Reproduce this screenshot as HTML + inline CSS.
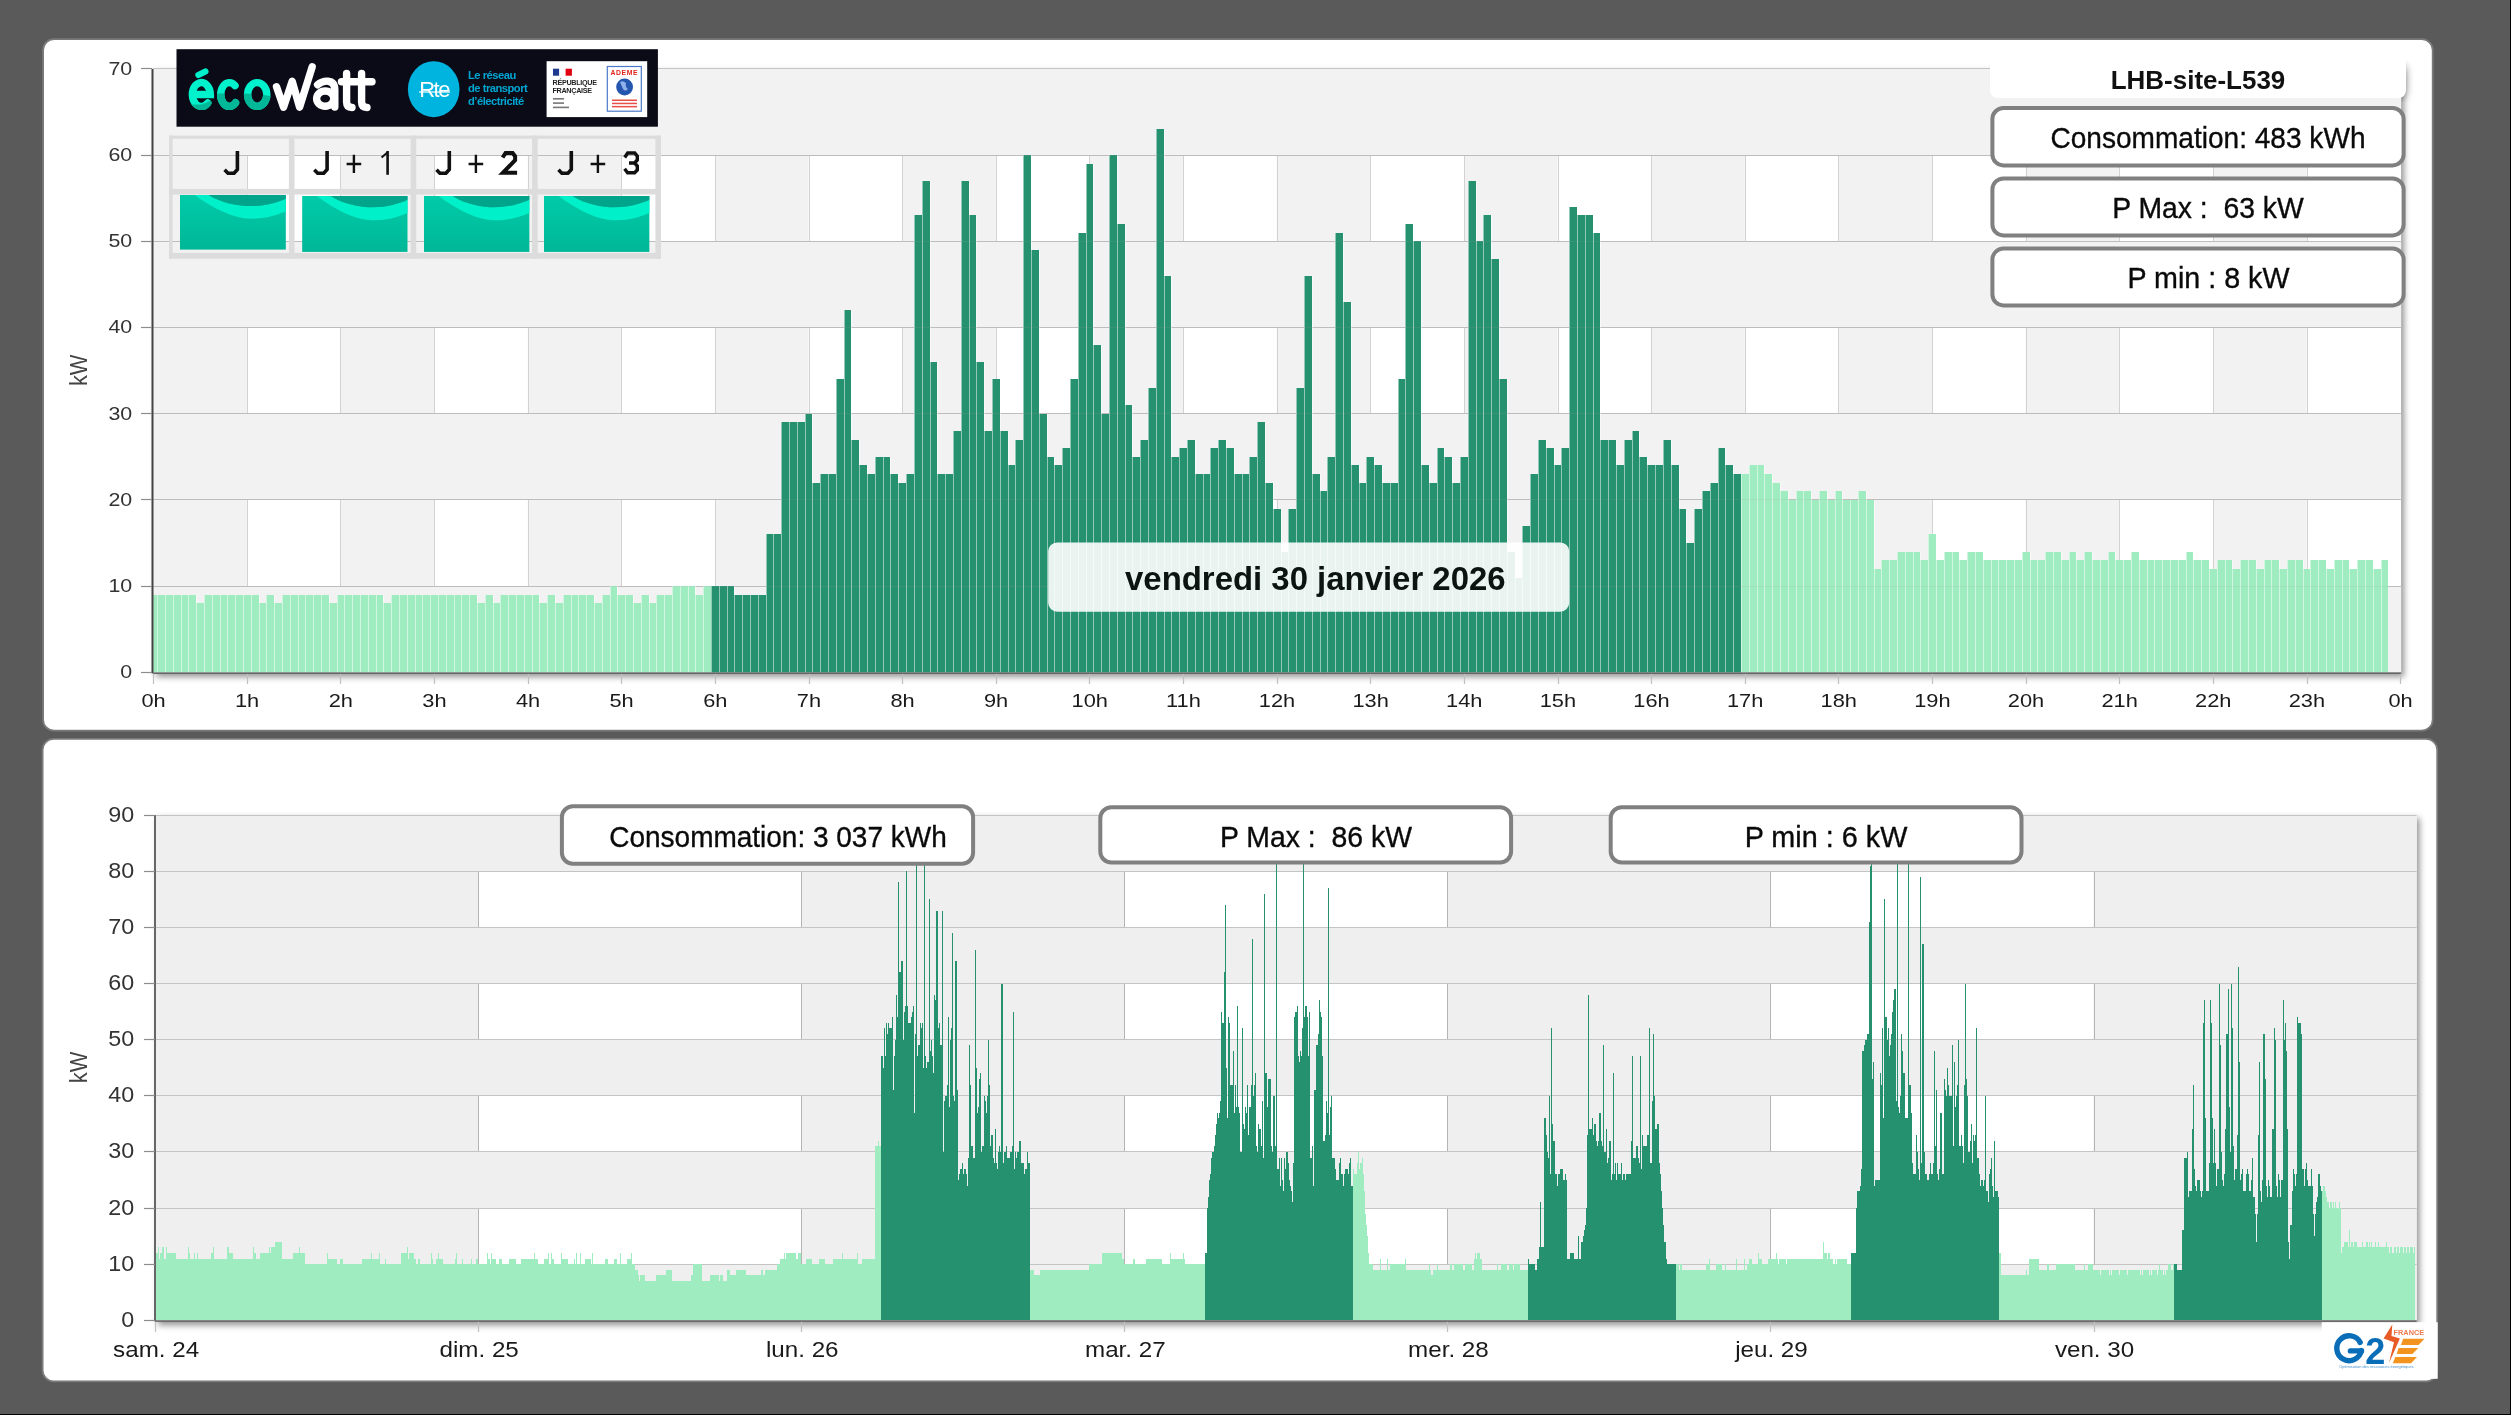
<!DOCTYPE html>
<html><head><meta charset="utf-8"><title>consommation</title>
<style>html,body{margin:0;padding:0;background:#5a5a5a;width:2511px;height:1415px;overflow:hidden;font-family:"Liberation Sans", sans-serif}</style>
</head><body>
<svg width="2511" height="1415" viewBox="0 0 2511 1415" style="position:absolute;left:0;top:0;will-change:transform">
<defs>
<linearGradient id="shR" x1="0" x2="1" y1="0" y2="0"><stop offset="0" stop-color="#000" stop-opacity="0.28"/><stop offset="1" stop-color="#000" stop-opacity="0"/></linearGradient>
<linearGradient id="shB" x1="0" x2="0" y1="0" y2="1"><stop offset="0" stop-color="#000" stop-opacity="0.28"/><stop offset="1" stop-color="#000" stop-opacity="0"/></linearGradient>
<linearGradient id="ecoG" x1="0" x2="0" y1="0" y2="1"><stop offset="0" stop-color="#00f2cc"/><stop offset="0.5" stop-color="#00efc9"/><stop offset="0.56" stop-color="#00b998"/><stop offset="1" stop-color="#00c7a4"/></linearGradient>
<filter id="blurSh" x="-5%" y="-5%" width="110%" height="110%"><feGaussianBlur stdDeviation="3.2"/></filter>
<linearGradient id="ewImg" x1="0" x2="0" y1="0" y2="1"><stop offset="0" stop-color="#00cba9"/><stop offset="1" stop-color="#00b797"/></linearGradient>
</defs>
<rect x="0" y="0" width="2511" height="1415" fill="#5a5a5a"/>
<rect x="2510" y="0" width="1" height="1415" fill="#000"/>
<rect x="0" y="1414" width="2511" height="1" fill="#000"/>
<rect x="43.1" y="39.1" width="2389.6" height="691.6" rx="11" ry="11" fill="#fff" stroke="#7a7a7a" stroke-width="1.8"/>
<rect x="42.6" y="738.9" width="2394.6" height="642.4" rx="11" ry="11" fill="#fff" stroke="#7a7a7a" stroke-width="1.8"/>
<rect x="156.2" y="71.9" width="2247.9" height="605" fill="#000" fill-opacity="0.42" filter="url(#blurSh)"/>
<rect x="1993" y="62" width="415" height="38" rx="9" fill="#000" fill-opacity="0.25" filter="url(#blurSh)"/>
<rect x="153.2" y="68.9" width="2247.9" height="603.5" fill="#fff"/>
<rect x="153.2" y="68.9" width="93.62" height="603.5" fill="#f2f2f2"/>
<rect x="340.45" y="68.9" width="93.62" height="603.5" fill="#f2f2f2"/>
<rect x="527.7" y="68.9" width="93.62" height="603.5" fill="#f2f2f2"/>
<rect x="714.95" y="68.9" width="93.62" height="603.5" fill="#f2f2f2"/>
<rect x="902.2" y="68.9" width="93.62" height="603.5" fill="#f2f2f2"/>
<rect x="1089.45" y="68.9" width="93.62" height="603.5" fill="#f2f2f2"/>
<rect x="1276.7" y="68.9" width="93.62" height="603.5" fill="#f2f2f2"/>
<rect x="1463.95" y="68.9" width="93.62" height="603.5" fill="#f2f2f2"/>
<rect x="1651.2" y="68.9" width="93.62" height="603.5" fill="#f2f2f2"/>
<rect x="1838.45" y="68.9" width="93.62" height="603.5" fill="#f2f2f2"/>
<rect x="2025.7" y="68.9" width="93.62" height="603.5" fill="#f2f2f2"/>
<rect x="2212.95" y="68.9" width="93.62" height="603.5" fill="#f2f2f2"/>
<line x1="247.5" y1="68.9" x2="247.5" y2="672.4" stroke="#d2d2d2" stroke-width="1"/>
<line x1="340.5" y1="68.9" x2="340.5" y2="672.4" stroke="#d2d2d2" stroke-width="1"/>
<line x1="434.5" y1="68.9" x2="434.5" y2="672.4" stroke="#d2d2d2" stroke-width="1"/>
<line x1="528.5" y1="68.9" x2="528.5" y2="672.4" stroke="#d2d2d2" stroke-width="1"/>
<line x1="621.5" y1="68.9" x2="621.5" y2="672.4" stroke="#d2d2d2" stroke-width="1"/>
<line x1="715.5" y1="68.9" x2="715.5" y2="672.4" stroke="#d2d2d2" stroke-width="1"/>
<line x1="809.5" y1="68.9" x2="809.5" y2="672.4" stroke="#d2d2d2" stroke-width="1"/>
<line x1="902.5" y1="68.9" x2="902.5" y2="672.4" stroke="#d2d2d2" stroke-width="1"/>
<line x1="996.5" y1="68.9" x2="996.5" y2="672.4" stroke="#d2d2d2" stroke-width="1"/>
<line x1="1089.5" y1="68.9" x2="1089.5" y2="672.4" stroke="#d2d2d2" stroke-width="1"/>
<line x1="1183.5" y1="68.9" x2="1183.5" y2="672.4" stroke="#d2d2d2" stroke-width="1"/>
<line x1="1277.5" y1="68.9" x2="1277.5" y2="672.4" stroke="#d2d2d2" stroke-width="1"/>
<line x1="1370.5" y1="68.9" x2="1370.5" y2="672.4" stroke="#d2d2d2" stroke-width="1"/>
<line x1="1464.5" y1="68.9" x2="1464.5" y2="672.4" stroke="#d2d2d2" stroke-width="1"/>
<line x1="1558.5" y1="68.9" x2="1558.5" y2="672.4" stroke="#d2d2d2" stroke-width="1"/>
<line x1="1651.5" y1="68.9" x2="1651.5" y2="672.4" stroke="#d2d2d2" stroke-width="1"/>
<line x1="1745.5" y1="68.9" x2="1745.5" y2="672.4" stroke="#d2d2d2" stroke-width="1"/>
<line x1="1838.5" y1="68.9" x2="1838.5" y2="672.4" stroke="#d2d2d2" stroke-width="1"/>
<line x1="1932.5" y1="68.9" x2="1932.5" y2="672.4" stroke="#d2d2d2" stroke-width="1"/>
<line x1="2026.5" y1="68.9" x2="2026.5" y2="672.4" stroke="#d2d2d2" stroke-width="1"/>
<line x1="2119.5" y1="68.9" x2="2119.5" y2="672.4" stroke="#d2d2d2" stroke-width="1"/>
<line x1="2213.5" y1="68.9" x2="2213.5" y2="672.4" stroke="#d2d2d2" stroke-width="1"/>
<line x1="2307.5" y1="68.9" x2="2307.5" y2="672.4" stroke="#d2d2d2" stroke-width="1"/>
<rect x="153.2" y="586.19" width="2247.9" height="86.21" fill="#f2f2f2"/>
<rect x="153.2" y="413.76" width="2247.9" height="86.21" fill="#f2f2f2"/>
<rect x="153.2" y="241.33" width="2247.9" height="86.21" fill="#f2f2f2"/>
<rect x="153.2" y="68.9" width="2247.9" height="86.21" fill="#f2f2f2"/>
<line x1="153.2" y1="586.5" x2="2401.1" y2="586.5" stroke="#c4c4c4" stroke-width="1"/>
<line x1="153.2" y1="499.5" x2="2401.1" y2="499.5" stroke="#c4c4c4" stroke-width="1"/>
<line x1="153.2" y1="413.5" x2="2401.1" y2="413.5" stroke="#c4c4c4" stroke-width="1"/>
<line x1="153.2" y1="327.5" x2="2401.1" y2="327.5" stroke="#c4c4c4" stroke-width="1"/>
<line x1="153.2" y1="241.5" x2="2401.1" y2="241.5" stroke="#c4c4c4" stroke-width="1"/>
<line x1="153.2" y1="155.5" x2="2401.1" y2="155.5" stroke="#c4c4c4" stroke-width="1"/>
<line x1="153.2" y1="68.5" x2="2401.1" y2="68.5" stroke="#c4c4c4" stroke-width="1"/>
<rect x="153.2" y="595" width="3.8" height="77.4" fill="#a0ecc1"/>
<rect x="157" y="595" width="8" height="77.4" fill="#a0ecc1"/>
<rect x="165" y="595" width="8" height="77.4" fill="#a0ecc1"/>
<rect x="173" y="595" width="8" height="77.4" fill="#a0ecc1"/>
<rect x="181" y="595" width="7" height="77.4" fill="#a0ecc1"/>
<rect x="188" y="595" width="8" height="77.4" fill="#a0ecc1"/>
<rect x="196" y="603" width="8" height="69.4" fill="#a0ecc1"/>
<rect x="204" y="595" width="8" height="77.4" fill="#a0ecc1"/>
<rect x="212" y="595" width="8" height="77.4" fill="#a0ecc1"/>
<rect x="220" y="595" width="7" height="77.4" fill="#a0ecc1"/>
<rect x="227" y="595" width="8" height="77.4" fill="#a0ecc1"/>
<rect x="235" y="595" width="8" height="77.4" fill="#a0ecc1"/>
<rect x="243" y="595" width="8" height="77.4" fill="#a0ecc1"/>
<rect x="251" y="595" width="8" height="77.4" fill="#a0ecc1"/>
<rect x="259" y="603" width="7" height="69.4" fill="#a0ecc1"/>
<rect x="266" y="595" width="8" height="77.4" fill="#a0ecc1"/>
<rect x="274" y="603" width="8" height="69.4" fill="#a0ecc1"/>
<rect x="282" y="595" width="8" height="77.4" fill="#a0ecc1"/>
<rect x="290" y="595" width="8" height="77.4" fill="#a0ecc1"/>
<rect x="298" y="595" width="7" height="77.4" fill="#a0ecc1"/>
<rect x="305" y="595" width="8" height="77.4" fill="#a0ecc1"/>
<rect x="313" y="595" width="8" height="77.4" fill="#a0ecc1"/>
<rect x="321" y="595" width="8" height="77.4" fill="#a0ecc1"/>
<rect x="329" y="603" width="8" height="69.4" fill="#a0ecc1"/>
<rect x="337" y="595" width="7" height="77.4" fill="#a0ecc1"/>
<rect x="344" y="595" width="8" height="77.4" fill="#a0ecc1"/>
<rect x="352" y="595" width="8" height="77.4" fill="#a0ecc1"/>
<rect x="360" y="595" width="8" height="77.4" fill="#a0ecc1"/>
<rect x="368" y="595" width="8" height="77.4" fill="#a0ecc1"/>
<rect x="376" y="595" width="7" height="77.4" fill="#a0ecc1"/>
<rect x="383" y="603" width="8" height="69.4" fill="#a0ecc1"/>
<rect x="391" y="595" width="8" height="77.4" fill="#a0ecc1"/>
<rect x="399" y="595" width="8" height="77.4" fill="#a0ecc1"/>
<rect x="407" y="595" width="8" height="77.4" fill="#a0ecc1"/>
<rect x="415" y="595" width="7" height="77.4" fill="#a0ecc1"/>
<rect x="422" y="595" width="8" height="77.4" fill="#a0ecc1"/>
<rect x="430" y="595" width="8" height="77.4" fill="#a0ecc1"/>
<rect x="438" y="595" width="8" height="77.4" fill="#a0ecc1"/>
<rect x="446" y="595" width="8" height="77.4" fill="#a0ecc1"/>
<rect x="454" y="595" width="7" height="77.4" fill="#a0ecc1"/>
<rect x="461" y="595" width="8" height="77.4" fill="#a0ecc1"/>
<rect x="469" y="595" width="8" height="77.4" fill="#a0ecc1"/>
<rect x="477" y="603" width="8" height="69.4" fill="#a0ecc1"/>
<rect x="485" y="595" width="8" height="77.4" fill="#a0ecc1"/>
<rect x="493" y="603" width="7" height="69.4" fill="#a0ecc1"/>
<rect x="500" y="595" width="8" height="77.4" fill="#a0ecc1"/>
<rect x="508" y="595" width="8" height="77.4" fill="#a0ecc1"/>
<rect x="516" y="595" width="8" height="77.4" fill="#a0ecc1"/>
<rect x="524" y="595" width="8" height="77.4" fill="#a0ecc1"/>
<rect x="532" y="595" width="7" height="77.4" fill="#a0ecc1"/>
<rect x="539" y="603" width="8" height="69.4" fill="#a0ecc1"/>
<rect x="547" y="595" width="8" height="77.4" fill="#a0ecc1"/>
<rect x="555" y="603" width="8" height="69.4" fill="#a0ecc1"/>
<rect x="563" y="595" width="8" height="77.4" fill="#a0ecc1"/>
<rect x="571" y="595" width="7" height="77.4" fill="#a0ecc1"/>
<rect x="578" y="595" width="8" height="77.4" fill="#a0ecc1"/>
<rect x="586" y="595" width="8" height="77.4" fill="#a0ecc1"/>
<rect x="594" y="603" width="8" height="69.4" fill="#a0ecc1"/>
<rect x="602" y="595" width="8" height="77.4" fill="#a0ecc1"/>
<rect x="610" y="586" width="7" height="86.4" fill="#a0ecc1"/>
<rect x="617" y="595" width="8" height="77.4" fill="#a0ecc1"/>
<rect x="625" y="595" width="8" height="77.4" fill="#a0ecc1"/>
<rect x="633" y="603" width="8" height="69.4" fill="#a0ecc1"/>
<rect x="641" y="595" width="8" height="77.4" fill="#a0ecc1"/>
<rect x="649" y="603" width="7" height="69.4" fill="#a0ecc1"/>
<rect x="656" y="595" width="8" height="77.4" fill="#a0ecc1"/>
<rect x="664" y="595" width="8" height="77.4" fill="#a0ecc1"/>
<rect x="672" y="586" width="8" height="86.4" fill="#a0ecc1"/>
<rect x="680" y="586" width="8" height="86.4" fill="#a0ecc1"/>
<rect x="688" y="586" width="7" height="86.4" fill="#a0ecc1"/>
<rect x="695" y="595" width="8" height="77.4" fill="#a0ecc1"/>
<rect x="703" y="586" width="8" height="86.4" fill="#a0ecc1"/>
<rect x="711" y="586" width="8" height="86.4" fill="#25916f"/>
<rect x="719" y="586" width="8" height="86.4" fill="#25916f"/>
<rect x="727" y="586" width="7" height="86.4" fill="#25916f"/>
<rect x="734" y="595" width="8" height="77.4" fill="#25916f"/>
<rect x="742" y="595" width="8" height="77.4" fill="#25916f"/>
<rect x="750" y="595" width="8" height="77.4" fill="#25916f"/>
<rect x="758" y="595" width="8" height="77.4" fill="#25916f"/>
<rect x="766" y="534" width="7" height="138.4" fill="#25916f"/>
<rect x="773" y="534" width="8" height="138.4" fill="#25916f"/>
<rect x="781" y="422" width="8" height="250.4" fill="#25916f"/>
<rect x="789" y="422" width="8" height="250.4" fill="#25916f"/>
<rect x="797" y="422" width="8" height="250.4" fill="#25916f"/>
<rect x="805" y="414" width="7" height="258.4" fill="#25916f"/>
<rect x="812" y="483" width="8" height="189.4" fill="#25916f"/>
<rect x="820" y="474" width="8" height="198.4" fill="#25916f"/>
<rect x="828" y="474" width="8" height="198.4" fill="#25916f"/>
<rect x="836" y="379" width="8" height="293.4" fill="#25916f"/>
<rect x="844" y="310" width="7" height="362.4" fill="#25916f"/>
<rect x="851" y="440" width="8" height="232.4" fill="#25916f"/>
<rect x="859" y="465" width="8" height="207.4" fill="#25916f"/>
<rect x="867" y="474" width="8" height="198.4" fill="#25916f"/>
<rect x="875" y="457" width="8" height="215.4" fill="#25916f"/>
<rect x="883" y="457" width="7" height="215.4" fill="#25916f"/>
<rect x="890" y="474" width="8" height="198.4" fill="#25916f"/>
<rect x="898" y="483" width="8" height="189.4" fill="#25916f"/>
<rect x="906" y="474" width="8" height="198.4" fill="#25916f"/>
<rect x="914" y="215" width="8" height="457.4" fill="#25916f"/>
<rect x="922" y="181" width="8" height="491.4" fill="#25916f"/>
<rect x="930" y="362" width="7" height="310.4" fill="#25916f"/>
<rect x="937" y="474" width="8" height="198.4" fill="#25916f"/>
<rect x="945" y="474" width="8" height="198.4" fill="#25916f"/>
<rect x="953" y="431" width="8" height="241.4" fill="#25916f"/>
<rect x="961" y="181" width="8" height="491.4" fill="#25916f"/>
<rect x="969" y="215" width="7" height="457.4" fill="#25916f"/>
<rect x="976" y="362" width="8" height="310.4" fill="#25916f"/>
<rect x="984" y="431" width="8" height="241.4" fill="#25916f"/>
<rect x="992" y="379" width="8" height="293.4" fill="#25916f"/>
<rect x="1000" y="431" width="8" height="241.4" fill="#25916f"/>
<rect x="1008" y="465" width="7" height="207.4" fill="#25916f"/>
<rect x="1015" y="440" width="8" height="232.4" fill="#25916f"/>
<rect x="1023" y="155" width="8" height="517.4" fill="#25916f"/>
<rect x="1031" y="250" width="8" height="422.4" fill="#25916f"/>
<rect x="1039" y="414" width="8" height="258.4" fill="#25916f"/>
<rect x="1047" y="457" width="7" height="215.4" fill="#25916f"/>
<rect x="1054" y="465" width="8" height="207.4" fill="#25916f"/>
<rect x="1062" y="448" width="8" height="224.4" fill="#25916f"/>
<rect x="1070" y="379" width="8" height="293.4" fill="#25916f"/>
<rect x="1078" y="233" width="8" height="439.4" fill="#25916f"/>
<rect x="1086" y="164" width="7" height="508.4" fill="#25916f"/>
<rect x="1093" y="345" width="8" height="327.4" fill="#25916f"/>
<rect x="1101" y="414" width="8" height="258.4" fill="#25916f"/>
<rect x="1109" y="155" width="8" height="517.4" fill="#25916f"/>
<rect x="1117" y="224" width="8" height="448.4" fill="#25916f"/>
<rect x="1125" y="405" width="7" height="267.4" fill="#25916f"/>
<rect x="1132" y="457" width="8" height="215.4" fill="#25916f"/>
<rect x="1140" y="440" width="8" height="232.4" fill="#25916f"/>
<rect x="1148" y="388" width="8" height="284.4" fill="#25916f"/>
<rect x="1156" y="129" width="8" height="543.4" fill="#25916f"/>
<rect x="1164" y="276" width="7" height="396.4" fill="#25916f"/>
<rect x="1171" y="457" width="8" height="215.4" fill="#25916f"/>
<rect x="1179" y="448" width="8" height="224.4" fill="#25916f"/>
<rect x="1187" y="440" width="8" height="232.4" fill="#25916f"/>
<rect x="1195" y="474" width="8" height="198.4" fill="#25916f"/>
<rect x="1203" y="474" width="7" height="198.4" fill="#25916f"/>
<rect x="1210" y="448" width="8" height="224.4" fill="#25916f"/>
<rect x="1218" y="440" width="8" height="232.4" fill="#25916f"/>
<rect x="1226" y="448" width="8" height="224.4" fill="#25916f"/>
<rect x="1234" y="474" width="8" height="198.4" fill="#25916f"/>
<rect x="1242" y="474" width="7" height="198.4" fill="#25916f"/>
<rect x="1249" y="457" width="8" height="215.4" fill="#25916f"/>
<rect x="1257" y="422" width="8" height="250.4" fill="#25916f"/>
<rect x="1265" y="483" width="8" height="189.4" fill="#25916f"/>
<rect x="1273" y="509" width="8" height="163.4" fill="#25916f"/>
<rect x="1281" y="552" width="7" height="120.4" fill="#25916f"/>
<rect x="1288" y="509" width="8" height="163.4" fill="#25916f"/>
<rect x="1296" y="388" width="8" height="284.4" fill="#25916f"/>
<rect x="1304" y="276" width="8" height="396.4" fill="#25916f"/>
<rect x="1312" y="474" width="8" height="198.4" fill="#25916f"/>
<rect x="1320" y="491" width="7" height="181.4" fill="#25916f"/>
<rect x="1327" y="457" width="8" height="215.4" fill="#25916f"/>
<rect x="1335" y="233" width="8" height="439.4" fill="#25916f"/>
<rect x="1343" y="302" width="8" height="370.4" fill="#25916f"/>
<rect x="1351" y="465" width="8" height="207.4" fill="#25916f"/>
<rect x="1359" y="483" width="7" height="189.4" fill="#25916f"/>
<rect x="1366" y="457" width="8" height="215.4" fill="#25916f"/>
<rect x="1374" y="465" width="8" height="207.4" fill="#25916f"/>
<rect x="1382" y="483" width="8" height="189.4" fill="#25916f"/>
<rect x="1390" y="483" width="8" height="189.4" fill="#25916f"/>
<rect x="1398" y="379" width="7" height="293.4" fill="#25916f"/>
<rect x="1405" y="224" width="8" height="448.4" fill="#25916f"/>
<rect x="1413" y="241" width="8" height="431.4" fill="#25916f"/>
<rect x="1421" y="465" width="8" height="207.4" fill="#25916f"/>
<rect x="1429" y="483" width="8" height="189.4" fill="#25916f"/>
<rect x="1437" y="448" width="7" height="224.4" fill="#25916f"/>
<rect x="1444" y="457" width="8" height="215.4" fill="#25916f"/>
<rect x="1452" y="483" width="8" height="189.4" fill="#25916f"/>
<rect x="1460" y="457" width="8" height="215.4" fill="#25916f"/>
<rect x="1468" y="181" width="8" height="491.4" fill="#25916f"/>
<rect x="1476" y="241" width="7" height="431.4" fill="#25916f"/>
<rect x="1483" y="215" width="8" height="457.4" fill="#25916f"/>
<rect x="1491" y="259" width="8" height="413.4" fill="#25916f"/>
<rect x="1499" y="379" width="8" height="293.4" fill="#25916f"/>
<rect x="1507" y="552" width="8" height="120.4" fill="#25916f"/>
<rect x="1515" y="578" width="7" height="94.4" fill="#25916f"/>
<rect x="1522" y="526" width="8" height="146.4" fill="#25916f"/>
<rect x="1530" y="474" width="8" height="198.4" fill="#25916f"/>
<rect x="1538" y="440" width="8" height="232.4" fill="#25916f"/>
<rect x="1546" y="448" width="8" height="224.4" fill="#25916f"/>
<rect x="1554" y="465" width="7" height="207.4" fill="#25916f"/>
<rect x="1561" y="448" width="8" height="224.4" fill="#25916f"/>
<rect x="1569" y="207" width="8" height="465.4" fill="#25916f"/>
<rect x="1577" y="215" width="8" height="457.4" fill="#25916f"/>
<rect x="1585" y="215" width="8" height="457.4" fill="#25916f"/>
<rect x="1593" y="233" width="7" height="439.4" fill="#25916f"/>
<rect x="1600" y="440" width="8" height="232.4" fill="#25916f"/>
<rect x="1608" y="440" width="8" height="232.4" fill="#25916f"/>
<rect x="1616" y="465" width="8" height="207.4" fill="#25916f"/>
<rect x="1624" y="440" width="8" height="232.4" fill="#25916f"/>
<rect x="1632" y="431" width="7" height="241.4" fill="#25916f"/>
<rect x="1639" y="457" width="8" height="215.4" fill="#25916f"/>
<rect x="1647" y="465" width="8" height="207.4" fill="#25916f"/>
<rect x="1655" y="465" width="8" height="207.4" fill="#25916f"/>
<rect x="1663" y="440" width="8" height="232.4" fill="#25916f"/>
<rect x="1671" y="465" width="8" height="207.4" fill="#25916f"/>
<rect x="1679" y="509" width="7" height="163.4" fill="#25916f"/>
<rect x="1686" y="543" width="8" height="129.4" fill="#25916f"/>
<rect x="1694" y="509" width="8" height="163.4" fill="#25916f"/>
<rect x="1702" y="491" width="8" height="181.4" fill="#25916f"/>
<rect x="1710" y="483" width="8" height="189.4" fill="#25916f"/>
<rect x="1718" y="448" width="7" height="224.4" fill="#25916f"/>
<rect x="1725" y="465" width="8" height="207.4" fill="#25916f"/>
<rect x="1733" y="474" width="8" height="198.4" fill="#25916f"/>
<rect x="1741" y="474" width="8" height="198.4" fill="#a0ecc1"/>
<rect x="1749" y="465" width="8" height="207.4" fill="#a0ecc1"/>
<rect x="1757" y="465" width="7" height="207.4" fill="#a0ecc1"/>
<rect x="1764" y="474" width="8" height="198.4" fill="#a0ecc1"/>
<rect x="1772" y="483" width="8" height="189.4" fill="#a0ecc1"/>
<rect x="1780" y="491" width="8" height="181.4" fill="#a0ecc1"/>
<rect x="1788" y="500" width="8" height="172.4" fill="#a0ecc1"/>
<rect x="1796" y="491" width="7" height="181.4" fill="#a0ecc1"/>
<rect x="1803" y="491" width="8" height="181.4" fill="#a0ecc1"/>
<rect x="1811" y="500" width="8" height="172.4" fill="#a0ecc1"/>
<rect x="1819" y="491" width="8" height="181.4" fill="#a0ecc1"/>
<rect x="1827" y="500" width="8" height="172.4" fill="#a0ecc1"/>
<rect x="1835" y="491" width="7" height="181.4" fill="#a0ecc1"/>
<rect x="1842" y="500" width="8" height="172.4" fill="#a0ecc1"/>
<rect x="1850" y="500" width="8" height="172.4" fill="#a0ecc1"/>
<rect x="1858" y="491" width="8" height="181.4" fill="#a0ecc1"/>
<rect x="1866" y="500" width="8" height="172.4" fill="#a0ecc1"/>
<rect x="1874" y="569" width="7" height="103.4" fill="#a0ecc1"/>
<rect x="1881" y="560" width="8" height="112.4" fill="#a0ecc1"/>
<rect x="1889" y="560" width="8" height="112.4" fill="#a0ecc1"/>
<rect x="1897" y="552" width="8" height="120.4" fill="#a0ecc1"/>
<rect x="1905" y="552" width="8" height="120.4" fill="#a0ecc1"/>
<rect x="1913" y="552" width="7" height="120.4" fill="#a0ecc1"/>
<rect x="1920" y="560" width="8" height="112.4" fill="#a0ecc1"/>
<rect x="1928" y="534" width="8" height="138.4" fill="#a0ecc1"/>
<rect x="1936" y="560" width="8" height="112.4" fill="#a0ecc1"/>
<rect x="1944" y="552" width="8" height="120.4" fill="#a0ecc1"/>
<rect x="1952" y="552" width="7" height="120.4" fill="#a0ecc1"/>
<rect x="1959" y="560" width="8" height="112.4" fill="#a0ecc1"/>
<rect x="1967" y="552" width="8" height="120.4" fill="#a0ecc1"/>
<rect x="1975" y="552" width="8" height="120.4" fill="#a0ecc1"/>
<rect x="1983" y="560" width="8" height="112.4" fill="#a0ecc1"/>
<rect x="1991" y="560" width="7" height="112.4" fill="#a0ecc1"/>
<rect x="1998" y="560" width="8" height="112.4" fill="#a0ecc1"/>
<rect x="2006" y="560" width="8" height="112.4" fill="#a0ecc1"/>
<rect x="2014" y="560" width="8" height="112.4" fill="#a0ecc1"/>
<rect x="2022" y="552" width="8" height="120.4" fill="#a0ecc1"/>
<rect x="2030" y="560" width="7" height="112.4" fill="#a0ecc1"/>
<rect x="2037" y="560" width="8" height="112.4" fill="#a0ecc1"/>
<rect x="2045" y="552" width="8" height="120.4" fill="#a0ecc1"/>
<rect x="2053" y="552" width="8" height="120.4" fill="#a0ecc1"/>
<rect x="2061" y="560" width="8" height="112.4" fill="#a0ecc1"/>
<rect x="2069" y="552" width="7" height="120.4" fill="#a0ecc1"/>
<rect x="2076" y="560" width="8" height="112.4" fill="#a0ecc1"/>
<rect x="2084" y="552" width="8" height="120.4" fill="#a0ecc1"/>
<rect x="2092" y="560" width="8" height="112.4" fill="#a0ecc1"/>
<rect x="2100" y="560" width="8" height="112.4" fill="#a0ecc1"/>
<rect x="2108" y="552" width="7" height="120.4" fill="#a0ecc1"/>
<rect x="2115" y="560" width="8" height="112.4" fill="#a0ecc1"/>
<rect x="2123" y="560" width="8" height="112.4" fill="#a0ecc1"/>
<rect x="2131" y="552" width="8" height="120.4" fill="#a0ecc1"/>
<rect x="2139" y="560" width="8" height="112.4" fill="#a0ecc1"/>
<rect x="2147" y="560" width="7" height="112.4" fill="#a0ecc1"/>
<rect x="2154" y="560" width="8" height="112.4" fill="#a0ecc1"/>
<rect x="2162" y="560" width="8" height="112.4" fill="#a0ecc1"/>
<rect x="2170" y="560" width="8" height="112.4" fill="#a0ecc1"/>
<rect x="2178" y="560" width="8" height="112.4" fill="#a0ecc1"/>
<rect x="2186" y="552" width="7" height="120.4" fill="#a0ecc1"/>
<rect x="2193" y="560" width="8" height="112.4" fill="#a0ecc1"/>
<rect x="2201" y="560" width="8" height="112.4" fill="#a0ecc1"/>
<rect x="2209" y="569" width="8" height="103.4" fill="#a0ecc1"/>
<rect x="2217" y="560" width="8" height="112.4" fill="#a0ecc1"/>
<rect x="2225" y="560" width="7" height="112.4" fill="#a0ecc1"/>
<rect x="2232" y="569" width="8" height="103.4" fill="#a0ecc1"/>
<rect x="2240" y="560" width="8" height="112.4" fill="#a0ecc1"/>
<rect x="2248" y="560" width="8" height="112.4" fill="#a0ecc1"/>
<rect x="2256" y="569" width="8" height="103.4" fill="#a0ecc1"/>
<rect x="2264" y="560" width="7" height="112.4" fill="#a0ecc1"/>
<rect x="2271" y="560" width="8" height="112.4" fill="#a0ecc1"/>
<rect x="2279" y="569" width="8" height="103.4" fill="#a0ecc1"/>
<rect x="2287" y="560" width="8" height="112.4" fill="#a0ecc1"/>
<rect x="2295" y="560" width="8" height="112.4" fill="#a0ecc1"/>
<rect x="2303" y="569" width="7" height="103.4" fill="#a0ecc1"/>
<rect x="2310" y="560" width="8" height="112.4" fill="#a0ecc1"/>
<rect x="2318" y="560" width="8" height="112.4" fill="#a0ecc1"/>
<rect x="2326" y="569" width="8" height="103.4" fill="#a0ecc1"/>
<rect x="2334" y="560" width="8" height="112.4" fill="#a0ecc1"/>
<rect x="2342" y="560" width="7" height="112.4" fill="#a0ecc1"/>
<rect x="2349" y="569" width="8" height="103.4" fill="#a0ecc1"/>
<rect x="2357" y="560" width="8" height="112.4" fill="#a0ecc1"/>
<rect x="2365" y="560" width="8" height="112.4" fill="#a0ecc1"/>
<rect x="2373" y="569" width="8" height="103.4" fill="#a0ecc1"/>
<rect x="2381" y="560" width="7" height="112.4" fill="#a0ecc1"/>
<rect x="157" y="595" width="1" height="77.4" fill="#fff" fill-opacity="0.5"/>
<rect x="165" y="595" width="1" height="77.4" fill="#fff" fill-opacity="0.5"/>
<rect x="173" y="595" width="1" height="77.4" fill="#fff" fill-opacity="0.5"/>
<rect x="181" y="595" width="1" height="77.4" fill="#fff" fill-opacity="0.5"/>
<rect x="188" y="595" width="1" height="77.4" fill="#fff" fill-opacity="0.5"/>
<rect x="196" y="595" width="1" height="77.4" fill="#fff" fill-opacity="0.5"/>
<rect x="204" y="595" width="1" height="77.4" fill="#fff" fill-opacity="0.5"/>
<rect x="212" y="595" width="1" height="77.4" fill="#fff" fill-opacity="0.5"/>
<rect x="220" y="595" width="1" height="77.4" fill="#fff" fill-opacity="0.5"/>
<rect x="227" y="595" width="1" height="77.4" fill="#fff" fill-opacity="0.5"/>
<rect x="235" y="595" width="1" height="77.4" fill="#fff" fill-opacity="0.5"/>
<rect x="243" y="595" width="1" height="77.4" fill="#fff" fill-opacity="0.5"/>
<rect x="251" y="595" width="1" height="77.4" fill="#fff" fill-opacity="0.5"/>
<rect x="259" y="595" width="1" height="77.4" fill="#fff" fill-opacity="0.5"/>
<rect x="266" y="595" width="1" height="77.4" fill="#fff" fill-opacity="0.5"/>
<rect x="274" y="595" width="1" height="77.4" fill="#fff" fill-opacity="0.5"/>
<rect x="282" y="595" width="1" height="77.4" fill="#fff" fill-opacity="0.5"/>
<rect x="290" y="595" width="1" height="77.4" fill="#fff" fill-opacity="0.5"/>
<rect x="298" y="595" width="1" height="77.4" fill="#fff" fill-opacity="0.5"/>
<rect x="305" y="595" width="1" height="77.4" fill="#fff" fill-opacity="0.5"/>
<rect x="313" y="595" width="1" height="77.4" fill="#fff" fill-opacity="0.5"/>
<rect x="321" y="595" width="1" height="77.4" fill="#fff" fill-opacity="0.5"/>
<rect x="329" y="595" width="1" height="77.4" fill="#fff" fill-opacity="0.5"/>
<rect x="337" y="595" width="1" height="77.4" fill="#fff" fill-opacity="0.5"/>
<rect x="344" y="595" width="1" height="77.4" fill="#fff" fill-opacity="0.5"/>
<rect x="352" y="595" width="1" height="77.4" fill="#fff" fill-opacity="0.5"/>
<rect x="360" y="595" width="1" height="77.4" fill="#fff" fill-opacity="0.5"/>
<rect x="368" y="595" width="1" height="77.4" fill="#fff" fill-opacity="0.5"/>
<rect x="376" y="595" width="1" height="77.4" fill="#fff" fill-opacity="0.5"/>
<rect x="383" y="595" width="1" height="77.4" fill="#fff" fill-opacity="0.5"/>
<rect x="391" y="595" width="1" height="77.4" fill="#fff" fill-opacity="0.5"/>
<rect x="399" y="595" width="1" height="77.4" fill="#fff" fill-opacity="0.5"/>
<rect x="407" y="595" width="1" height="77.4" fill="#fff" fill-opacity="0.5"/>
<rect x="415" y="595" width="1" height="77.4" fill="#fff" fill-opacity="0.5"/>
<rect x="422" y="595" width="1" height="77.4" fill="#fff" fill-opacity="0.5"/>
<rect x="430" y="595" width="1" height="77.4" fill="#fff" fill-opacity="0.5"/>
<rect x="438" y="595" width="1" height="77.4" fill="#fff" fill-opacity="0.5"/>
<rect x="446" y="595" width="1" height="77.4" fill="#fff" fill-opacity="0.5"/>
<rect x="454" y="595" width="1" height="77.4" fill="#fff" fill-opacity="0.5"/>
<rect x="461" y="595" width="1" height="77.4" fill="#fff" fill-opacity="0.5"/>
<rect x="469" y="595" width="1" height="77.4" fill="#fff" fill-opacity="0.5"/>
<rect x="477" y="595" width="1" height="77.4" fill="#fff" fill-opacity="0.5"/>
<rect x="485" y="595" width="1" height="77.4" fill="#fff" fill-opacity="0.5"/>
<rect x="493" y="595" width="1" height="77.4" fill="#fff" fill-opacity="0.5"/>
<rect x="500" y="595" width="1" height="77.4" fill="#fff" fill-opacity="0.5"/>
<rect x="508" y="595" width="1" height="77.4" fill="#fff" fill-opacity="0.5"/>
<rect x="516" y="595" width="1" height="77.4" fill="#fff" fill-opacity="0.5"/>
<rect x="524" y="595" width="1" height="77.4" fill="#fff" fill-opacity="0.5"/>
<rect x="532" y="595" width="1" height="77.4" fill="#fff" fill-opacity="0.5"/>
<rect x="539" y="595" width="1" height="77.4" fill="#fff" fill-opacity="0.5"/>
<rect x="547" y="595" width="1" height="77.4" fill="#fff" fill-opacity="0.5"/>
<rect x="555" y="595" width="1" height="77.4" fill="#fff" fill-opacity="0.5"/>
<rect x="563" y="595" width="1" height="77.4" fill="#fff" fill-opacity="0.5"/>
<rect x="571" y="595" width="1" height="77.4" fill="#fff" fill-opacity="0.5"/>
<rect x="578" y="595" width="1" height="77.4" fill="#fff" fill-opacity="0.5"/>
<rect x="586" y="595" width="1" height="77.4" fill="#fff" fill-opacity="0.5"/>
<rect x="594" y="595" width="1" height="77.4" fill="#fff" fill-opacity="0.5"/>
<rect x="602" y="595" width="1" height="77.4" fill="#fff" fill-opacity="0.5"/>
<rect x="610" y="586" width="1" height="86.4" fill="#fff" fill-opacity="0.5"/>
<rect x="617" y="586" width="1" height="86.4" fill="#fff" fill-opacity="0.5"/>
<rect x="625" y="595" width="1" height="77.4" fill="#fff" fill-opacity="0.5"/>
<rect x="633" y="595" width="1" height="77.4" fill="#fff" fill-opacity="0.5"/>
<rect x="641" y="595" width="1" height="77.4" fill="#fff" fill-opacity="0.5"/>
<rect x="649" y="595" width="1" height="77.4" fill="#fff" fill-opacity="0.5"/>
<rect x="656" y="595" width="1" height="77.4" fill="#fff" fill-opacity="0.5"/>
<rect x="664" y="595" width="1" height="77.4" fill="#fff" fill-opacity="0.5"/>
<rect x="672" y="586" width="1" height="86.4" fill="#fff" fill-opacity="0.5"/>
<rect x="680" y="586" width="1" height="86.4" fill="#fff" fill-opacity="0.5"/>
<rect x="688" y="586" width="1" height="86.4" fill="#fff" fill-opacity="0.5"/>
<rect x="695" y="586" width="1" height="86.4" fill="#fff" fill-opacity="0.5"/>
<rect x="703" y="586" width="1" height="86.4" fill="#fff" fill-opacity="0.5"/>
<rect x="711" y="586" width="1" height="86.4" fill="#fff" fill-opacity="0.5"/>
<rect x="719" y="586" width="1" height="86.4" fill="#fff" fill-opacity="0.5"/>
<rect x="727" y="586" width="1" height="86.4" fill="#fff" fill-opacity="0.5"/>
<rect x="734" y="586" width="1" height="86.4" fill="#fff" fill-opacity="0.5"/>
<rect x="742" y="595" width="1" height="77.4" fill="#fff" fill-opacity="0.5"/>
<rect x="750" y="595" width="1" height="77.4" fill="#fff" fill-opacity="0.5"/>
<rect x="758" y="595" width="1" height="77.4" fill="#fff" fill-opacity="0.5"/>
<rect x="766" y="534" width="1" height="138.4" fill="#fff" fill-opacity="0.5"/>
<rect x="773" y="534" width="1" height="138.4" fill="#fff" fill-opacity="0.5"/>
<rect x="781" y="422" width="1" height="250.4" fill="#fff" fill-opacity="0.5"/>
<rect x="789" y="422" width="1" height="250.4" fill="#fff" fill-opacity="0.5"/>
<rect x="797" y="422" width="1" height="250.4" fill="#fff" fill-opacity="0.5"/>
<rect x="805" y="414" width="1" height="258.4" fill="#fff" fill-opacity="0.5"/>
<rect x="812" y="414" width="1" height="258.4" fill="#fff" fill-opacity="0.5"/>
<rect x="820" y="474" width="1" height="198.4" fill="#fff" fill-opacity="0.5"/>
<rect x="828" y="474" width="1" height="198.4" fill="#fff" fill-opacity="0.5"/>
<rect x="836" y="379" width="1" height="293.4" fill="#fff" fill-opacity="0.5"/>
<rect x="844" y="310" width="1" height="362.4" fill="#fff" fill-opacity="0.5"/>
<rect x="851" y="310" width="1" height="362.4" fill="#fff" fill-opacity="0.5"/>
<rect x="859" y="440" width="1" height="232.4" fill="#fff" fill-opacity="0.5"/>
<rect x="867" y="465" width="1" height="207.4" fill="#fff" fill-opacity="0.5"/>
<rect x="875" y="457" width="1" height="215.4" fill="#fff" fill-opacity="0.5"/>
<rect x="883" y="457" width="1" height="215.4" fill="#fff" fill-opacity="0.5"/>
<rect x="890" y="457" width="1" height="215.4" fill="#fff" fill-opacity="0.5"/>
<rect x="898" y="474" width="1" height="198.4" fill="#fff" fill-opacity="0.5"/>
<rect x="906" y="474" width="1" height="198.4" fill="#fff" fill-opacity="0.5"/>
<rect x="914" y="215" width="1" height="457.4" fill="#fff" fill-opacity="0.5"/>
<rect x="922" y="181" width="1" height="491.4" fill="#fff" fill-opacity="0.5"/>
<rect x="930" y="181" width="1" height="491.4" fill="#fff" fill-opacity="0.5"/>
<rect x="937" y="362" width="1" height="310.4" fill="#fff" fill-opacity="0.5"/>
<rect x="945" y="474" width="1" height="198.4" fill="#fff" fill-opacity="0.5"/>
<rect x="953" y="431" width="1" height="241.4" fill="#fff" fill-opacity="0.5"/>
<rect x="961" y="181" width="1" height="491.4" fill="#fff" fill-opacity="0.5"/>
<rect x="969" y="181" width="1" height="491.4" fill="#fff" fill-opacity="0.5"/>
<rect x="976" y="215" width="1" height="457.4" fill="#fff" fill-opacity="0.5"/>
<rect x="984" y="362" width="1" height="310.4" fill="#fff" fill-opacity="0.5"/>
<rect x="992" y="379" width="1" height="293.4" fill="#fff" fill-opacity="0.5"/>
<rect x="1000" y="379" width="1" height="293.4" fill="#fff" fill-opacity="0.5"/>
<rect x="1008" y="431" width="1" height="241.4" fill="#fff" fill-opacity="0.5"/>
<rect x="1015" y="440" width="1" height="232.4" fill="#fff" fill-opacity="0.5"/>
<rect x="1023" y="155" width="1" height="517.4" fill="#fff" fill-opacity="0.5"/>
<rect x="1031" y="155" width="1" height="517.4" fill="#fff" fill-opacity="0.5"/>
<rect x="1039" y="250" width="1" height="422.4" fill="#fff" fill-opacity="0.5"/>
<rect x="1047" y="414" width="1" height="258.4" fill="#fff" fill-opacity="0.5"/>
<rect x="1054" y="457" width="1" height="215.4" fill="#fff" fill-opacity="0.5"/>
<rect x="1062" y="448" width="1" height="224.4" fill="#fff" fill-opacity="0.5"/>
<rect x="1070" y="379" width="1" height="293.4" fill="#fff" fill-opacity="0.5"/>
<rect x="1078" y="233" width="1" height="439.4" fill="#fff" fill-opacity="0.5"/>
<rect x="1086" y="164" width="1" height="508.4" fill="#fff" fill-opacity="0.5"/>
<rect x="1093" y="164" width="1" height="508.4" fill="#fff" fill-opacity="0.5"/>
<rect x="1101" y="345" width="1" height="327.4" fill="#fff" fill-opacity="0.5"/>
<rect x="1109" y="155" width="1" height="517.4" fill="#fff" fill-opacity="0.5"/>
<rect x="1117" y="155" width="1" height="517.4" fill="#fff" fill-opacity="0.5"/>
<rect x="1125" y="224" width="1" height="448.4" fill="#fff" fill-opacity="0.5"/>
<rect x="1132" y="405" width="1" height="267.4" fill="#fff" fill-opacity="0.5"/>
<rect x="1140" y="440" width="1" height="232.4" fill="#fff" fill-opacity="0.5"/>
<rect x="1148" y="388" width="1" height="284.4" fill="#fff" fill-opacity="0.5"/>
<rect x="1156" y="129" width="1" height="543.4" fill="#fff" fill-opacity="0.5"/>
<rect x="1164" y="129" width="1" height="543.4" fill="#fff" fill-opacity="0.5"/>
<rect x="1171" y="276" width="1" height="396.4" fill="#fff" fill-opacity="0.5"/>
<rect x="1179" y="448" width="1" height="224.4" fill="#fff" fill-opacity="0.5"/>
<rect x="1187" y="440" width="1" height="232.4" fill="#fff" fill-opacity="0.5"/>
<rect x="1195" y="440" width="1" height="232.4" fill="#fff" fill-opacity="0.5"/>
<rect x="1203" y="474" width="1" height="198.4" fill="#fff" fill-opacity="0.5"/>
<rect x="1210" y="448" width="1" height="224.4" fill="#fff" fill-opacity="0.5"/>
<rect x="1218" y="440" width="1" height="232.4" fill="#fff" fill-opacity="0.5"/>
<rect x="1226" y="440" width="1" height="232.4" fill="#fff" fill-opacity="0.5"/>
<rect x="1234" y="448" width="1" height="224.4" fill="#fff" fill-opacity="0.5"/>
<rect x="1242" y="474" width="1" height="198.4" fill="#fff" fill-opacity="0.5"/>
<rect x="1249" y="457" width="1" height="215.4" fill="#fff" fill-opacity="0.5"/>
<rect x="1257" y="422" width="1" height="250.4" fill="#fff" fill-opacity="0.5"/>
<rect x="1265" y="422" width="1" height="250.4" fill="#fff" fill-opacity="0.5"/>
<rect x="1273" y="483" width="1" height="189.4" fill="#fff" fill-opacity="0.5"/>
<rect x="1281" y="509" width="1" height="163.4" fill="#fff" fill-opacity="0.5"/>
<rect x="1288" y="509" width="1" height="163.4" fill="#fff" fill-opacity="0.5"/>
<rect x="1296" y="388" width="1" height="284.4" fill="#fff" fill-opacity="0.5"/>
<rect x="1304" y="276" width="1" height="396.4" fill="#fff" fill-opacity="0.5"/>
<rect x="1312" y="276" width="1" height="396.4" fill="#fff" fill-opacity="0.5"/>
<rect x="1320" y="474" width="1" height="198.4" fill="#fff" fill-opacity="0.5"/>
<rect x="1327" y="457" width="1" height="215.4" fill="#fff" fill-opacity="0.5"/>
<rect x="1335" y="233" width="1" height="439.4" fill="#fff" fill-opacity="0.5"/>
<rect x="1343" y="233" width="1" height="439.4" fill="#fff" fill-opacity="0.5"/>
<rect x="1351" y="302" width="1" height="370.4" fill="#fff" fill-opacity="0.5"/>
<rect x="1359" y="465" width="1" height="207.4" fill="#fff" fill-opacity="0.5"/>
<rect x="1366" y="457" width="1" height="215.4" fill="#fff" fill-opacity="0.5"/>
<rect x="1374" y="457" width="1" height="215.4" fill="#fff" fill-opacity="0.5"/>
<rect x="1382" y="465" width="1" height="207.4" fill="#fff" fill-opacity="0.5"/>
<rect x="1390" y="483" width="1" height="189.4" fill="#fff" fill-opacity="0.5"/>
<rect x="1398" y="379" width="1" height="293.4" fill="#fff" fill-opacity="0.5"/>
<rect x="1405" y="224" width="1" height="448.4" fill="#fff" fill-opacity="0.5"/>
<rect x="1413" y="224" width="1" height="448.4" fill="#fff" fill-opacity="0.5"/>
<rect x="1421" y="241" width="1" height="431.4" fill="#fff" fill-opacity="0.5"/>
<rect x="1429" y="465" width="1" height="207.4" fill="#fff" fill-opacity="0.5"/>
<rect x="1437" y="448" width="1" height="224.4" fill="#fff" fill-opacity="0.5"/>
<rect x="1444" y="448" width="1" height="224.4" fill="#fff" fill-opacity="0.5"/>
<rect x="1452" y="457" width="1" height="215.4" fill="#fff" fill-opacity="0.5"/>
<rect x="1460" y="457" width="1" height="215.4" fill="#fff" fill-opacity="0.5"/>
<rect x="1468" y="181" width="1" height="491.4" fill="#fff" fill-opacity="0.5"/>
<rect x="1476" y="181" width="1" height="491.4" fill="#fff" fill-opacity="0.5"/>
<rect x="1483" y="215" width="1" height="457.4" fill="#fff" fill-opacity="0.5"/>
<rect x="1491" y="215" width="1" height="457.4" fill="#fff" fill-opacity="0.5"/>
<rect x="1499" y="259" width="1" height="413.4" fill="#fff" fill-opacity="0.5"/>
<rect x="1507" y="379" width="1" height="293.4" fill="#fff" fill-opacity="0.5"/>
<rect x="1515" y="552" width="1" height="120.4" fill="#fff" fill-opacity="0.5"/>
<rect x="1522" y="526" width="1" height="146.4" fill="#fff" fill-opacity="0.5"/>
<rect x="1530" y="474" width="1" height="198.4" fill="#fff" fill-opacity="0.5"/>
<rect x="1538" y="440" width="1" height="232.4" fill="#fff" fill-opacity="0.5"/>
<rect x="1546" y="440" width="1" height="232.4" fill="#fff" fill-opacity="0.5"/>
<rect x="1554" y="448" width="1" height="224.4" fill="#fff" fill-opacity="0.5"/>
<rect x="1561" y="448" width="1" height="224.4" fill="#fff" fill-opacity="0.5"/>
<rect x="1569" y="207" width="1" height="465.4" fill="#fff" fill-opacity="0.5"/>
<rect x="1577" y="207" width="1" height="465.4" fill="#fff" fill-opacity="0.5"/>
<rect x="1585" y="215" width="1" height="457.4" fill="#fff" fill-opacity="0.5"/>
<rect x="1593" y="215" width="1" height="457.4" fill="#fff" fill-opacity="0.5"/>
<rect x="1600" y="233" width="1" height="439.4" fill="#fff" fill-opacity="0.5"/>
<rect x="1608" y="440" width="1" height="232.4" fill="#fff" fill-opacity="0.5"/>
<rect x="1616" y="440" width="1" height="232.4" fill="#fff" fill-opacity="0.5"/>
<rect x="1624" y="440" width="1" height="232.4" fill="#fff" fill-opacity="0.5"/>
<rect x="1632" y="431" width="1" height="241.4" fill="#fff" fill-opacity="0.5"/>
<rect x="1639" y="431" width="1" height="241.4" fill="#fff" fill-opacity="0.5"/>
<rect x="1647" y="457" width="1" height="215.4" fill="#fff" fill-opacity="0.5"/>
<rect x="1655" y="465" width="1" height="207.4" fill="#fff" fill-opacity="0.5"/>
<rect x="1663" y="440" width="1" height="232.4" fill="#fff" fill-opacity="0.5"/>
<rect x="1671" y="440" width="1" height="232.4" fill="#fff" fill-opacity="0.5"/>
<rect x="1679" y="465" width="1" height="207.4" fill="#fff" fill-opacity="0.5"/>
<rect x="1686" y="509" width="1" height="163.4" fill="#fff" fill-opacity="0.5"/>
<rect x="1694" y="509" width="1" height="163.4" fill="#fff" fill-opacity="0.5"/>
<rect x="1702" y="491" width="1" height="181.4" fill="#fff" fill-opacity="0.5"/>
<rect x="1710" y="483" width="1" height="189.4" fill="#fff" fill-opacity="0.5"/>
<rect x="1718" y="448" width="1" height="224.4" fill="#fff" fill-opacity="0.5"/>
<rect x="1725" y="448" width="1" height="224.4" fill="#fff" fill-opacity="0.5"/>
<rect x="1733" y="465" width="1" height="207.4" fill="#fff" fill-opacity="0.5"/>
<rect x="1741" y="474" width="1" height="198.4" fill="#fff" fill-opacity="0.5"/>
<rect x="1749" y="465" width="1" height="207.4" fill="#fff" fill-opacity="0.5"/>
<rect x="1757" y="465" width="1" height="207.4" fill="#fff" fill-opacity="0.5"/>
<rect x="1764" y="465" width="1" height="207.4" fill="#fff" fill-opacity="0.5"/>
<rect x="1772" y="474" width="1" height="198.4" fill="#fff" fill-opacity="0.5"/>
<rect x="1780" y="483" width="1" height="189.4" fill="#fff" fill-opacity="0.5"/>
<rect x="1788" y="491" width="1" height="181.4" fill="#fff" fill-opacity="0.5"/>
<rect x="1796" y="491" width="1" height="181.4" fill="#fff" fill-opacity="0.5"/>
<rect x="1803" y="491" width="1" height="181.4" fill="#fff" fill-opacity="0.5"/>
<rect x="1811" y="491" width="1" height="181.4" fill="#fff" fill-opacity="0.5"/>
<rect x="1819" y="491" width="1" height="181.4" fill="#fff" fill-opacity="0.5"/>
<rect x="1827" y="491" width="1" height="181.4" fill="#fff" fill-opacity="0.5"/>
<rect x="1835" y="491" width="1" height="181.4" fill="#fff" fill-opacity="0.5"/>
<rect x="1842" y="491" width="1" height="181.4" fill="#fff" fill-opacity="0.5"/>
<rect x="1850" y="500" width="1" height="172.4" fill="#fff" fill-opacity="0.5"/>
<rect x="1858" y="491" width="1" height="181.4" fill="#fff" fill-opacity="0.5"/>
<rect x="1866" y="491" width="1" height="181.4" fill="#fff" fill-opacity="0.5"/>
<rect x="1874" y="500" width="1" height="172.4" fill="#fff" fill-opacity="0.5"/>
<rect x="1881" y="560" width="1" height="112.4" fill="#fff" fill-opacity="0.5"/>
<rect x="1889" y="560" width="1" height="112.4" fill="#fff" fill-opacity="0.5"/>
<rect x="1897" y="552" width="1" height="120.4" fill="#fff" fill-opacity="0.5"/>
<rect x="1905" y="552" width="1" height="120.4" fill="#fff" fill-opacity="0.5"/>
<rect x="1913" y="552" width="1" height="120.4" fill="#fff" fill-opacity="0.5"/>
<rect x="1920" y="552" width="1" height="120.4" fill="#fff" fill-opacity="0.5"/>
<rect x="1928" y="534" width="1" height="138.4" fill="#fff" fill-opacity="0.5"/>
<rect x="1936" y="534" width="1" height="138.4" fill="#fff" fill-opacity="0.5"/>
<rect x="1944" y="552" width="1" height="120.4" fill="#fff" fill-opacity="0.5"/>
<rect x="1952" y="552" width="1" height="120.4" fill="#fff" fill-opacity="0.5"/>
<rect x="1959" y="552" width="1" height="120.4" fill="#fff" fill-opacity="0.5"/>
<rect x="1967" y="552" width="1" height="120.4" fill="#fff" fill-opacity="0.5"/>
<rect x="1975" y="552" width="1" height="120.4" fill="#fff" fill-opacity="0.5"/>
<rect x="1983" y="552" width="1" height="120.4" fill="#fff" fill-opacity="0.5"/>
<rect x="1991" y="560" width="1" height="112.4" fill="#fff" fill-opacity="0.5"/>
<rect x="1998" y="560" width="1" height="112.4" fill="#fff" fill-opacity="0.5"/>
<rect x="2006" y="560" width="1" height="112.4" fill="#fff" fill-opacity="0.5"/>
<rect x="2014" y="560" width="1" height="112.4" fill="#fff" fill-opacity="0.5"/>
<rect x="2022" y="552" width="1" height="120.4" fill="#fff" fill-opacity="0.5"/>
<rect x="2030" y="552" width="1" height="120.4" fill="#fff" fill-opacity="0.5"/>
<rect x="2037" y="560" width="1" height="112.4" fill="#fff" fill-opacity="0.5"/>
<rect x="2045" y="552" width="1" height="120.4" fill="#fff" fill-opacity="0.5"/>
<rect x="2053" y="552" width="1" height="120.4" fill="#fff" fill-opacity="0.5"/>
<rect x="2061" y="552" width="1" height="120.4" fill="#fff" fill-opacity="0.5"/>
<rect x="2069" y="552" width="1" height="120.4" fill="#fff" fill-opacity="0.5"/>
<rect x="2076" y="552" width="1" height="120.4" fill="#fff" fill-opacity="0.5"/>
<rect x="2084" y="552" width="1" height="120.4" fill="#fff" fill-opacity="0.5"/>
<rect x="2092" y="552" width="1" height="120.4" fill="#fff" fill-opacity="0.5"/>
<rect x="2100" y="560" width="1" height="112.4" fill="#fff" fill-opacity="0.5"/>
<rect x="2108" y="552" width="1" height="120.4" fill="#fff" fill-opacity="0.5"/>
<rect x="2115" y="552" width="1" height="120.4" fill="#fff" fill-opacity="0.5"/>
<rect x="2123" y="560" width="1" height="112.4" fill="#fff" fill-opacity="0.5"/>
<rect x="2131" y="552" width="1" height="120.4" fill="#fff" fill-opacity="0.5"/>
<rect x="2139" y="552" width="1" height="120.4" fill="#fff" fill-opacity="0.5"/>
<rect x="2147" y="560" width="1" height="112.4" fill="#fff" fill-opacity="0.5"/>
<rect x="2154" y="560" width="1" height="112.4" fill="#fff" fill-opacity="0.5"/>
<rect x="2162" y="560" width="1" height="112.4" fill="#fff" fill-opacity="0.5"/>
<rect x="2170" y="560" width="1" height="112.4" fill="#fff" fill-opacity="0.5"/>
<rect x="2178" y="560" width="1" height="112.4" fill="#fff" fill-opacity="0.5"/>
<rect x="2186" y="552" width="1" height="120.4" fill="#fff" fill-opacity="0.5"/>
<rect x="2193" y="552" width="1" height="120.4" fill="#fff" fill-opacity="0.5"/>
<rect x="2201" y="560" width="1" height="112.4" fill="#fff" fill-opacity="0.5"/>
<rect x="2209" y="560" width="1" height="112.4" fill="#fff" fill-opacity="0.5"/>
<rect x="2217" y="560" width="1" height="112.4" fill="#fff" fill-opacity="0.5"/>
<rect x="2225" y="560" width="1" height="112.4" fill="#fff" fill-opacity="0.5"/>
<rect x="2232" y="560" width="1" height="112.4" fill="#fff" fill-opacity="0.5"/>
<rect x="2240" y="560" width="1" height="112.4" fill="#fff" fill-opacity="0.5"/>
<rect x="2248" y="560" width="1" height="112.4" fill="#fff" fill-opacity="0.5"/>
<rect x="2256" y="560" width="1" height="112.4" fill="#fff" fill-opacity="0.5"/>
<rect x="2264" y="560" width="1" height="112.4" fill="#fff" fill-opacity="0.5"/>
<rect x="2271" y="560" width="1" height="112.4" fill="#fff" fill-opacity="0.5"/>
<rect x="2279" y="560" width="1" height="112.4" fill="#fff" fill-opacity="0.5"/>
<rect x="2287" y="560" width="1" height="112.4" fill="#fff" fill-opacity="0.5"/>
<rect x="2295" y="560" width="1" height="112.4" fill="#fff" fill-opacity="0.5"/>
<rect x="2303" y="560" width="1" height="112.4" fill="#fff" fill-opacity="0.5"/>
<rect x="2310" y="560" width="1" height="112.4" fill="#fff" fill-opacity="0.5"/>
<rect x="2318" y="560" width="1" height="112.4" fill="#fff" fill-opacity="0.5"/>
<rect x="2326" y="560" width="1" height="112.4" fill="#fff" fill-opacity="0.5"/>
<rect x="2334" y="560" width="1" height="112.4" fill="#fff" fill-opacity="0.5"/>
<rect x="2342" y="560" width="1" height="112.4" fill="#fff" fill-opacity="0.5"/>
<rect x="2349" y="560" width="1" height="112.4" fill="#fff" fill-opacity="0.5"/>
<rect x="2357" y="560" width="1" height="112.4" fill="#fff" fill-opacity="0.5"/>
<rect x="2365" y="560" width="1" height="112.4" fill="#fff" fill-opacity="0.5"/>
<rect x="2373" y="560" width="1" height="112.4" fill="#fff" fill-opacity="0.5"/>
<rect x="2381" y="560" width="1" height="112.4" fill="#fff" fill-opacity="0.5"/>
<line x1="153.2" y1="586.5" x2="2400.2" y2="586.5" stroke="#9a9a9a" stroke-opacity="0.16" stroke-width="1"/>
<line x1="153.2" y1="499.5" x2="2400.2" y2="499.5" stroke="#9a9a9a" stroke-opacity="0.16" stroke-width="1"/>
<line x1="153.2" y1="413.5" x2="2400.2" y2="413.5" stroke="#9a9a9a" stroke-opacity="0.16" stroke-width="1"/>
<line x1="153.2" y1="327.5" x2="2400.2" y2="327.5" stroke="#9a9a9a" stroke-opacity="0.16" stroke-width="1"/>
<line x1="153.2" y1="241.5" x2="2400.2" y2="241.5" stroke="#9a9a9a" stroke-opacity="0.16" stroke-width="1"/>
<line x1="153.2" y1="155.5" x2="2400.2" y2="155.5" stroke="#9a9a9a" stroke-opacity="0.16" stroke-width="1"/>
<rect x="151.5" y="68.9" width="2" height="604.5" fill="#444"/>
<rect x="153.2" y="672.4" width="2247.9" height="1.6" fill="#666"/>
<line x1="141" y1="672.5" x2="152" y2="672.5" stroke="#8c8c8c" stroke-width="1.2"/>
<line x1="141" y1="586.5" x2="152" y2="586.5" stroke="#8c8c8c" stroke-width="1.2"/>
<line x1="141" y1="499.5" x2="152" y2="499.5" stroke="#8c8c8c" stroke-width="1.2"/>
<line x1="141" y1="413.5" x2="152" y2="413.5" stroke="#8c8c8c" stroke-width="1.2"/>
<line x1="141" y1="327.5" x2="152" y2="327.5" stroke="#8c8c8c" stroke-width="1.2"/>
<line x1="141" y1="241.5" x2="152" y2="241.5" stroke="#8c8c8c" stroke-width="1.2"/>
<line x1="141" y1="155.5" x2="152" y2="155.5" stroke="#8c8c8c" stroke-width="1.2"/>
<line x1="141" y1="68.5" x2="152" y2="68.5" stroke="#8c8c8c" stroke-width="1.2"/>
<line x1="153.5" y1="673.9" x2="153.5" y2="684" stroke="#c0c0c0" stroke-width="1.2"/>
<line x1="247.5" y1="673.9" x2="247.5" y2="684" stroke="#c0c0c0" stroke-width="1.2"/>
<line x1="340.5" y1="673.9" x2="340.5" y2="684" stroke="#c0c0c0" stroke-width="1.2"/>
<line x1="434.5" y1="673.9" x2="434.5" y2="684" stroke="#c0c0c0" stroke-width="1.2"/>
<line x1="528.5" y1="673.9" x2="528.5" y2="684" stroke="#c0c0c0" stroke-width="1.2"/>
<line x1="621.5" y1="673.9" x2="621.5" y2="684" stroke="#c0c0c0" stroke-width="1.2"/>
<line x1="715.5" y1="673.9" x2="715.5" y2="684" stroke="#c0c0c0" stroke-width="1.2"/>
<line x1="809.5" y1="673.9" x2="809.5" y2="684" stroke="#c0c0c0" stroke-width="1.2"/>
<line x1="902.5" y1="673.9" x2="902.5" y2="684" stroke="#c0c0c0" stroke-width="1.2"/>
<line x1="996.5" y1="673.9" x2="996.5" y2="684" stroke="#c0c0c0" stroke-width="1.2"/>
<line x1="1089.5" y1="673.9" x2="1089.5" y2="684" stroke="#c0c0c0" stroke-width="1.2"/>
<line x1="1183.5" y1="673.9" x2="1183.5" y2="684" stroke="#c0c0c0" stroke-width="1.2"/>
<line x1="1277.5" y1="673.9" x2="1277.5" y2="684" stroke="#c0c0c0" stroke-width="1.2"/>
<line x1="1370.5" y1="673.9" x2="1370.5" y2="684" stroke="#c0c0c0" stroke-width="1.2"/>
<line x1="1464.5" y1="673.9" x2="1464.5" y2="684" stroke="#c0c0c0" stroke-width="1.2"/>
<line x1="1558.5" y1="673.9" x2="1558.5" y2="684" stroke="#c0c0c0" stroke-width="1.2"/>
<line x1="1651.5" y1="673.9" x2="1651.5" y2="684" stroke="#c0c0c0" stroke-width="1.2"/>
<line x1="1745.5" y1="673.9" x2="1745.5" y2="684" stroke="#c0c0c0" stroke-width="1.2"/>
<line x1="1838.5" y1="673.9" x2="1838.5" y2="684" stroke="#c0c0c0" stroke-width="1.2"/>
<line x1="1932.5" y1="673.9" x2="1932.5" y2="684" stroke="#c0c0c0" stroke-width="1.2"/>
<line x1="2026.5" y1="673.9" x2="2026.5" y2="684" stroke="#c0c0c0" stroke-width="1.2"/>
<line x1="2119.5" y1="673.9" x2="2119.5" y2="684" stroke="#c0c0c0" stroke-width="1.2"/>
<line x1="2213.5" y1="673.9" x2="2213.5" y2="684" stroke="#c0c0c0" stroke-width="1.2"/>
<line x1="2307.5" y1="673.9" x2="2307.5" y2="684" stroke="#c0c0c0" stroke-width="1.2"/>
<line x1="2400.5" y1="673.9" x2="2400.5" y2="684" stroke="#c0c0c0" stroke-width="1.2"/>
<text transform="translate(132.2 678.3) scale(1.15 1)" font-size="18.6" fill="#333" text-anchor="end" font-family='"Liberation Sans", sans-serif'>0</text>
<text transform="translate(132.2 592.09) scale(1.15 1)" font-size="18.6" fill="#333" text-anchor="end" font-family='"Liberation Sans", sans-serif'>10</text>
<text transform="translate(132.2 505.87) scale(1.15 1)" font-size="18.6" fill="#333" text-anchor="end" font-family='"Liberation Sans", sans-serif'>20</text>
<text transform="translate(132.2 419.66) scale(1.15 1)" font-size="18.6" fill="#333" text-anchor="end" font-family='"Liberation Sans", sans-serif'>30</text>
<text transform="translate(132.2 333.44) scale(1.15 1)" font-size="18.6" fill="#333" text-anchor="end" font-family='"Liberation Sans", sans-serif'>40</text>
<text transform="translate(132.2 247.23) scale(1.15 1)" font-size="18.6" fill="#333" text-anchor="end" font-family='"Liberation Sans", sans-serif'>50</text>
<text transform="translate(132.2 161.01) scale(1.15 1)" font-size="18.6" fill="#333" text-anchor="end" font-family='"Liberation Sans", sans-serif'>60</text>
<text transform="translate(132.2 74.8) scale(1.15 1)" font-size="18.6" fill="#333" text-anchor="end" font-family='"Liberation Sans", sans-serif'>70</text>
<text transform="translate(153.5 707.4) scale(1.16 1)" font-size="18.8" fill="#1a1a1a" text-anchor="middle" font-family='"Liberation Sans", sans-serif'>0h</text>
<text transform="translate(247.12 707.4) scale(1.16 1)" font-size="18.8" fill="#1a1a1a" text-anchor="middle" font-family='"Liberation Sans", sans-serif'>1h</text>
<text transform="translate(340.75 707.4) scale(1.16 1)" font-size="18.8" fill="#1a1a1a" text-anchor="middle" font-family='"Liberation Sans", sans-serif'>2h</text>
<text transform="translate(434.38 707.4) scale(1.16 1)" font-size="18.8" fill="#1a1a1a" text-anchor="middle" font-family='"Liberation Sans", sans-serif'>3h</text>
<text transform="translate(528 707.4) scale(1.16 1)" font-size="18.8" fill="#1a1a1a" text-anchor="middle" font-family='"Liberation Sans", sans-serif'>4h</text>
<text transform="translate(621.62 707.4) scale(1.16 1)" font-size="18.8" fill="#1a1a1a" text-anchor="middle" font-family='"Liberation Sans", sans-serif'>5h</text>
<text transform="translate(715.25 707.4) scale(1.16 1)" font-size="18.8" fill="#1a1a1a" text-anchor="middle" font-family='"Liberation Sans", sans-serif'>6h</text>
<text transform="translate(808.88 707.4) scale(1.16 1)" font-size="18.8" fill="#1a1a1a" text-anchor="middle" font-family='"Liberation Sans", sans-serif'>7h</text>
<text transform="translate(902.5 707.4) scale(1.16 1)" font-size="18.8" fill="#1a1a1a" text-anchor="middle" font-family='"Liberation Sans", sans-serif'>8h</text>
<text transform="translate(996.12 707.4) scale(1.16 1)" font-size="18.8" fill="#1a1a1a" text-anchor="middle" font-family='"Liberation Sans", sans-serif'>9h</text>
<text transform="translate(1089.75 707.4) scale(1.16 1)" font-size="18.8" fill="#1a1a1a" text-anchor="middle" font-family='"Liberation Sans", sans-serif'>10h</text>
<text transform="translate(1183.38 707.4) scale(1.16 1)" font-size="18.8" fill="#1a1a1a" text-anchor="middle" font-family='"Liberation Sans", sans-serif'>11h</text>
<text transform="translate(1277 707.4) scale(1.16 1)" font-size="18.8" fill="#1a1a1a" text-anchor="middle" font-family='"Liberation Sans", sans-serif'>12h</text>
<text transform="translate(1370.62 707.4) scale(1.16 1)" font-size="18.8" fill="#1a1a1a" text-anchor="middle" font-family='"Liberation Sans", sans-serif'>13h</text>
<text transform="translate(1464.25 707.4) scale(1.16 1)" font-size="18.8" fill="#1a1a1a" text-anchor="middle" font-family='"Liberation Sans", sans-serif'>14h</text>
<text transform="translate(1557.88 707.4) scale(1.16 1)" font-size="18.8" fill="#1a1a1a" text-anchor="middle" font-family='"Liberation Sans", sans-serif'>15h</text>
<text transform="translate(1651.5 707.4) scale(1.16 1)" font-size="18.8" fill="#1a1a1a" text-anchor="middle" font-family='"Liberation Sans", sans-serif'>16h</text>
<text transform="translate(1745.12 707.4) scale(1.16 1)" font-size="18.8" fill="#1a1a1a" text-anchor="middle" font-family='"Liberation Sans", sans-serif'>17h</text>
<text transform="translate(1838.75 707.4) scale(1.16 1)" font-size="18.8" fill="#1a1a1a" text-anchor="middle" font-family='"Liberation Sans", sans-serif'>18h</text>
<text transform="translate(1932.38 707.4) scale(1.16 1)" font-size="18.8" fill="#1a1a1a" text-anchor="middle" font-family='"Liberation Sans", sans-serif'>19h</text>
<text transform="translate(2026 707.4) scale(1.16 1)" font-size="18.8" fill="#1a1a1a" text-anchor="middle" font-family='"Liberation Sans", sans-serif'>20h</text>
<text transform="translate(2119.62 707.4) scale(1.16 1)" font-size="18.8" fill="#1a1a1a" text-anchor="middle" font-family='"Liberation Sans", sans-serif'>21h</text>
<text transform="translate(2213.25 707.4) scale(1.16 1)" font-size="18.8" fill="#1a1a1a" text-anchor="middle" font-family='"Liberation Sans", sans-serif'>22h</text>
<text transform="translate(2306.88 707.4) scale(1.16 1)" font-size="18.8" fill="#1a1a1a" text-anchor="middle" font-family='"Liberation Sans", sans-serif'>23h</text>
<text transform="translate(2400.5 707.4) scale(1.16 1)" font-size="18.8" fill="#1a1a1a" text-anchor="middle" font-family='"Liberation Sans", sans-serif'>0h</text>
<text x="0" y="0" font-size="23.5" fill="#444" text-anchor="middle" font-family='"Liberation Sans", sans-serif' textLength="31.5" lengthAdjust="spacingAndGlyphs" transform="translate(87.2 370.3) rotate(-90)">kW</text>
<path d="M1990 50 H2406 V89.5 Q2406 98 2397.5 98 H1998.5 Q1990 98 1990 89.5 Z" fill="#fff"/>
<text x="2198" y="89.3" font-size="25.5" font-weight="bold" fill="#111" text-anchor="middle" font-family='"Liberation Sans", sans-serif' textLength="174.5" lengthAdjust="spacingAndGlyphs">LHB-site-L539</text>
<rect x="1992.4" y="108" width="411.2" height="57.4" rx="11" ry="11" fill="#fff" stroke="#808080" stroke-width="4"/>
<text x="2208" y="147.7" font-size="29.2" fill="#0a0a0a" stroke="#0a0a0a" stroke-width="0.35" text-anchor="middle" font-family='"Liberation Sans", sans-serif' xml:space="preserve" textLength="315" lengthAdjust="spacingAndGlyphs">Consommation: 483 kWh</text>
<rect x="1992.4" y="178.4" width="411.2" height="57" rx="11" ry="11" fill="#fff" stroke="#808080" stroke-width="4"/>
<text x="2208" y="217.9" font-size="29.2" fill="#0a0a0a" stroke="#0a0a0a" stroke-width="0.35" text-anchor="middle" font-family='"Liberation Sans", sans-serif' xml:space="preserve" textLength="191.5" lengthAdjust="spacingAndGlyphs">P Max :  63 kW</text>
<rect x="1992.4" y="248.6" width="411.2" height="56.8" rx="11" ry="11" fill="#fff" stroke="#808080" stroke-width="4"/>
<text x="2208.5" y="287.9" font-size="29.2" fill="#0a0a0a" stroke="#0a0a0a" stroke-width="0.35" text-anchor="middle" font-family='"Liberation Sans", sans-serif' xml:space="preserve" textLength="162" lengthAdjust="spacingAndGlyphs">P min : 8 kW</text>
<rect x="1048.2" y="542.4" width="521" height="69.3" rx="9" ry="9" fill="#fff" fill-opacity="0.9"/>
<text x="1315.3" y="589.8" font-size="32.7" font-weight="bold" fill="#0b1410" text-anchor="middle" font-family='"Liberation Sans", sans-serif' textLength="380.5" lengthAdjust="spacingAndGlyphs">vendredi 30 janvier 2026</text>
<rect x="176.5" y="49.2" width="481.4" height="77.5" fill="#0b0b18"/>
<defs><clipPath id="ecoDark"><path d="M180 104.5 L201 104.5 Q211 102 218 93.5 L243 93.5 Q258 93.8 274 96.8 L274 125 L180 125 Z"/></clipPath></defs>
<path d="M198.4 74.9 L205.4 71.4" stroke="#00f2cc" stroke-width="6.2" stroke-linecap="round"/>
<g><path d="M192.35 94.5 H210.35 A9.0 11.9 0 1 0 207.71 102.91" fill="none" stroke="#00f2cc" stroke-width="7.4" stroke-linecap="round"/><path d="M235.05 85.66 A8.6 11.9 0 1 0 235.49 102.77" fill="none" stroke="#00f2cc" stroke-width="7.4" stroke-linecap="round"/><ellipse cx="257.2" cy="94.5" rx="9.6" ry="11.9" fill="none" stroke="#00f2cc" stroke-width="7.4"/></g>
<g clip-path="url(#ecoDark)"><path d="M192.35 94.5 H210.35 A9.0 11.9 0 1 0 207.71 102.91" fill="none" stroke="#00b898" stroke-width="7.4" stroke-linecap="round"/><path d="M235.05 85.66 A8.6 11.9 0 1 0 235.49 102.77" fill="none" stroke="#00b898" stroke-width="7.4" stroke-linecap="round"/><ellipse cx="257.2" cy="94.5" rx="9.6" ry="11.9" fill="none" stroke="#00b898" stroke-width="7.4"/></g>
<g><path d="M276.5 86.8 L283.6 107.2 L292.2 81.2 L299.6 107.2 L312.2 66.8" fill="none" stroke="#fff" stroke-width="7.4" stroke-linecap="round" stroke-linejoin="round"/><path d="M317.6 84.8 Q322 80.8 328 81.2 Q334.8 81.8 334.8 90 V107" fill="none" stroke="#fff" stroke-width="7.4" stroke-linecap="round"/><ellipse cx="325.2" cy="98.6" rx="8.6" ry="7.6" fill="none" stroke="#fff" stroke-width="7.4"/><path d="M346.6 73.5 V102 Q346.6 107.5 352 107.5" fill="none" stroke="#fff" stroke-width="7.4" stroke-linecap="round"/><path d="M361.6 73.5 V102 Q361.6 107.5 367 107.5" fill="none" stroke="#fff" stroke-width="7.4" stroke-linecap="round"/><path d="M341.5 81.8 H372" fill="none" stroke="#fff" stroke-width="7.4" stroke-linecap="round"/></g>
<ellipse cx="433.7" cy="89.2" rx="25.8" ry="28" fill="#00b4e0"/>
<text x="434" y="96.5" font-size="22" fill="#fff" text-anchor="middle" font-family='"Liberation Sans", sans-serif' letter-spacing="-1.5">Rte</text>
<line x1="419" y1="92" x2="450" y2="92" stroke="#fff" stroke-width="1.2"/>
<text x="468" y="79.2" font-size="11.2" font-weight="bold" fill="#00a6d2" font-family='"Liberation Sans", sans-serif' letter-spacing="-0.5">Le réseau</text>
<text x="468" y="92.1" font-size="11.2" font-weight="bold" fill="#00a6d2" font-family='"Liberation Sans", sans-serif' letter-spacing="-0.5">de transport</text>
<text x="468" y="105" font-size="11.2" font-weight="bold" fill="#00a6d2" font-family='"Liberation Sans", sans-serif' letter-spacing="-0.5">d’électricité</text>
<rect x="546.6" y="61.2" width="100.6" height="55.9" fill="#fff"/>
<rect x="553" y="68.7" width="6.3" height="7" fill="#1f3b8f"/><rect x="559.3" y="68.7" width="6.3" height="7" fill="#fff"/><rect x="565.6" y="68.7" width="6.3" height="7" fill="#e1000f"/>
<text x="552.5" y="85.2" font-size="7.2" font-weight="bold" fill="#222" font-family='"Liberation Sans", sans-serif' letter-spacing="-0.3">RÉPUBLIQUE</text>
<text x="552.5" y="92.8" font-size="7.2" font-weight="bold" fill="#222" font-family='"Liberation Sans", sans-serif' letter-spacing="-0.3">FRANÇAISE</text>
<rect x="553" y="98" width="11" height="1.6" fill="#777"/>
<rect x="553" y="102.3" width="11" height="1.6" fill="#777"/>
<rect x="553" y="106.6" width="16" height="1.6" fill="#777"/>
<rect x="607.3" y="66.5" width="34" height="44.7" fill="#fff" stroke="#4a78c8" stroke-width="1.2"/>
<text x="624.3" y="75" font-size="6.8" font-weight="bold" fill="#e2231a" text-anchor="middle" font-family='"Liberation Sans", sans-serif' letter-spacing="0.6">ADEME</text>
<circle cx="624.6" cy="87" r="8.4" fill="#2456b0"/><path d="M620 82 q3 -2 6 1 q-1 4 2 6 q-3 3 -5 0 z" fill="#8fb0e8"/>
<rect x="612" y="99.5" width="25" height="1.5" fill="#e2231a" fill-opacity="0.8"/>
<rect x="612" y="102.7" width="25" height="1.5" fill="#e2231a" fill-opacity="0.8"/>
<rect x="612" y="105.9" width="25" height="1.5" fill="#e2231a" fill-opacity="0.8"/>
<rect x="169.1" y="135.6" width="491.9" height="3.2" fill="#dcdcdc"/>
<rect x="169.1" y="252.9" width="491.9" height="5.8" fill="#dcdcdc"/>
<rect x="169.1" y="188.9" width="491.9" height="5.6" fill="#dcdcdc"/>
<rect x="169.1" y="135.6" width="3.5" height="123.1" fill="#dcdcdc"/>
<rect x="655.4" y="135.6" width="5.6" height="123.1" fill="#dcdcdc"/>
<rect x="288.9" y="135.6" width="5.6" height="123.1" fill="#dcdcdc"/>
<rect x="410.6" y="135.6" width="5.6" height="123.1" fill="#dcdcdc"/>
<rect x="532.1" y="135.6" width="5.6" height="123.1" fill="#dcdcdc"/>
<path d="M237.4 151 V169.6 L234.0 173.2 H228.0 L224.6 169.8" fill="none" stroke="#111" stroke-width="3.6" stroke-linejoin="round"/>
<path d="M327.1 151 V169.6 L323.7 173.2 H317.7 L314.3 169.8" fill="none" stroke="#111" stroke-width="3.6" stroke-linejoin="round"/>
<path d="M346.6 164 H361.2 M353.9 154.8 V173" fill="none" stroke="#111" stroke-width="2.4"/>
<path d="M381.6 157.6 L387.4 152.4" fill="none" stroke="#111" stroke-width="2"/><path d="M387.6 151 V174.8" fill="none" stroke="#111" stroke-width="2.6"/>
<path d="M449.3 151 V169.6 L445.9 173.2 H439.9 L436.5 169.8" fill="none" stroke="#111" stroke-width="3.6" stroke-linejoin="round"/>
<path d="M468.6 164 H483.2 M475.9 154.8 V173" fill="none" stroke="#111" stroke-width="2.4"/>
<path d="M502.6 157.5 L505.6 153 H512.6 L515.1 156.2 V160.2 L502.9 172.8 H517.1" fill="none" stroke="#111" stroke-width="4" stroke-linejoin="miter"/>
<path d="M571.3 151 V169.6 L567.9 173.2 H561.9 L558.5 169.8" fill="none" stroke="#111" stroke-width="3.6" stroke-linejoin="round"/>
<path d="M590.6 164 H605.2 M597.9 154.8 V173" fill="none" stroke="#111" stroke-width="2.4"/>
<path d="M624.7 157.5 L627.7 153 H634.7 L637.3 156.2 V160 L634.6 163 H629 M634.6 163 L637.3 166 V170 L634.6 172.8 H627.6 L624.6 168.8" fill="none" stroke="#111" stroke-width="3.4" stroke-linejoin="miter"/>
<svg x="180" y="195" width="105.9" height="54.8" viewBox="0 0 100 52" preserveAspectRatio="none"><rect width="100" height="52" fill="url(#ewImg)"/><path d="M14 0 C30 12 50 22.5 67 22.5 C82 22.5 92 19 100 15.5 V3.5 C92 7 80 10.5 67 10.5 C55 10.5 40 8 27 0 Z" fill="#00f0c9"/><path d="M27 0 C40 8 55 10.5 67 10.5 C80 10.5 92 7 100 3.5 V0 Z" fill="#00a48b"/></svg>
<svg x="302.1" y="196" width="105.6" height="55.9" viewBox="0 0 100 52" preserveAspectRatio="none"><rect width="100" height="52" fill="url(#ewImg)"/><path d="M14 0 C30 12 50 22.5 67 22.5 C82 22.5 92 19 100 15.5 V3.5 C92 7 80 10.5 67 10.5 C55 10.5 40 8 27 0 Z" fill="#00f0c9"/><path d="M27 0 C40 8 55 10.5 67 10.5 C80 10.5 92 7 100 3.5 V0 Z" fill="#00a48b"/></svg>
<svg x="424" y="196" width="105.6" height="55.9" viewBox="0 0 100 52" preserveAspectRatio="none"><rect width="100" height="52" fill="url(#ewImg)"/><path d="M14 0 C30 12 50 22.5 67 22.5 C82 22.5 92 19 100 15.5 V3.5 C92 7 80 10.5 67 10.5 C55 10.5 40 8 27 0 Z" fill="#00f0c9"/><path d="M27 0 C40 8 55 10.5 67 10.5 C80 10.5 92 7 100 3.5 V0 Z" fill="#00a48b"/></svg>
<svg x="544" y="196" width="105.6" height="55.9" viewBox="0 0 100 52" preserveAspectRatio="none"><rect width="100" height="52" fill="url(#ewImg)"/><path d="M14 0 C30 12 50 22.5 67 22.5 C82 22.5 92 19 100 15.5 V3.5 C92 7 80 10.5 67 10.5 C55 10.5 40 8 27 0 Z" fill="#00f0c9"/><path d="M27 0 C40 8 55 10.5 67 10.5 C80 10.5 92 7 100 3.5 V0 Z" fill="#00a48b"/></svg>
<rect x="158.1" y="818.1" width="2261.5" height="507.2" fill="#000" fill-opacity="0.42" filter="url(#blurSh)"/>
<rect x="155.1" y="815.1" width="2261.5" height="505.2" fill="#fff"/>
<rect x="155.1" y="815.1" width="323.07" height="505.2" fill="#efefef"/>
<rect x="801.24" y="815.1" width="323.07" height="505.2" fill="#efefef"/>
<rect x="1447.39" y="815.1" width="323.07" height="505.2" fill="#efefef"/>
<rect x="2093.53" y="815.1" width="323.07" height="505.2" fill="#efefef"/>
<line x1="478.5" y1="815.1" x2="478.5" y2="1320.3" stroke="#b4b4b4" stroke-width="1"/>
<line x1="801.5" y1="815.1" x2="801.5" y2="1320.3" stroke="#b4b4b4" stroke-width="1"/>
<line x1="1124.5" y1="815.1" x2="1124.5" y2="1320.3" stroke="#b4b4b4" stroke-width="1"/>
<line x1="1447.5" y1="815.1" x2="1447.5" y2="1320.3" stroke="#b4b4b4" stroke-width="1"/>
<line x1="1770.5" y1="815.1" x2="1770.5" y2="1320.3" stroke="#b4b4b4" stroke-width="1"/>
<line x1="2094.5" y1="815.1" x2="2094.5" y2="1320.3" stroke="#b4b4b4" stroke-width="1"/>
<rect x="155.1" y="1264.17" width="2261.5" height="56.13" fill="#efefef"/>
<rect x="155.1" y="1151.9" width="2261.5" height="56.13" fill="#efefef"/>
<rect x="155.1" y="1039.63" width="2261.5" height="56.13" fill="#efefef"/>
<rect x="155.1" y="927.37" width="2261.5" height="56.13" fill="#efefef"/>
<rect x="155.1" y="815.1" width="2261.5" height="56.13" fill="#efefef"/>
<line x1="155.1" y1="1264.5" x2="2416.6" y2="1264.5" stroke="#c4c4c4" stroke-width="1"/>
<line x1="155.1" y1="1208.5" x2="2416.6" y2="1208.5" stroke="#c4c4c4" stroke-width="1"/>
<line x1="155.1" y1="1151.5" x2="2416.6" y2="1151.5" stroke="#c4c4c4" stroke-width="1"/>
<line x1="155.1" y1="1095.5" x2="2416.6" y2="1095.5" stroke="#c4c4c4" stroke-width="1"/>
<line x1="155.1" y1="1039.5" x2="2416.6" y2="1039.5" stroke="#c4c4c4" stroke-width="1"/>
<line x1="155.1" y1="983.5" x2="2416.6" y2="983.5" stroke="#c4c4c4" stroke-width="1"/>
<line x1="155.1" y1="927.5" x2="2416.6" y2="927.5" stroke="#c4c4c4" stroke-width="1"/>
<line x1="155.1" y1="871.5" x2="2416.6" y2="871.5" stroke="#c4c4c4" stroke-width="1"/>
<line x1="155.1" y1="815.5" x2="2416.6" y2="815.5" stroke="#c4c4c4" stroke-width="1"/>
<path d="M155.10 1320.3V1258.55H155.66V1320.3ZM155.66 1320.3V1252.94H156.78V1320.3ZM156.78 1320.3V1252.94H157.90V1320.3ZM157.90 1320.3V1247.33H159.03V1320.3ZM159.03 1320.3V1258.55H160.15V1320.3ZM160.15 1320.3V1252.94H161.27V1320.3ZM161.27 1320.3V1252.94H162.39V1320.3ZM162.39 1320.3V1247.33H163.51V1320.3ZM163.51 1320.3V1258.55H164.64V1320.3ZM164.64 1320.3V1258.55H165.76V1320.3ZM165.76 1320.3V1247.33H166.88V1320.3ZM166.88 1320.3V1252.94H168.00V1320.3ZM168.00 1320.3V1252.94H169.12V1320.3ZM169.12 1320.3V1252.94H170.24V1320.3ZM170.24 1320.3V1252.94H171.37V1320.3ZM171.37 1320.3V1252.94H172.49V1320.3ZM172.49 1320.3V1252.94H173.61V1320.3ZM173.61 1320.3V1252.94H174.73V1320.3ZM174.73 1320.3V1252.94H175.85V1320.3ZM175.85 1320.3V1258.55H176.97V1320.3ZM176.97 1320.3V1258.55H178.10V1320.3ZM178.10 1320.3V1258.55H179.22V1320.3ZM179.22 1320.3V1258.55H180.34V1320.3ZM180.34 1320.3V1258.55H181.46V1320.3ZM181.46 1320.3V1258.55H182.58V1320.3ZM182.58 1320.3V1258.55H183.71V1320.3ZM183.71 1320.3V1258.55H184.83V1320.3ZM184.83 1320.3V1258.55H185.95V1320.3ZM185.95 1320.3V1258.55H187.07V1320.3ZM187.07 1320.3V1258.55H188.19V1320.3ZM188.19 1320.3V1247.33H189.31V1320.3ZM189.31 1320.3V1252.94H190.44V1320.3ZM190.44 1320.3V1258.55H191.56V1320.3ZM191.56 1320.3V1258.55H192.68V1320.3ZM192.68 1320.3V1258.55H193.80V1320.3ZM193.80 1320.3V1252.94H194.92V1320.3ZM194.92 1320.3V1258.55H196.04V1320.3ZM196.04 1320.3V1258.55H197.17V1320.3ZM197.17 1320.3V1252.94H198.29V1320.3ZM198.29 1320.3V1258.55H199.41V1320.3ZM199.41 1320.3V1258.55H200.53V1320.3ZM200.53 1320.3V1258.55H201.65V1320.3ZM201.65 1320.3V1258.55H202.78V1320.3ZM202.78 1320.3V1258.55H203.90V1320.3ZM203.90 1320.3V1258.55H205.02V1320.3ZM205.02 1320.3V1258.55H206.14V1320.3ZM206.14 1320.3V1258.55H207.26V1320.3ZM207.26 1320.3V1258.55H208.38V1320.3ZM208.38 1320.3V1258.55H209.51V1320.3ZM209.51 1320.3V1258.55H210.63V1320.3ZM210.63 1320.3V1252.94H211.75V1320.3ZM211.75 1320.3V1252.94H212.87V1320.3ZM212.87 1320.3V1247.33H213.99V1320.3ZM213.99 1320.3V1258.55H215.12V1320.3ZM215.12 1320.3V1258.55H216.24V1320.3ZM216.24 1320.3V1258.55H217.36V1320.3ZM217.36 1320.3V1258.55H218.48V1320.3ZM218.48 1320.3V1258.55H219.60V1320.3ZM219.60 1320.3V1258.55H220.72V1320.3ZM220.72 1320.3V1258.55H221.85V1320.3ZM221.85 1320.3V1258.55H222.97V1320.3ZM222.97 1320.3V1258.55H224.09V1320.3ZM224.09 1320.3V1258.55H225.21V1320.3ZM225.21 1320.3V1258.55H226.33V1320.3ZM226.33 1320.3V1258.55H227.45V1320.3ZM227.45 1320.3V1247.33H228.58V1320.3ZM228.58 1320.3V1252.94H229.70V1320.3ZM229.70 1320.3V1252.94H230.82V1320.3ZM230.82 1320.3V1252.94H231.94V1320.3ZM231.94 1320.3V1252.94H233.06V1320.3ZM233.06 1320.3V1258.55H234.19V1320.3ZM234.19 1320.3V1258.55H235.31V1320.3ZM235.31 1320.3V1258.55H236.43V1320.3ZM236.43 1320.3V1258.55H237.55V1320.3ZM237.55 1320.3V1258.55H238.67V1320.3ZM238.67 1320.3V1258.55H239.79V1320.3ZM239.79 1320.3V1258.55H240.92V1320.3ZM240.92 1320.3V1258.55H242.04V1320.3ZM242.04 1320.3V1258.55H243.16V1320.3ZM243.16 1320.3V1258.55H244.28V1320.3ZM244.28 1320.3V1258.55H245.40V1320.3ZM245.40 1320.3V1258.55H246.52V1320.3ZM246.52 1320.3V1258.55H247.65V1320.3ZM247.65 1320.3V1258.55H248.77V1320.3ZM248.77 1320.3V1258.55H249.89V1320.3ZM249.89 1320.3V1258.55H251.01V1320.3ZM251.01 1320.3V1258.55H252.13V1320.3ZM252.13 1320.3V1258.55H253.26V1320.3ZM253.26 1320.3V1247.33H254.38V1320.3ZM254.38 1320.3V1252.94H255.50V1320.3ZM255.50 1320.3V1258.55H256.62V1320.3ZM256.62 1320.3V1258.55H257.74V1320.3ZM257.74 1320.3V1258.55H258.86V1320.3ZM258.86 1320.3V1258.55H259.99V1320.3ZM259.99 1320.3V1252.94H261.11V1320.3ZM261.11 1320.3V1252.94H262.23V1320.3ZM262.23 1320.3V1252.94H263.35V1320.3ZM263.35 1320.3V1252.94H264.47V1320.3ZM264.47 1320.3V1252.94H265.59V1320.3ZM265.59 1320.3V1252.94H266.72V1320.3ZM266.72 1320.3V1252.94H267.84V1320.3ZM267.84 1320.3V1252.94H268.96V1320.3ZM268.96 1320.3V1247.33H270.08V1320.3ZM270.08 1320.3V1252.94H271.20V1320.3ZM271.20 1320.3V1247.33H272.33V1320.3ZM272.33 1320.3V1247.33H273.45V1320.3ZM273.45 1320.3V1247.33H274.57V1320.3ZM274.57 1320.3V1241.71H275.69V1320.3ZM275.69 1320.3V1241.71H276.81V1320.3ZM276.81 1320.3V1241.71H277.93V1320.3ZM277.93 1320.3V1241.71H279.06V1320.3ZM279.06 1320.3V1241.71H280.18V1320.3ZM280.18 1320.3V1241.71H281.30V1320.3ZM281.30 1320.3V1241.71H282.42V1320.3ZM282.42 1320.3V1258.55H283.54V1320.3ZM283.54 1320.3V1258.55H284.67V1320.3ZM284.67 1320.3V1258.55H285.79V1320.3ZM285.79 1320.3V1258.55H286.91V1320.3ZM286.91 1320.3V1258.55H288.03V1320.3ZM288.03 1320.3V1258.55H289.15V1320.3ZM289.15 1320.3V1258.55H290.27V1320.3ZM290.27 1320.3V1258.55H291.40V1320.3ZM291.40 1320.3V1258.55H292.52V1320.3ZM292.52 1320.3V1252.94H293.64V1320.3ZM293.64 1320.3V1252.94H294.76V1320.3ZM294.76 1320.3V1252.94H295.88V1320.3ZM295.88 1320.3V1252.94H297.00V1320.3ZM297.00 1320.3V1252.94H298.13V1320.3ZM298.13 1320.3V1252.94H299.25V1320.3ZM299.25 1320.3V1247.33H300.37V1320.3ZM300.37 1320.3V1252.94H301.49V1320.3ZM301.49 1320.3V1252.94H302.61V1320.3ZM302.61 1320.3V1252.94H303.74V1320.3ZM303.74 1320.3V1252.94H304.86V1320.3ZM304.86 1320.3V1264.17H305.98V1320.3ZM305.98 1320.3V1264.17H307.10V1320.3ZM307.10 1320.3V1264.17H308.22V1320.3ZM308.22 1320.3V1264.17H309.34V1320.3ZM309.34 1320.3V1264.17H310.47V1320.3ZM310.47 1320.3V1264.17H311.59V1320.3ZM311.59 1320.3V1264.17H312.71V1320.3ZM312.71 1320.3V1264.17H313.83V1320.3ZM313.83 1320.3V1264.17H314.95V1320.3ZM314.95 1320.3V1264.17H316.07V1320.3ZM316.07 1320.3V1264.17H317.20V1320.3ZM317.20 1320.3V1264.17H318.32V1320.3ZM318.32 1320.3V1264.17H319.44V1320.3ZM319.44 1320.3V1264.17H320.56V1320.3ZM320.56 1320.3V1264.17H321.68V1320.3ZM321.68 1320.3V1264.17H322.81V1320.3ZM322.81 1320.3V1264.17H323.93V1320.3ZM323.93 1320.3V1264.17H325.05V1320.3ZM325.05 1320.3V1264.17H326.17V1320.3ZM326.17 1320.3V1264.17H327.29V1320.3ZM327.29 1320.3V1252.94H328.41V1320.3ZM328.41 1320.3V1258.55H329.54V1320.3ZM329.54 1320.3V1258.55H330.66V1320.3ZM330.66 1320.3V1258.55H331.78V1320.3ZM331.78 1320.3V1258.55H332.90V1320.3ZM332.90 1320.3V1258.55H334.02V1320.3ZM334.02 1320.3V1258.55H335.15V1320.3ZM335.15 1320.3V1258.55H336.27V1320.3ZM336.27 1320.3V1258.55H337.39V1320.3ZM337.39 1320.3V1264.17H338.51V1320.3ZM338.51 1320.3V1264.17H339.63V1320.3ZM339.63 1320.3V1258.55H340.75V1320.3ZM340.75 1320.3V1258.55H341.88V1320.3ZM341.88 1320.3V1258.55H343.00V1320.3ZM343.00 1320.3V1264.17H344.12V1320.3ZM344.12 1320.3V1264.17H345.24V1320.3ZM345.24 1320.3V1264.17H346.36V1320.3ZM346.36 1320.3V1264.17H347.48V1320.3ZM347.48 1320.3V1264.17H348.61V1320.3ZM348.61 1320.3V1264.17H349.73V1320.3ZM349.73 1320.3V1264.17H350.85V1320.3ZM350.85 1320.3V1264.17H351.97V1320.3ZM351.97 1320.3V1264.17H353.09V1320.3ZM353.09 1320.3V1264.17H354.22V1320.3ZM354.22 1320.3V1264.17H355.34V1320.3ZM355.34 1320.3V1264.17H356.46V1320.3ZM356.46 1320.3V1264.17H357.58V1320.3ZM357.58 1320.3V1264.17H358.70V1320.3ZM358.70 1320.3V1264.17H359.82V1320.3ZM359.82 1320.3V1264.17H360.95V1320.3ZM360.95 1320.3V1264.17H362.07V1320.3ZM362.07 1320.3V1258.55H363.19V1320.3ZM363.19 1320.3V1258.55H364.31V1320.3ZM364.31 1320.3V1258.55H365.43V1320.3ZM365.43 1320.3V1258.55H366.55V1320.3ZM366.55 1320.3V1258.55H367.68V1320.3ZM367.68 1320.3V1258.55H368.80V1320.3ZM368.80 1320.3V1258.55H369.92V1320.3ZM369.92 1320.3V1258.55H371.04V1320.3ZM371.04 1320.3V1252.94H372.16V1320.3ZM372.16 1320.3V1258.55H373.29V1320.3ZM373.29 1320.3V1258.55H374.41V1320.3ZM374.41 1320.3V1258.55H375.53V1320.3ZM375.53 1320.3V1258.55H376.65V1320.3ZM376.65 1320.3V1258.55H377.77V1320.3ZM377.77 1320.3V1258.55H378.89V1320.3ZM378.89 1320.3V1252.94H380.02V1320.3ZM380.02 1320.3V1264.17H381.14V1320.3ZM381.14 1320.3V1264.17H382.26V1320.3ZM382.26 1320.3V1264.17H383.38V1320.3ZM383.38 1320.3V1264.17H384.50V1320.3ZM384.50 1320.3V1258.55H385.62V1320.3ZM385.62 1320.3V1264.17H386.75V1320.3ZM386.75 1320.3V1264.17H387.87V1320.3ZM387.87 1320.3V1264.17H388.99V1320.3ZM388.99 1320.3V1264.17H390.11V1320.3ZM390.11 1320.3V1264.17H391.23V1320.3ZM391.23 1320.3V1264.17H392.36V1320.3ZM392.36 1320.3V1264.17H393.48V1320.3ZM393.48 1320.3V1264.17H394.60V1320.3ZM394.60 1320.3V1264.17H395.72V1320.3ZM395.72 1320.3V1264.17H396.84V1320.3ZM396.84 1320.3V1264.17H397.96V1320.3ZM397.96 1320.3V1264.17H399.09V1320.3ZM399.09 1320.3V1264.17H400.21V1320.3ZM400.21 1320.3V1264.17H401.33V1320.3ZM401.33 1320.3V1252.94H402.45V1320.3ZM402.45 1320.3V1252.94H403.57V1320.3ZM403.57 1320.3V1252.94H404.70V1320.3ZM404.70 1320.3V1252.94H405.82V1320.3ZM405.82 1320.3V1252.94H406.94V1320.3ZM406.94 1320.3V1247.33H408.06V1320.3ZM408.06 1320.3V1258.55H409.18V1320.3ZM409.18 1320.3V1252.94H410.30V1320.3ZM410.30 1320.3V1252.94H411.43V1320.3ZM411.43 1320.3V1252.94H412.55V1320.3ZM412.55 1320.3V1252.94H413.67V1320.3ZM413.67 1320.3V1258.55H414.79V1320.3ZM414.79 1320.3V1258.55H415.91V1320.3ZM415.91 1320.3V1264.17H417.03V1320.3ZM417.03 1320.3V1264.17H418.16V1320.3ZM418.16 1320.3V1258.55H419.28V1320.3ZM419.28 1320.3V1258.55H420.40V1320.3ZM420.40 1320.3V1264.17H421.52V1320.3ZM421.52 1320.3V1264.17H422.64V1320.3ZM422.64 1320.3V1264.17H423.77V1320.3ZM423.77 1320.3V1264.17H424.89V1320.3ZM424.89 1320.3V1264.17H426.01V1320.3ZM426.01 1320.3V1264.17H427.13V1320.3ZM427.13 1320.3V1264.17H428.25V1320.3ZM428.25 1320.3V1264.17H429.37V1320.3ZM429.37 1320.3V1264.17H430.50V1320.3ZM430.50 1320.3V1252.94H431.62V1320.3ZM431.62 1320.3V1258.55H432.74V1320.3ZM432.74 1320.3V1264.17H433.86V1320.3ZM433.86 1320.3V1264.17H434.98V1320.3ZM434.98 1320.3V1264.17H436.10V1320.3ZM436.10 1320.3V1258.55H437.23V1320.3ZM437.23 1320.3V1258.55H438.35V1320.3ZM438.35 1320.3V1252.94H439.47V1320.3ZM439.47 1320.3V1258.55H440.59V1320.3ZM440.59 1320.3V1258.55H441.71V1320.3ZM441.71 1320.3V1258.55H442.84V1320.3ZM442.84 1320.3V1264.17H443.96V1320.3ZM443.96 1320.3V1264.17H445.08V1320.3ZM445.08 1320.3V1264.17H446.20V1320.3ZM446.20 1320.3V1264.17H447.32V1320.3ZM447.32 1320.3V1264.17H448.44V1320.3ZM448.44 1320.3V1264.17H449.57V1320.3ZM449.57 1320.3V1264.17H450.69V1320.3ZM450.69 1320.3V1264.17H451.81V1320.3ZM451.81 1320.3V1264.17H452.93V1320.3ZM452.93 1320.3V1264.17H454.05V1320.3ZM454.05 1320.3V1264.17H455.18V1320.3ZM455.18 1320.3V1258.55H456.30V1320.3ZM456.30 1320.3V1252.94H457.42V1320.3ZM457.42 1320.3V1264.17H458.54V1320.3ZM458.54 1320.3V1264.17H459.66V1320.3ZM459.66 1320.3V1264.17H460.78V1320.3ZM460.78 1320.3V1264.17H461.91V1320.3ZM461.91 1320.3V1258.55H463.03V1320.3ZM463.03 1320.3V1264.17H464.15V1320.3ZM464.15 1320.3V1264.17H465.27V1320.3ZM465.27 1320.3V1264.17H466.39V1320.3ZM466.39 1320.3V1264.17H467.51V1320.3ZM467.51 1320.3V1264.17H468.64V1320.3ZM468.64 1320.3V1264.17H469.76V1320.3ZM469.76 1320.3V1264.17H470.88V1320.3ZM470.88 1320.3V1258.55H472.00V1320.3ZM472.00 1320.3V1264.17H473.12V1320.3ZM473.12 1320.3V1264.17H474.25V1320.3ZM474.25 1320.3V1264.17H475.37V1320.3ZM475.37 1320.3V1264.17H476.49V1320.3ZM476.49 1320.3V1258.55H477.61V1320.3ZM477.61 1320.3V1264.17H478.73V1320.3ZM478.73 1320.3V1264.17H479.85V1320.3ZM479.85 1320.3V1264.17H480.98V1320.3ZM480.98 1320.3V1264.17H482.10V1320.3ZM482.10 1320.3V1264.17H483.22V1320.3ZM483.22 1320.3V1264.17H484.34V1320.3ZM484.34 1320.3V1264.17H485.46V1320.3ZM485.46 1320.3V1264.17H486.58V1320.3ZM486.58 1320.3V1252.94H487.71V1320.3ZM487.71 1320.3V1258.55H488.83V1320.3ZM488.83 1320.3V1258.55H489.95V1320.3ZM489.95 1320.3V1264.17H491.07V1320.3ZM491.07 1320.3V1252.94H492.19V1320.3ZM492.19 1320.3V1258.55H493.32V1320.3ZM493.32 1320.3V1258.55H494.44V1320.3ZM494.44 1320.3V1258.55H495.56V1320.3ZM495.56 1320.3V1264.17H496.68V1320.3ZM496.68 1320.3V1264.17H497.80V1320.3ZM497.80 1320.3V1264.17H498.92V1320.3ZM498.92 1320.3V1258.55H500.05V1320.3ZM500.05 1320.3V1258.55H501.17V1320.3ZM501.17 1320.3V1258.55H502.29V1320.3ZM502.29 1320.3V1264.17H503.41V1320.3ZM503.41 1320.3V1264.17H504.53V1320.3ZM504.53 1320.3V1264.17H505.65V1320.3ZM505.65 1320.3V1264.17H506.78V1320.3ZM506.78 1320.3V1264.17H507.90V1320.3ZM507.90 1320.3V1264.17H509.02V1320.3ZM509.02 1320.3V1258.55H510.14V1320.3ZM510.14 1320.3V1258.55H511.26V1320.3ZM511.26 1320.3V1258.55H512.39V1320.3ZM512.39 1320.3V1258.55H513.51V1320.3ZM513.51 1320.3V1258.55H514.63V1320.3ZM514.63 1320.3V1258.55H515.75V1320.3ZM515.75 1320.3V1264.17H516.87V1320.3ZM516.87 1320.3V1264.17H517.99V1320.3ZM517.99 1320.3V1264.17H519.12V1320.3ZM519.12 1320.3V1264.17H520.24V1320.3ZM520.24 1320.3V1264.17H521.36V1320.3ZM521.36 1320.3V1258.55H522.48V1320.3ZM522.48 1320.3V1258.55H523.60V1320.3ZM523.60 1320.3V1258.55H524.73V1320.3ZM524.73 1320.3V1258.55H525.85V1320.3ZM525.85 1320.3V1258.55H526.97V1320.3ZM526.97 1320.3V1258.55H528.09V1320.3ZM528.09 1320.3V1258.55H529.21V1320.3ZM529.21 1320.3V1258.55H530.33V1320.3ZM530.33 1320.3V1258.55H531.46V1320.3ZM531.46 1320.3V1258.55H532.58V1320.3ZM532.58 1320.3V1258.55H533.70V1320.3ZM533.70 1320.3V1252.94H534.82V1320.3ZM534.82 1320.3V1258.55H535.94V1320.3ZM535.94 1320.3V1258.55H537.06V1320.3ZM537.06 1320.3V1258.55H538.19V1320.3ZM538.19 1320.3V1264.17H539.31V1320.3ZM539.31 1320.3V1264.17H540.43V1320.3ZM540.43 1320.3V1264.17H541.55V1320.3ZM541.55 1320.3V1264.17H542.67V1320.3ZM542.67 1320.3V1264.17H543.80V1320.3ZM543.80 1320.3V1258.55H544.92V1320.3ZM544.92 1320.3V1258.55H546.04V1320.3ZM546.04 1320.3V1258.55H547.16V1320.3ZM547.16 1320.3V1258.55H548.28V1320.3ZM548.28 1320.3V1252.94H549.40V1320.3ZM549.40 1320.3V1264.17H550.53V1320.3ZM550.53 1320.3V1252.94H551.65V1320.3ZM551.65 1320.3V1258.55H552.77V1320.3ZM552.77 1320.3V1258.55H553.89V1320.3ZM553.89 1320.3V1264.17H555.01V1320.3ZM555.01 1320.3V1264.17H556.13V1320.3ZM556.13 1320.3V1264.17H557.26V1320.3ZM557.26 1320.3V1264.17H558.38V1320.3ZM558.38 1320.3V1264.17H559.50V1320.3ZM559.50 1320.3V1264.17H560.62V1320.3ZM560.62 1320.3V1252.94H561.74V1320.3ZM561.74 1320.3V1258.55H562.87V1320.3ZM562.87 1320.3V1258.55H563.99V1320.3ZM563.99 1320.3V1258.55H565.11V1320.3ZM565.11 1320.3V1258.55H566.23V1320.3ZM566.23 1320.3V1258.55H567.35V1320.3ZM567.35 1320.3V1258.55H568.47V1320.3ZM568.47 1320.3V1264.17H569.60V1320.3ZM569.60 1320.3V1264.17H570.72V1320.3ZM570.72 1320.3V1264.17H571.84V1320.3ZM571.84 1320.3V1264.17H572.96V1320.3ZM572.96 1320.3V1264.17H574.08V1320.3ZM574.08 1320.3V1258.55H575.21V1320.3ZM575.21 1320.3V1264.17H576.33V1320.3ZM576.33 1320.3V1252.94H577.45V1320.3ZM577.45 1320.3V1264.17H578.57V1320.3ZM578.57 1320.3V1264.17H579.69V1320.3ZM579.69 1320.3V1252.94H580.81V1320.3ZM580.81 1320.3V1264.17H581.94V1320.3ZM581.94 1320.3V1264.17H583.06V1320.3ZM583.06 1320.3V1264.17H584.18V1320.3ZM584.18 1320.3V1264.17H585.30V1320.3ZM585.30 1320.3V1258.55H586.42V1320.3ZM586.42 1320.3V1258.55H587.54V1320.3ZM587.54 1320.3V1258.55H588.67V1320.3ZM588.67 1320.3V1258.55H589.79V1320.3ZM589.79 1320.3V1258.55H590.91V1320.3ZM590.91 1320.3V1264.17H592.03V1320.3ZM592.03 1320.3V1252.94H593.15V1320.3ZM593.15 1320.3V1264.17H594.28V1320.3ZM594.28 1320.3V1264.17H595.40V1320.3ZM595.40 1320.3V1264.17H596.52V1320.3ZM596.52 1320.3V1264.17H597.64V1320.3ZM597.64 1320.3V1264.17H598.76V1320.3ZM598.76 1320.3V1264.17H599.88V1320.3ZM599.88 1320.3V1264.17H601.01V1320.3ZM601.01 1320.3V1264.17H602.13V1320.3ZM602.13 1320.3V1264.17H603.25V1320.3ZM603.25 1320.3V1264.17H604.37V1320.3ZM604.37 1320.3V1264.17H605.49V1320.3ZM605.49 1320.3V1258.55H606.61V1320.3ZM606.61 1320.3V1258.55H607.74V1320.3ZM607.74 1320.3V1264.17H608.86V1320.3ZM608.86 1320.3V1264.17H609.98V1320.3ZM609.98 1320.3V1264.17H611.10V1320.3ZM611.10 1320.3V1264.17H612.22V1320.3ZM612.22 1320.3V1264.17H613.35V1320.3ZM613.35 1320.3V1264.17H614.47V1320.3ZM614.47 1320.3V1258.55H615.59V1320.3ZM615.59 1320.3V1258.55H616.71V1320.3ZM616.71 1320.3V1264.17H617.83V1320.3ZM617.83 1320.3V1264.17H618.95V1320.3ZM618.95 1320.3V1264.17H620.08V1320.3ZM620.08 1320.3V1252.94H621.20V1320.3ZM621.20 1320.3V1264.17H622.32V1320.3ZM622.32 1320.3V1264.17H623.44V1320.3ZM623.44 1320.3V1264.17H624.56V1320.3ZM624.56 1320.3V1264.17H625.68V1320.3ZM625.68 1320.3V1264.17H626.81V1320.3ZM626.81 1320.3V1258.55H627.93V1320.3ZM627.93 1320.3V1258.55H629.05V1320.3ZM629.05 1320.3V1258.55H630.17V1320.3ZM630.17 1320.3V1258.55H631.29V1320.3ZM631.29 1320.3V1252.94H632.42V1320.3ZM632.42 1320.3V1264.17H633.54V1320.3ZM633.54 1320.3V1264.17H634.66V1320.3ZM634.66 1320.3V1269.78H635.78V1320.3ZM635.78 1320.3V1269.78H636.90V1320.3ZM636.90 1320.3V1269.78H638.02V1320.3ZM638.02 1320.3V1275.39H639.15V1320.3ZM639.15 1320.3V1281.01H640.27V1320.3ZM640.27 1320.3V1275.39H641.39V1320.3ZM641.39 1320.3V1275.39H642.51V1320.3ZM642.51 1320.3V1275.39H643.63V1320.3ZM643.63 1320.3V1275.39H644.76V1320.3ZM644.76 1320.3V1281.01H645.88V1320.3ZM645.88 1320.3V1281.01H647.00V1320.3ZM647.00 1320.3V1281.01H648.12V1320.3ZM648.12 1320.3V1281.01H649.24V1320.3ZM649.24 1320.3V1281.01H650.36V1320.3ZM650.36 1320.3V1281.01H651.49V1320.3ZM651.49 1320.3V1281.01H652.61V1320.3ZM652.61 1320.3V1281.01H653.73V1320.3ZM653.73 1320.3V1281.01H654.85V1320.3ZM654.85 1320.3V1281.01H655.97V1320.3ZM655.97 1320.3V1275.39H657.09V1320.3ZM657.09 1320.3V1275.39H658.22V1320.3ZM658.22 1320.3V1275.39H659.34V1320.3ZM659.34 1320.3V1275.39H660.46V1320.3ZM660.46 1320.3V1275.39H661.58V1320.3ZM661.58 1320.3V1275.39H662.70V1320.3ZM662.70 1320.3V1275.39H663.83V1320.3ZM663.83 1320.3V1275.39H664.95V1320.3ZM664.95 1320.3V1275.39H666.07V1320.3ZM666.07 1320.3V1269.78H667.19V1320.3ZM667.19 1320.3V1269.78H668.31V1320.3ZM668.31 1320.3V1269.78H669.43V1320.3ZM669.43 1320.3V1269.78H670.56V1320.3ZM670.56 1320.3V1269.78H671.68V1320.3ZM671.68 1320.3V1281.01H672.80V1320.3ZM672.80 1320.3V1281.01H673.92V1320.3ZM673.92 1320.3V1281.01H675.04V1320.3ZM675.04 1320.3V1281.01H676.16V1320.3ZM676.16 1320.3V1281.01H677.29V1320.3ZM677.29 1320.3V1281.01H678.41V1320.3ZM678.41 1320.3V1281.01H679.53V1320.3ZM679.53 1320.3V1281.01H680.65V1320.3ZM680.65 1320.3V1281.01H681.77V1320.3ZM681.77 1320.3V1281.01H682.90V1320.3ZM682.90 1320.3V1281.01H684.02V1320.3ZM684.02 1320.3V1281.01H685.14V1320.3ZM685.14 1320.3V1281.01H686.26V1320.3ZM686.26 1320.3V1281.01H687.38V1320.3ZM687.38 1320.3V1281.01H688.50V1320.3ZM688.50 1320.3V1281.01H689.63V1320.3ZM689.63 1320.3V1281.01H690.75V1320.3ZM690.75 1320.3V1275.39H691.87V1320.3ZM691.87 1320.3V1275.39H692.99V1320.3ZM692.99 1320.3V1264.17H694.11V1320.3ZM694.11 1320.3V1264.17H695.24V1320.3ZM695.24 1320.3V1264.17H696.36V1320.3ZM696.36 1320.3V1264.17H697.48V1320.3ZM697.48 1320.3V1264.17H698.60V1320.3ZM698.60 1320.3V1264.17H699.72V1320.3ZM699.72 1320.3V1264.17H700.84V1320.3ZM700.84 1320.3V1264.17H701.97V1320.3ZM701.97 1320.3V1281.01H703.09V1320.3ZM703.09 1320.3V1281.01H704.21V1320.3ZM704.21 1320.3V1281.01H705.33V1320.3ZM705.33 1320.3V1281.01H706.45V1320.3ZM706.45 1320.3V1281.01H707.57V1320.3ZM707.57 1320.3V1281.01H708.70V1320.3ZM708.70 1320.3V1281.01H709.82V1320.3ZM709.82 1320.3V1275.39H710.94V1320.3ZM710.94 1320.3V1275.39H712.06V1320.3ZM712.06 1320.3V1275.39H713.18V1320.3ZM713.18 1320.3V1275.39H714.31V1320.3ZM714.31 1320.3V1275.39H715.43V1320.3ZM715.43 1320.3V1275.39H716.55V1320.3ZM716.55 1320.3V1275.39H717.67V1320.3ZM717.67 1320.3V1275.39H718.79V1320.3ZM718.79 1320.3V1281.01H719.91V1320.3ZM719.91 1320.3V1275.39H721.04V1320.3ZM721.04 1320.3V1275.39H722.16V1320.3ZM722.16 1320.3V1275.39H723.28V1320.3ZM723.28 1320.3V1281.01H724.40V1320.3ZM724.40 1320.3V1281.01H725.52V1320.3ZM725.52 1320.3V1281.01H726.64V1320.3ZM726.64 1320.3V1269.78H727.77V1320.3ZM727.77 1320.3V1269.78H728.89V1320.3ZM728.89 1320.3V1269.78H730.01V1320.3ZM730.01 1320.3V1275.39H731.13V1320.3ZM731.13 1320.3V1275.39H732.25V1320.3ZM732.25 1320.3V1275.39H733.38V1320.3ZM733.38 1320.3V1275.39H734.50V1320.3ZM734.50 1320.3V1275.39H735.62V1320.3ZM735.62 1320.3V1269.78H736.74V1320.3ZM736.74 1320.3V1269.78H737.86V1320.3ZM737.86 1320.3V1269.78H738.98V1320.3ZM738.98 1320.3V1269.78H740.11V1320.3ZM740.11 1320.3V1269.78H741.23V1320.3ZM741.23 1320.3V1269.78H742.35V1320.3ZM742.35 1320.3V1269.78H743.47V1320.3ZM743.47 1320.3V1269.78H744.59V1320.3ZM744.59 1320.3V1269.78H745.71V1320.3ZM745.71 1320.3V1275.39H746.84V1320.3ZM746.84 1320.3V1275.39H747.96V1320.3ZM747.96 1320.3V1275.39H749.08V1320.3ZM749.08 1320.3V1275.39H750.20V1320.3ZM750.20 1320.3V1275.39H751.32V1320.3ZM751.32 1320.3V1275.39H752.45V1320.3ZM752.45 1320.3V1275.39H753.57V1320.3ZM753.57 1320.3V1275.39H754.69V1320.3ZM754.69 1320.3V1275.39H755.81V1320.3ZM755.81 1320.3V1275.39H756.93V1320.3ZM756.93 1320.3V1275.39H758.05V1320.3ZM758.05 1320.3V1275.39H759.18V1320.3ZM759.18 1320.3V1275.39H760.30V1320.3ZM760.30 1320.3V1275.39H761.42V1320.3ZM761.42 1320.3V1269.78H762.54V1320.3ZM762.54 1320.3V1275.39H763.66V1320.3ZM763.66 1320.3V1275.39H764.79V1320.3ZM764.79 1320.3V1269.78H765.91V1320.3ZM765.91 1320.3V1269.78H767.03V1320.3ZM767.03 1320.3V1269.78H768.15V1320.3ZM768.15 1320.3V1269.78H769.27V1320.3ZM769.27 1320.3V1269.78H770.39V1320.3ZM770.39 1320.3V1269.78H771.52V1320.3ZM771.52 1320.3V1269.78H772.64V1320.3ZM772.64 1320.3V1269.78H773.76V1320.3ZM773.76 1320.3V1269.78H774.88V1320.3ZM774.88 1320.3V1269.78H776.00V1320.3ZM776.00 1320.3V1269.78H777.12V1320.3ZM777.12 1320.3V1264.17H778.25V1320.3ZM778.25 1320.3V1264.17H779.37V1320.3ZM779.37 1320.3V1264.17H780.49V1320.3ZM780.49 1320.3V1258.55H781.61V1320.3ZM781.61 1320.3V1258.55H782.73V1320.3ZM782.73 1320.3V1258.55H783.86V1320.3ZM783.86 1320.3V1252.94H784.98V1320.3ZM784.98 1320.3V1258.55H786.10V1320.3ZM786.10 1320.3V1252.94H787.22V1320.3ZM787.22 1320.3V1252.94H788.34V1320.3ZM788.34 1320.3V1252.94H789.46V1320.3ZM789.46 1320.3V1252.94H790.59V1320.3ZM790.59 1320.3V1252.94H791.71V1320.3ZM791.71 1320.3V1252.94H792.83V1320.3ZM792.83 1320.3V1252.94H793.95V1320.3ZM793.95 1320.3V1252.94H795.07V1320.3ZM795.07 1320.3V1252.94H796.19V1320.3ZM796.19 1320.3V1258.55H797.32V1320.3ZM797.32 1320.3V1258.55H798.44V1320.3ZM798.44 1320.3V1252.94H799.56V1320.3ZM799.56 1320.3V1252.94H800.68V1320.3ZM800.68 1320.3V1264.17H801.80V1320.3ZM801.80 1320.3V1264.17H802.93V1320.3ZM802.93 1320.3V1264.17H804.05V1320.3ZM804.05 1320.3V1264.17H805.17V1320.3ZM805.17 1320.3V1264.17H806.29V1320.3ZM806.29 1320.3V1258.55H807.41V1320.3ZM807.41 1320.3V1258.55H808.53V1320.3ZM808.53 1320.3V1258.55H809.66V1320.3ZM809.66 1320.3V1258.55H810.78V1320.3ZM810.78 1320.3V1258.55H811.90V1320.3ZM811.90 1320.3V1264.17H813.02V1320.3ZM813.02 1320.3V1264.17H814.14V1320.3ZM814.14 1320.3V1264.17H815.27V1320.3ZM815.27 1320.3V1264.17H816.39V1320.3ZM816.39 1320.3V1264.17H817.51V1320.3ZM817.51 1320.3V1264.17H818.63V1320.3ZM818.63 1320.3V1258.55H819.75V1320.3ZM819.75 1320.3V1258.55H820.87V1320.3ZM820.87 1320.3V1258.55H822.00V1320.3ZM822.00 1320.3V1258.55H823.12V1320.3ZM823.12 1320.3V1258.55H824.24V1320.3ZM824.24 1320.3V1258.55H825.36V1320.3ZM825.36 1320.3V1264.17H826.48V1320.3ZM826.48 1320.3V1264.17H827.60V1320.3ZM827.60 1320.3V1264.17H828.73V1320.3ZM828.73 1320.3V1264.17H829.85V1320.3ZM829.85 1320.3V1264.17H830.97V1320.3ZM830.97 1320.3V1264.17H832.09V1320.3ZM832.09 1320.3V1264.17H833.21V1320.3ZM833.21 1320.3V1258.55H834.34V1320.3ZM834.34 1320.3V1258.55H835.46V1320.3ZM835.46 1320.3V1258.55H836.58V1320.3ZM836.58 1320.3V1258.55H837.70V1320.3ZM837.70 1320.3V1258.55H838.82V1320.3ZM838.82 1320.3V1258.55H839.94V1320.3ZM839.94 1320.3V1258.55H841.07V1320.3ZM841.07 1320.3V1258.55H842.19V1320.3ZM842.19 1320.3V1252.94H843.31V1320.3ZM843.31 1320.3V1258.55H844.43V1320.3ZM844.43 1320.3V1258.55H845.55V1320.3ZM845.55 1320.3V1258.55H846.67V1320.3ZM846.67 1320.3V1258.55H847.80V1320.3ZM847.80 1320.3V1258.55H848.92V1320.3ZM848.92 1320.3V1258.55H850.04V1320.3ZM850.04 1320.3V1258.55H851.16V1320.3ZM851.16 1320.3V1258.55H852.28V1320.3ZM852.28 1320.3V1258.55H853.41V1320.3ZM853.41 1320.3V1258.55H854.53V1320.3ZM854.53 1320.3V1258.55H855.65V1320.3ZM855.65 1320.3V1258.55H856.77V1320.3ZM856.77 1320.3V1252.94H857.89V1320.3ZM857.89 1320.3V1264.17H859.01V1320.3ZM859.01 1320.3V1264.17H860.14V1320.3ZM860.14 1320.3V1264.17H861.26V1320.3ZM861.26 1320.3V1264.17H862.38V1320.3ZM862.38 1320.3V1258.55H863.50V1320.3ZM863.50 1320.3V1258.55H864.62V1320.3ZM864.62 1320.3V1258.55H865.74V1320.3ZM865.74 1320.3V1258.55H866.87V1320.3ZM866.87 1320.3V1258.55H867.99V1320.3ZM867.99 1320.3V1258.55H869.11V1320.3ZM869.11 1320.3V1258.55H870.23V1320.3ZM870.23 1320.3V1258.55H871.35V1320.3ZM871.35 1320.3V1258.55H872.48V1320.3ZM872.48 1320.3V1258.55H873.60V1320.3ZM873.60 1320.3V1258.55H874.72V1320.3ZM874.72 1320.3V1146.29H875.84V1320.3ZM875.84 1320.3V1146.29H876.96V1320.3ZM876.96 1320.3V1146.29H878.08V1320.3ZM878.08 1320.3V1140.67H879.21V1320.3ZM879.21 1320.3V1146.29H880.33V1320.3ZM880.33 1320.3V1146.29H881.45V1320.3ZM1029.52 1320.3V1269.78H1030.65V1320.3ZM1030.65 1320.3V1269.78H1031.77V1320.3ZM1031.77 1320.3V1269.78H1032.89V1320.3ZM1032.89 1320.3V1269.78H1034.01V1320.3ZM1034.01 1320.3V1275.39H1035.13V1320.3ZM1035.13 1320.3V1275.39H1036.25V1320.3ZM1036.25 1320.3V1275.39H1037.38V1320.3ZM1037.38 1320.3V1275.39H1038.50V1320.3ZM1038.50 1320.3V1275.39H1039.62V1320.3ZM1039.62 1320.3V1269.78H1040.74V1320.3ZM1040.74 1320.3V1269.78H1041.86V1320.3ZM1041.86 1320.3V1269.78H1042.99V1320.3ZM1042.99 1320.3V1269.78H1044.11V1320.3ZM1044.11 1320.3V1269.78H1045.23V1320.3ZM1045.23 1320.3V1269.78H1046.35V1320.3ZM1046.35 1320.3V1269.78H1047.47V1320.3ZM1047.47 1320.3V1269.78H1048.59V1320.3ZM1048.59 1320.3V1269.78H1049.72V1320.3ZM1049.72 1320.3V1269.78H1050.84V1320.3ZM1050.84 1320.3V1269.78H1051.96V1320.3ZM1051.96 1320.3V1269.78H1053.08V1320.3ZM1053.08 1320.3V1269.78H1054.20V1320.3ZM1054.20 1320.3V1269.78H1055.33V1320.3ZM1055.33 1320.3V1269.78H1056.45V1320.3ZM1056.45 1320.3V1269.78H1057.57V1320.3ZM1057.57 1320.3V1269.78H1058.69V1320.3ZM1058.69 1320.3V1269.78H1059.81V1320.3ZM1059.81 1320.3V1269.78H1060.93V1320.3ZM1060.93 1320.3V1269.78H1062.06V1320.3ZM1062.06 1320.3V1269.78H1063.18V1320.3ZM1063.18 1320.3V1269.78H1064.30V1320.3ZM1064.30 1320.3V1269.78H1065.42V1320.3ZM1065.42 1320.3V1269.78H1066.54V1320.3ZM1066.54 1320.3V1269.78H1067.66V1320.3ZM1067.66 1320.3V1269.78H1068.79V1320.3ZM1068.79 1320.3V1269.78H1069.91V1320.3ZM1069.91 1320.3V1269.78H1071.03V1320.3ZM1071.03 1320.3V1269.78H1072.15V1320.3ZM1072.15 1320.3V1269.78H1073.27V1320.3ZM1073.27 1320.3V1269.78H1074.40V1320.3ZM1074.40 1320.3V1269.78H1075.52V1320.3ZM1075.52 1320.3V1269.78H1076.64V1320.3ZM1076.64 1320.3V1269.78H1077.76V1320.3ZM1077.76 1320.3V1269.78H1078.88V1320.3ZM1078.88 1320.3V1269.78H1080.00V1320.3ZM1080.00 1320.3V1269.78H1081.13V1320.3ZM1081.13 1320.3V1269.78H1082.25V1320.3ZM1082.25 1320.3V1269.78H1083.37V1320.3ZM1083.37 1320.3V1269.78H1084.49V1320.3ZM1084.49 1320.3V1269.78H1085.61V1320.3ZM1085.61 1320.3V1269.78H1086.73V1320.3ZM1086.73 1320.3V1269.78H1087.86V1320.3ZM1087.86 1320.3V1269.78H1088.98V1320.3ZM1088.98 1320.3V1264.17H1090.10V1320.3ZM1090.10 1320.3V1264.17H1091.22V1320.3ZM1091.22 1320.3V1264.17H1092.34V1320.3ZM1092.34 1320.3V1264.17H1093.47V1320.3ZM1093.47 1320.3V1264.17H1094.59V1320.3ZM1094.59 1320.3V1264.17H1095.71V1320.3ZM1095.71 1320.3V1264.17H1096.83V1320.3ZM1096.83 1320.3V1264.17H1097.95V1320.3ZM1097.95 1320.3V1264.17H1099.07V1320.3ZM1099.07 1320.3V1264.17H1100.20V1320.3ZM1100.20 1320.3V1264.17H1101.32V1320.3ZM1101.32 1320.3V1264.17H1102.44V1320.3ZM1102.44 1320.3V1252.94H1103.56V1320.3ZM1103.56 1320.3V1252.94H1104.68V1320.3ZM1104.68 1320.3V1252.94H1105.80V1320.3ZM1105.80 1320.3V1252.94H1106.93V1320.3ZM1106.93 1320.3V1252.94H1108.05V1320.3ZM1108.05 1320.3V1252.94H1109.17V1320.3ZM1109.17 1320.3V1252.94H1110.29V1320.3ZM1110.29 1320.3V1252.94H1111.41V1320.3ZM1111.41 1320.3V1252.94H1112.54V1320.3ZM1112.54 1320.3V1252.94H1113.66V1320.3ZM1113.66 1320.3V1252.94H1114.78V1320.3ZM1114.78 1320.3V1252.94H1115.90V1320.3ZM1115.90 1320.3V1252.94H1117.02V1320.3ZM1117.02 1320.3V1252.94H1118.14V1320.3ZM1118.14 1320.3V1252.94H1119.27V1320.3ZM1119.27 1320.3V1252.94H1120.39V1320.3ZM1120.39 1320.3V1252.94H1121.51V1320.3ZM1121.51 1320.3V1258.55H1122.63V1320.3ZM1122.63 1320.3V1258.55H1123.75V1320.3ZM1123.75 1320.3V1264.17H1124.88V1320.3ZM1124.88 1320.3V1264.17H1126.00V1320.3ZM1126.00 1320.3V1264.17H1127.12V1320.3ZM1127.12 1320.3V1264.17H1128.24V1320.3ZM1128.24 1320.3V1264.17H1129.36V1320.3ZM1129.36 1320.3V1264.17H1130.48V1320.3ZM1130.48 1320.3V1264.17H1131.61V1320.3ZM1131.61 1320.3V1264.17H1132.73V1320.3ZM1132.73 1320.3V1258.55H1133.85V1320.3ZM1133.85 1320.3V1258.55H1134.97V1320.3ZM1134.97 1320.3V1264.17H1136.09V1320.3ZM1136.09 1320.3V1264.17H1137.21V1320.3ZM1137.21 1320.3V1264.17H1138.34V1320.3ZM1138.34 1320.3V1264.17H1139.46V1320.3ZM1139.46 1320.3V1264.17H1140.58V1320.3ZM1140.58 1320.3V1264.17H1141.70V1320.3ZM1141.70 1320.3V1264.17H1142.82V1320.3ZM1142.82 1320.3V1264.17H1143.95V1320.3ZM1143.95 1320.3V1264.17H1145.07V1320.3ZM1145.07 1320.3V1264.17H1146.19V1320.3ZM1146.19 1320.3V1258.55H1147.31V1320.3ZM1147.31 1320.3V1258.55H1148.43V1320.3ZM1148.43 1320.3V1258.55H1149.55V1320.3ZM1149.55 1320.3V1258.55H1150.68V1320.3ZM1150.68 1320.3V1258.55H1151.80V1320.3ZM1151.80 1320.3V1258.55H1152.92V1320.3ZM1152.92 1320.3V1258.55H1154.04V1320.3ZM1154.04 1320.3V1258.55H1155.16V1320.3ZM1155.16 1320.3V1258.55H1156.28V1320.3ZM1156.28 1320.3V1258.55H1157.41V1320.3ZM1157.41 1320.3V1258.55H1158.53V1320.3ZM1158.53 1320.3V1258.55H1159.65V1320.3ZM1159.65 1320.3V1258.55H1160.77V1320.3ZM1160.77 1320.3V1258.55H1161.89V1320.3ZM1161.89 1320.3V1264.17H1163.02V1320.3ZM1163.02 1320.3V1264.17H1164.14V1320.3ZM1164.14 1320.3V1264.17H1165.26V1320.3ZM1165.26 1320.3V1264.17H1166.38V1320.3ZM1166.38 1320.3V1264.17H1167.50V1320.3ZM1167.50 1320.3V1264.17H1168.62V1320.3ZM1168.62 1320.3V1264.17H1169.75V1320.3ZM1169.75 1320.3V1252.94H1170.87V1320.3ZM1170.87 1320.3V1258.55H1171.99V1320.3ZM1171.99 1320.3V1258.55H1173.11V1320.3ZM1173.11 1320.3V1258.55H1174.23V1320.3ZM1174.23 1320.3V1258.55H1175.36V1320.3ZM1175.36 1320.3V1258.55H1176.48V1320.3ZM1176.48 1320.3V1258.55H1177.60V1320.3ZM1177.60 1320.3V1258.55H1178.72V1320.3ZM1178.72 1320.3V1258.55H1179.84V1320.3ZM1179.84 1320.3V1258.55H1180.96V1320.3ZM1180.96 1320.3V1258.55H1182.09V1320.3ZM1182.09 1320.3V1258.55H1183.21V1320.3ZM1183.21 1320.3V1252.94H1184.33V1320.3ZM1184.33 1320.3V1258.55H1185.45V1320.3ZM1185.45 1320.3V1264.17H1186.57V1320.3ZM1186.57 1320.3V1264.17H1187.69V1320.3ZM1187.69 1320.3V1264.17H1188.82V1320.3ZM1188.82 1320.3V1264.17H1189.94V1320.3ZM1189.94 1320.3V1264.17H1191.06V1320.3ZM1191.06 1320.3V1264.17H1192.18V1320.3ZM1192.18 1320.3V1264.17H1193.30V1320.3ZM1193.30 1320.3V1264.17H1194.43V1320.3ZM1194.43 1320.3V1264.17H1195.55V1320.3ZM1195.55 1320.3V1264.17H1196.67V1320.3ZM1196.67 1320.3V1264.17H1197.79V1320.3ZM1197.79 1320.3V1264.17H1198.91V1320.3ZM1198.91 1320.3V1264.17H1200.03V1320.3ZM1200.03 1320.3V1264.17H1201.16V1320.3ZM1201.16 1320.3V1264.17H1202.28V1320.3ZM1202.28 1320.3V1264.17H1203.40V1320.3ZM1203.40 1320.3V1264.17H1204.52V1320.3ZM1352.60 1320.3V1168.74H1353.72V1320.3ZM1353.72 1320.3V1174.35H1354.84V1320.3ZM1354.84 1320.3V1174.35H1355.96V1320.3ZM1355.96 1320.3V1174.35H1357.08V1320.3ZM1357.08 1320.3V1163.13H1358.20V1320.3ZM1358.20 1320.3V1151.90H1359.33V1320.3ZM1359.33 1320.3V1168.74H1360.45V1320.3ZM1360.45 1320.3V1163.13H1361.57V1320.3ZM1361.57 1320.3V1157.51H1362.69V1320.3ZM1362.69 1320.3V1174.35H1363.81V1320.3ZM1363.81 1320.3V1191.19H1364.94V1320.3ZM1364.94 1320.3V1213.65H1366.06V1320.3ZM1366.06 1320.3V1224.87H1367.18V1320.3ZM1367.18 1320.3V1236.10H1368.30V1320.3ZM1368.30 1320.3V1252.94H1369.42V1320.3ZM1369.42 1320.3V1264.17H1370.54V1320.3ZM1370.54 1320.3V1264.17H1371.67V1320.3ZM1371.67 1320.3V1264.17H1372.79V1320.3ZM1372.79 1320.3V1269.78H1373.91V1320.3ZM1373.91 1320.3V1269.78H1375.03V1320.3ZM1375.03 1320.3V1269.78H1376.15V1320.3ZM1376.15 1320.3V1269.78H1377.27V1320.3ZM1377.27 1320.3V1269.78H1378.40V1320.3ZM1378.40 1320.3V1269.78H1379.52V1320.3ZM1379.52 1320.3V1258.55H1380.64V1320.3ZM1380.64 1320.3V1269.78H1381.76V1320.3ZM1381.76 1320.3V1269.78H1382.88V1320.3ZM1382.88 1320.3V1269.78H1384.01V1320.3ZM1384.01 1320.3V1269.78H1385.13V1320.3ZM1385.13 1320.3V1269.78H1386.25V1320.3ZM1386.25 1320.3V1269.78H1387.37V1320.3ZM1387.37 1320.3V1258.55H1388.49V1320.3ZM1388.49 1320.3V1269.78H1389.61V1320.3ZM1389.61 1320.3V1264.17H1390.74V1320.3ZM1390.74 1320.3V1264.17H1391.86V1320.3ZM1391.86 1320.3V1264.17H1392.98V1320.3ZM1392.98 1320.3V1264.17H1394.10V1320.3ZM1394.10 1320.3V1264.17H1395.22V1320.3ZM1395.22 1320.3V1264.17H1396.34V1320.3ZM1396.34 1320.3V1264.17H1397.47V1320.3ZM1397.47 1320.3V1264.17H1398.59V1320.3ZM1398.59 1320.3V1264.17H1399.71V1320.3ZM1399.71 1320.3V1264.17H1400.83V1320.3ZM1400.83 1320.3V1264.17H1401.95V1320.3ZM1401.95 1320.3V1264.17H1403.08V1320.3ZM1403.08 1320.3V1264.17H1404.20V1320.3ZM1404.20 1320.3V1264.17H1405.32V1320.3ZM1405.32 1320.3V1258.55H1406.44V1320.3ZM1406.44 1320.3V1269.78H1407.56V1320.3ZM1407.56 1320.3V1269.78H1408.68V1320.3ZM1408.68 1320.3V1269.78H1409.81V1320.3ZM1409.81 1320.3V1269.78H1410.93V1320.3ZM1410.93 1320.3V1269.78H1412.05V1320.3ZM1412.05 1320.3V1269.78H1413.17V1320.3ZM1413.17 1320.3V1269.78H1414.29V1320.3ZM1414.29 1320.3V1269.78H1415.42V1320.3ZM1415.42 1320.3V1269.78H1416.54V1320.3ZM1416.54 1320.3V1269.78H1417.66V1320.3ZM1417.66 1320.3V1269.78H1418.78V1320.3ZM1418.78 1320.3V1269.78H1419.90V1320.3ZM1419.90 1320.3V1269.78H1421.02V1320.3ZM1421.02 1320.3V1269.78H1422.15V1320.3ZM1422.15 1320.3V1269.78H1423.27V1320.3ZM1423.27 1320.3V1269.78H1424.39V1320.3ZM1424.39 1320.3V1269.78H1425.51V1320.3ZM1425.51 1320.3V1269.78H1426.63V1320.3ZM1426.63 1320.3V1269.78H1427.75V1320.3ZM1427.75 1320.3V1269.78H1428.88V1320.3ZM1428.88 1320.3V1264.17H1430.00V1320.3ZM1430.00 1320.3V1269.78H1431.12V1320.3ZM1431.12 1320.3V1275.39H1432.24V1320.3ZM1432.24 1320.3V1275.39H1433.36V1320.3ZM1433.36 1320.3V1269.78H1434.49V1320.3ZM1434.49 1320.3V1269.78H1435.61V1320.3ZM1435.61 1320.3V1269.78H1436.73V1320.3ZM1436.73 1320.3V1264.17H1437.85V1320.3ZM1437.85 1320.3V1269.78H1438.97V1320.3ZM1438.97 1320.3V1269.78H1440.09V1320.3ZM1440.09 1320.3V1269.78H1441.22V1320.3ZM1441.22 1320.3V1269.78H1442.34V1320.3ZM1442.34 1320.3V1269.78H1443.46V1320.3ZM1443.46 1320.3V1269.78H1444.58V1320.3ZM1444.58 1320.3V1269.78H1445.70V1320.3ZM1445.70 1320.3V1269.78H1446.82V1320.3ZM1446.82 1320.3V1269.78H1447.95V1320.3ZM1447.95 1320.3V1269.78H1449.07V1320.3ZM1449.07 1320.3V1269.78H1450.19V1320.3ZM1450.19 1320.3V1264.17H1451.31V1320.3ZM1451.31 1320.3V1264.17H1452.43V1320.3ZM1452.43 1320.3V1269.78H1453.56V1320.3ZM1453.56 1320.3V1264.17H1454.68V1320.3ZM1454.68 1320.3V1264.17H1455.80V1320.3ZM1455.80 1320.3V1264.17H1456.92V1320.3ZM1456.92 1320.3V1264.17H1458.04V1320.3ZM1458.04 1320.3V1264.17H1459.16V1320.3ZM1459.16 1320.3V1264.17H1460.29V1320.3ZM1460.29 1320.3V1264.17H1461.41V1320.3ZM1461.41 1320.3V1264.17H1462.53V1320.3ZM1462.53 1320.3V1269.78H1463.65V1320.3ZM1463.65 1320.3V1269.78H1464.77V1320.3ZM1464.77 1320.3V1264.17H1465.90V1320.3ZM1465.90 1320.3V1264.17H1467.02V1320.3ZM1467.02 1320.3V1264.17H1468.14V1320.3ZM1468.14 1320.3V1264.17H1469.26V1320.3ZM1469.26 1320.3V1264.17H1470.38V1320.3ZM1470.38 1320.3V1264.17H1471.50V1320.3ZM1471.50 1320.3V1269.78H1472.63V1320.3ZM1472.63 1320.3V1269.78H1473.75V1320.3ZM1473.75 1320.3V1258.55H1474.87V1320.3ZM1474.87 1320.3V1252.94H1475.99V1320.3ZM1475.99 1320.3V1258.55H1477.11V1320.3ZM1477.11 1320.3V1252.94H1478.23V1320.3ZM1478.23 1320.3V1252.94H1479.36V1320.3ZM1479.36 1320.3V1252.94H1480.48V1320.3ZM1480.48 1320.3V1258.55H1481.60V1320.3ZM1481.60 1320.3V1269.78H1482.72V1320.3ZM1482.72 1320.3V1269.78H1483.84V1320.3ZM1483.84 1320.3V1269.78H1484.97V1320.3ZM1484.97 1320.3V1269.78H1486.09V1320.3ZM1486.09 1320.3V1269.78H1487.21V1320.3ZM1487.21 1320.3V1269.78H1488.33V1320.3ZM1488.33 1320.3V1269.78H1489.45V1320.3ZM1489.45 1320.3V1269.78H1490.57V1320.3ZM1490.57 1320.3V1269.78H1491.70V1320.3ZM1491.70 1320.3V1269.78H1492.82V1320.3ZM1492.82 1320.3V1269.78H1493.94V1320.3ZM1493.94 1320.3V1269.78H1495.06V1320.3ZM1495.06 1320.3V1269.78H1496.18V1320.3ZM1496.18 1320.3V1269.78H1497.30V1320.3ZM1497.30 1320.3V1264.17H1498.43V1320.3ZM1498.43 1320.3V1269.78H1499.55V1320.3ZM1499.55 1320.3V1269.78H1500.67V1320.3ZM1500.67 1320.3V1264.17H1501.79V1320.3ZM1501.79 1320.3V1264.17H1502.91V1320.3ZM1502.91 1320.3V1264.17H1504.04V1320.3ZM1504.04 1320.3V1264.17H1505.16V1320.3ZM1505.16 1320.3V1264.17H1506.28V1320.3ZM1506.28 1320.3V1264.17H1507.40V1320.3ZM1507.40 1320.3V1269.78H1508.52V1320.3ZM1508.52 1320.3V1264.17H1509.64V1320.3ZM1509.64 1320.3V1264.17H1510.77V1320.3ZM1510.77 1320.3V1264.17H1511.89V1320.3ZM1511.89 1320.3V1264.17H1513.01V1320.3ZM1513.01 1320.3V1269.78H1514.13V1320.3ZM1514.13 1320.3V1264.17H1515.25V1320.3ZM1515.25 1320.3V1264.17H1516.37V1320.3ZM1516.37 1320.3V1264.17H1517.50V1320.3ZM1517.50 1320.3V1264.17H1518.62V1320.3ZM1518.62 1320.3V1264.17H1519.74V1320.3ZM1519.74 1320.3V1269.78H1520.86V1320.3ZM1520.86 1320.3V1269.78H1521.98V1320.3ZM1521.98 1320.3V1269.78H1523.11V1320.3ZM1523.11 1320.3V1269.78H1524.23V1320.3ZM1524.23 1320.3V1269.78H1525.35V1320.3ZM1525.35 1320.3V1269.78H1526.47V1320.3ZM1526.47 1320.3V1269.78H1527.59V1320.3ZM1675.67 1320.3V1264.17H1676.79V1320.3ZM1676.79 1320.3V1264.17H1677.91V1320.3ZM1677.91 1320.3V1264.17H1679.03V1320.3ZM1679.03 1320.3V1269.78H1680.15V1320.3ZM1680.15 1320.3V1264.17H1681.28V1320.3ZM1681.28 1320.3V1264.17H1682.40V1320.3ZM1682.40 1320.3V1269.78H1683.52V1320.3ZM1683.52 1320.3V1269.78H1684.64V1320.3ZM1684.64 1320.3V1269.78H1685.76V1320.3ZM1685.76 1320.3V1269.78H1686.88V1320.3ZM1686.88 1320.3V1269.78H1688.01V1320.3ZM1688.01 1320.3V1269.78H1689.13V1320.3ZM1689.13 1320.3V1269.78H1690.25V1320.3ZM1690.25 1320.3V1269.78H1691.37V1320.3ZM1691.37 1320.3V1269.78H1692.49V1320.3ZM1692.49 1320.3V1269.78H1693.62V1320.3ZM1693.62 1320.3V1269.78H1694.74V1320.3ZM1694.74 1320.3V1269.78H1695.86V1320.3ZM1695.86 1320.3V1269.78H1696.98V1320.3ZM1696.98 1320.3V1269.78H1698.10V1320.3ZM1698.10 1320.3V1269.78H1699.22V1320.3ZM1699.22 1320.3V1269.78H1700.35V1320.3ZM1700.35 1320.3V1269.78H1701.47V1320.3ZM1701.47 1320.3V1269.78H1702.59V1320.3ZM1702.59 1320.3V1269.78H1703.71V1320.3ZM1703.71 1320.3V1269.78H1704.83V1320.3ZM1704.83 1320.3V1269.78H1705.96V1320.3ZM1705.96 1320.3V1264.17H1707.08V1320.3ZM1707.08 1320.3V1264.17H1708.20V1320.3ZM1708.20 1320.3V1264.17H1709.32V1320.3ZM1709.32 1320.3V1258.55H1710.44V1320.3ZM1710.44 1320.3V1269.78H1711.56V1320.3ZM1711.56 1320.3V1269.78H1712.69V1320.3ZM1712.69 1320.3V1269.78H1713.81V1320.3ZM1713.81 1320.3V1269.78H1714.93V1320.3ZM1714.93 1320.3V1269.78H1716.05V1320.3ZM1716.05 1320.3V1264.17H1717.17V1320.3ZM1717.17 1320.3V1264.17H1718.29V1320.3ZM1718.29 1320.3V1264.17H1719.42V1320.3ZM1719.42 1320.3V1264.17H1720.54V1320.3ZM1720.54 1320.3V1264.17H1721.66V1320.3ZM1721.66 1320.3V1269.78H1722.78V1320.3ZM1722.78 1320.3V1269.78H1723.90V1320.3ZM1723.90 1320.3V1269.78H1725.03V1320.3ZM1725.03 1320.3V1264.17H1726.15V1320.3ZM1726.15 1320.3V1269.78H1727.27V1320.3ZM1727.27 1320.3V1269.78H1728.39V1320.3ZM1728.39 1320.3V1269.78H1729.51V1320.3ZM1729.51 1320.3V1269.78H1730.63V1320.3ZM1730.63 1320.3V1269.78H1731.76V1320.3ZM1731.76 1320.3V1269.78H1732.88V1320.3ZM1732.88 1320.3V1269.78H1734.00V1320.3ZM1734.00 1320.3V1269.78H1735.12V1320.3ZM1735.12 1320.3V1269.78H1736.24V1320.3ZM1736.24 1320.3V1258.55H1737.36V1320.3ZM1737.36 1320.3V1269.78H1738.49V1320.3ZM1738.49 1320.3V1269.78H1739.61V1320.3ZM1739.61 1320.3V1269.78H1740.73V1320.3ZM1740.73 1320.3V1269.78H1741.85V1320.3ZM1741.85 1320.3V1269.78H1742.97V1320.3ZM1742.97 1320.3V1269.78H1744.10V1320.3ZM1744.10 1320.3V1258.55H1745.22V1320.3ZM1745.22 1320.3V1269.78H1746.34V1320.3ZM1746.34 1320.3V1269.78H1747.46V1320.3ZM1747.46 1320.3V1264.17H1748.58V1320.3ZM1748.58 1320.3V1258.55H1749.70V1320.3ZM1749.70 1320.3V1258.55H1750.83V1320.3ZM1750.83 1320.3V1258.55H1751.95V1320.3ZM1751.95 1320.3V1264.17H1753.07V1320.3ZM1753.07 1320.3V1264.17H1754.19V1320.3ZM1754.19 1320.3V1264.17H1755.31V1320.3ZM1755.31 1320.3V1264.17H1756.43V1320.3ZM1756.43 1320.3V1264.17H1757.56V1320.3ZM1757.56 1320.3V1252.94H1758.68V1320.3ZM1758.68 1320.3V1258.55H1759.80V1320.3ZM1759.80 1320.3V1258.55H1760.92V1320.3ZM1760.92 1320.3V1258.55H1762.04V1320.3ZM1762.04 1320.3V1264.17H1763.17V1320.3ZM1763.17 1320.3V1264.17H1764.29V1320.3ZM1764.29 1320.3V1264.17H1765.41V1320.3ZM1765.41 1320.3V1264.17H1766.53V1320.3ZM1766.53 1320.3V1264.17H1767.65V1320.3ZM1767.65 1320.3V1258.55H1768.77V1320.3ZM1768.77 1320.3V1258.55H1769.90V1320.3ZM1769.90 1320.3V1258.55H1771.02V1320.3ZM1771.02 1320.3V1258.55H1772.14V1320.3ZM1772.14 1320.3V1258.55H1773.26V1320.3ZM1773.26 1320.3V1258.55H1774.38V1320.3ZM1774.38 1320.3V1258.55H1775.51V1320.3ZM1775.51 1320.3V1252.94H1776.63V1320.3ZM1776.63 1320.3V1258.55H1777.75V1320.3ZM1777.75 1320.3V1264.17H1778.87V1320.3ZM1778.87 1320.3V1258.55H1779.99V1320.3ZM1779.99 1320.3V1258.55H1781.11V1320.3ZM1781.11 1320.3V1258.55H1782.24V1320.3ZM1782.24 1320.3V1258.55H1783.36V1320.3ZM1783.36 1320.3V1258.55H1784.48V1320.3ZM1784.48 1320.3V1258.55H1785.60V1320.3ZM1785.60 1320.3V1264.17H1786.72V1320.3ZM1786.72 1320.3V1258.55H1787.84V1320.3ZM1787.84 1320.3V1258.55H1788.97V1320.3ZM1788.97 1320.3V1258.55H1790.09V1320.3ZM1790.09 1320.3V1258.55H1791.21V1320.3ZM1791.21 1320.3V1258.55H1792.33V1320.3ZM1792.33 1320.3V1258.55H1793.45V1320.3ZM1793.45 1320.3V1258.55H1794.58V1320.3ZM1794.58 1320.3V1258.55H1795.70V1320.3ZM1795.70 1320.3V1258.55H1796.82V1320.3ZM1796.82 1320.3V1258.55H1797.94V1320.3ZM1797.94 1320.3V1258.55H1799.06V1320.3ZM1799.06 1320.3V1258.55H1800.18V1320.3ZM1800.18 1320.3V1258.55H1801.31V1320.3ZM1801.31 1320.3V1258.55H1802.43V1320.3ZM1802.43 1320.3V1258.55H1803.55V1320.3ZM1803.55 1320.3V1258.55H1804.67V1320.3ZM1804.67 1320.3V1258.55H1805.79V1320.3ZM1805.79 1320.3V1258.55H1806.91V1320.3ZM1806.91 1320.3V1258.55H1808.04V1320.3ZM1808.04 1320.3V1258.55H1809.16V1320.3ZM1809.16 1320.3V1258.55H1810.28V1320.3ZM1810.28 1320.3V1258.55H1811.40V1320.3ZM1811.40 1320.3V1258.55H1812.52V1320.3ZM1812.52 1320.3V1258.55H1813.65V1320.3ZM1813.65 1320.3V1258.55H1814.77V1320.3ZM1814.77 1320.3V1258.55H1815.89V1320.3ZM1815.89 1320.3V1258.55H1817.01V1320.3ZM1817.01 1320.3V1258.55H1818.13V1320.3ZM1818.13 1320.3V1258.55H1819.25V1320.3ZM1819.25 1320.3V1258.55H1820.38V1320.3ZM1820.38 1320.3V1258.55H1821.50V1320.3ZM1821.50 1320.3V1258.55H1822.62V1320.3ZM1822.62 1320.3V1241.71H1823.74V1320.3ZM1823.74 1320.3V1252.94H1824.86V1320.3ZM1824.86 1320.3V1252.94H1825.99V1320.3ZM1825.99 1320.3V1252.94H1827.11V1320.3ZM1827.11 1320.3V1258.55H1828.23V1320.3ZM1828.23 1320.3V1252.94H1829.35V1320.3ZM1829.35 1320.3V1252.94H1830.47V1320.3ZM1830.47 1320.3V1258.55H1831.59V1320.3ZM1831.59 1320.3V1258.55H1832.72V1320.3ZM1832.72 1320.3V1264.17H1833.84V1320.3ZM1833.84 1320.3V1264.17H1834.96V1320.3ZM1834.96 1320.3V1258.55H1836.08V1320.3ZM1836.08 1320.3V1264.17H1837.20V1320.3ZM1837.20 1320.3V1258.55H1838.32V1320.3ZM1838.32 1320.3V1258.55H1839.45V1320.3ZM1839.45 1320.3V1258.55H1840.57V1320.3ZM1840.57 1320.3V1258.55H1841.69V1320.3ZM1841.69 1320.3V1258.55H1842.81V1320.3ZM1842.81 1320.3V1258.55H1843.93V1320.3ZM1843.93 1320.3V1258.55H1845.06V1320.3ZM1845.06 1320.3V1258.55H1846.18V1320.3ZM1846.18 1320.3V1258.55H1847.30V1320.3ZM1847.30 1320.3V1264.17H1848.42V1320.3ZM1848.42 1320.3V1264.17H1849.54V1320.3ZM1849.54 1320.3V1264.17H1850.66V1320.3ZM1998.74 1320.3V1252.94H1999.86V1320.3ZM1999.86 1320.3V1252.94H2000.98V1320.3ZM2000.98 1320.3V1275.39H2002.10V1320.3ZM2002.10 1320.3V1275.39H2003.23V1320.3ZM2003.23 1320.3V1275.39H2004.35V1320.3ZM2004.35 1320.3V1275.39H2005.47V1320.3ZM2005.47 1320.3V1275.39H2006.59V1320.3ZM2006.59 1320.3V1275.39H2007.71V1320.3ZM2007.71 1320.3V1275.39H2008.83V1320.3ZM2008.83 1320.3V1275.39H2009.96V1320.3ZM2009.96 1320.3V1275.39H2011.08V1320.3ZM2011.08 1320.3V1275.39H2012.20V1320.3ZM2012.20 1320.3V1275.39H2013.32V1320.3ZM2013.32 1320.3V1275.39H2014.44V1320.3ZM2014.44 1320.3V1275.39H2015.57V1320.3ZM2015.57 1320.3V1275.39H2016.69V1320.3ZM2016.69 1320.3V1275.39H2017.81V1320.3ZM2017.81 1320.3V1275.39H2018.93V1320.3ZM2018.93 1320.3V1275.39H2020.05V1320.3ZM2020.05 1320.3V1275.39H2021.17V1320.3ZM2021.17 1320.3V1275.39H2022.30V1320.3ZM2022.30 1320.3V1275.39H2023.42V1320.3ZM2023.42 1320.3V1275.39H2024.54V1320.3ZM2024.54 1320.3V1275.39H2025.66V1320.3ZM2025.66 1320.3V1269.78H2026.78V1320.3ZM2026.78 1320.3V1275.39H2027.90V1320.3ZM2027.90 1320.3V1275.39H2029.03V1320.3ZM2029.03 1320.3V1258.55H2030.15V1320.3ZM2030.15 1320.3V1258.55H2031.27V1320.3ZM2031.27 1320.3V1258.55H2032.39V1320.3ZM2032.39 1320.3V1258.55H2033.51V1320.3ZM2033.51 1320.3V1258.55H2034.64V1320.3ZM2034.64 1320.3V1258.55H2035.76V1320.3ZM2035.76 1320.3V1258.55H2036.88V1320.3ZM2036.88 1320.3V1258.55H2038.00V1320.3ZM2038.00 1320.3V1258.55H2039.12V1320.3ZM2039.12 1320.3V1269.78H2040.24V1320.3ZM2040.24 1320.3V1269.78H2041.37V1320.3ZM2041.37 1320.3V1269.78H2042.49V1320.3ZM2042.49 1320.3V1269.78H2043.61V1320.3ZM2043.61 1320.3V1269.78H2044.73V1320.3ZM2044.73 1320.3V1269.78H2045.85V1320.3ZM2045.85 1320.3V1269.78H2046.97V1320.3ZM2046.97 1320.3V1264.17H2048.10V1320.3ZM2048.10 1320.3V1264.17H2049.22V1320.3ZM2049.22 1320.3V1269.78H2050.34V1320.3ZM2050.34 1320.3V1269.78H2051.46V1320.3ZM2051.46 1320.3V1269.78H2052.58V1320.3ZM2052.58 1320.3V1269.78H2053.71V1320.3ZM2053.71 1320.3V1269.78H2054.83V1320.3ZM2054.83 1320.3V1269.78H2055.95V1320.3ZM2055.95 1320.3V1264.17H2057.07V1320.3ZM2057.07 1320.3V1264.17H2058.19V1320.3ZM2058.19 1320.3V1264.17H2059.31V1320.3ZM2059.31 1320.3V1264.17H2060.44V1320.3ZM2060.44 1320.3V1264.17H2061.56V1320.3ZM2061.56 1320.3V1264.17H2062.68V1320.3ZM2062.68 1320.3V1264.17H2063.80V1320.3ZM2063.80 1320.3V1264.17H2064.92V1320.3ZM2064.92 1320.3V1264.17H2066.05V1320.3ZM2066.05 1320.3V1264.17H2067.17V1320.3ZM2067.17 1320.3V1264.17H2068.29V1320.3ZM2068.29 1320.3V1264.17H2069.41V1320.3ZM2069.41 1320.3V1264.17H2070.53V1320.3ZM2070.53 1320.3V1264.17H2071.65V1320.3ZM2071.65 1320.3V1264.17H2072.78V1320.3ZM2072.78 1320.3V1264.17H2073.90V1320.3ZM2073.90 1320.3V1264.17H2075.02V1320.3ZM2075.02 1320.3V1269.78H2076.14V1320.3ZM2076.14 1320.3V1269.78H2077.26V1320.3ZM2077.26 1320.3V1269.78H2078.38V1320.3ZM2078.38 1320.3V1269.78H2079.51V1320.3ZM2079.51 1320.3V1269.78H2080.63V1320.3ZM2080.63 1320.3V1269.78H2081.75V1320.3ZM2081.75 1320.3V1269.78H2082.87V1320.3ZM2082.87 1320.3V1269.78H2083.99V1320.3ZM2083.99 1320.3V1264.17H2085.12V1320.3ZM2085.12 1320.3V1269.78H2086.24V1320.3ZM2086.24 1320.3V1269.78H2087.36V1320.3ZM2087.36 1320.3V1269.78H2088.48V1320.3ZM2088.48 1320.3V1264.17H2089.60V1320.3ZM2089.60 1320.3V1264.17H2090.72V1320.3ZM2090.72 1320.3V1264.17H2091.85V1320.3ZM2091.85 1320.3V1264.17H2092.97V1320.3ZM2092.97 1320.3V1269.78H2094.09V1320.3ZM2094.09 1320.3V1269.78H2095.21V1320.3ZM2095.21 1320.3V1269.78H2096.33V1320.3ZM2096.33 1320.3V1269.78H2097.45V1320.3ZM2097.45 1320.3V1269.78H2098.58V1320.3ZM2098.58 1320.3V1269.78H2099.70V1320.3ZM2099.70 1320.3V1275.39H2100.82V1320.3ZM2100.82 1320.3V1269.78H2101.94V1320.3ZM2101.94 1320.3V1269.78H2103.06V1320.3ZM2103.06 1320.3V1269.78H2104.19V1320.3ZM2104.19 1320.3V1269.78H2105.31V1320.3ZM2105.31 1320.3V1269.78H2106.43V1320.3ZM2106.43 1320.3V1269.78H2107.55V1320.3ZM2107.55 1320.3V1269.78H2108.67V1320.3ZM2108.67 1320.3V1275.39H2109.79V1320.3ZM2109.79 1320.3V1269.78H2110.92V1320.3ZM2110.92 1320.3V1275.39H2112.04V1320.3ZM2112.04 1320.3V1269.78H2113.16V1320.3ZM2113.16 1320.3V1269.78H2114.28V1320.3ZM2114.28 1320.3V1269.78H2115.40V1320.3ZM2115.40 1320.3V1269.78H2116.52V1320.3ZM2116.52 1320.3V1269.78H2117.65V1320.3ZM2117.65 1320.3V1269.78H2118.77V1320.3ZM2118.77 1320.3V1275.39H2119.89V1320.3ZM2119.89 1320.3V1269.78H2121.01V1320.3ZM2121.01 1320.3V1269.78H2122.13V1320.3ZM2122.13 1320.3V1269.78H2123.26V1320.3ZM2123.26 1320.3V1269.78H2124.38V1320.3ZM2124.38 1320.3V1269.78H2125.50V1320.3ZM2125.50 1320.3V1269.78H2126.62V1320.3ZM2126.62 1320.3V1275.39H2127.74V1320.3ZM2127.74 1320.3V1269.78H2128.86V1320.3ZM2128.86 1320.3V1269.78H2129.99V1320.3ZM2129.99 1320.3V1269.78H2131.11V1320.3ZM2131.11 1320.3V1269.78H2132.23V1320.3ZM2132.23 1320.3V1269.78H2133.35V1320.3ZM2133.35 1320.3V1269.78H2134.47V1320.3ZM2134.47 1320.3V1269.78H2135.60V1320.3ZM2135.60 1320.3V1269.78H2136.72V1320.3ZM2136.72 1320.3V1269.78H2137.84V1320.3ZM2137.84 1320.3V1269.78H2138.96V1320.3ZM2138.96 1320.3V1269.78H2140.08V1320.3ZM2140.08 1320.3V1275.39H2141.20V1320.3ZM2141.20 1320.3V1269.78H2142.33V1320.3ZM2142.33 1320.3V1275.39H2143.45V1320.3ZM2143.45 1320.3V1269.78H2144.57V1320.3ZM2144.57 1320.3V1269.78H2145.69V1320.3ZM2145.69 1320.3V1269.78H2146.81V1320.3ZM2146.81 1320.3V1269.78H2147.93V1320.3ZM2147.93 1320.3V1269.78H2149.06V1320.3ZM2149.06 1320.3V1275.39H2150.18V1320.3ZM2150.18 1320.3V1269.78H2151.30V1320.3ZM2151.30 1320.3V1275.39H2152.42V1320.3ZM2152.42 1320.3V1269.78H2153.54V1320.3ZM2153.54 1320.3V1269.78H2154.67V1320.3ZM2154.67 1320.3V1269.78H2155.79V1320.3ZM2155.79 1320.3V1269.78H2156.91V1320.3ZM2156.91 1320.3V1275.39H2158.03V1320.3ZM2158.03 1320.3V1269.78H2159.15V1320.3ZM2159.15 1320.3V1264.17H2160.27V1320.3ZM2160.27 1320.3V1269.78H2161.40V1320.3ZM2161.40 1320.3V1269.78H2162.52V1320.3ZM2162.52 1320.3V1275.39H2163.64V1320.3ZM2163.64 1320.3V1269.78H2164.76V1320.3ZM2164.76 1320.3V1275.39H2165.88V1320.3ZM2165.88 1320.3V1269.78H2167.00V1320.3ZM2167.00 1320.3V1269.78H2168.13V1320.3ZM2168.13 1320.3V1264.17H2169.25V1320.3ZM2169.25 1320.3V1264.17H2170.37V1320.3ZM2170.37 1320.3V1264.17H2171.49V1320.3ZM2171.49 1320.3V1269.78H2172.61V1320.3ZM2172.61 1320.3V1264.17H2173.74V1320.3ZM2321.81 1320.3V1191.19H2322.93V1320.3ZM2322.93 1320.3V1185.58H2324.05V1320.3ZM2324.05 1320.3V1185.58H2325.18V1320.3ZM2325.18 1320.3V1191.19H2326.30V1320.3ZM2326.30 1320.3V1196.81H2327.42V1320.3ZM2327.42 1320.3V1202.42H2328.54V1320.3ZM2328.54 1320.3V1208.03H2329.66V1320.3ZM2329.66 1320.3V1202.42H2330.78V1320.3ZM2330.78 1320.3V1202.42H2331.91V1320.3ZM2331.91 1320.3V1208.03H2333.03V1320.3ZM2333.03 1320.3V1202.42H2334.15V1320.3ZM2334.15 1320.3V1208.03H2335.27V1320.3ZM2335.27 1320.3V1202.42H2336.39V1320.3ZM2336.39 1320.3V1208.03H2337.51V1320.3ZM2337.51 1320.3V1208.03H2338.64V1320.3ZM2338.64 1320.3V1202.42H2339.76V1320.3ZM2339.76 1320.3V1208.03H2340.88V1320.3ZM2340.88 1320.3V1252.94H2342.00V1320.3ZM2342.00 1320.3V1247.33H2343.12V1320.3ZM2343.12 1320.3V1247.33H2344.25V1320.3ZM2344.25 1320.3V1241.71H2345.37V1320.3ZM2345.37 1320.3V1241.71H2346.49V1320.3ZM2346.49 1320.3V1241.71H2347.61V1320.3ZM2347.61 1320.3V1247.33H2348.73V1320.3ZM2348.73 1320.3V1230.49H2349.85V1320.3ZM2349.85 1320.3V1247.33H2350.98V1320.3ZM2350.98 1320.3V1241.71H2352.10V1320.3ZM2352.10 1320.3V1241.71H2353.22V1320.3ZM2353.22 1320.3V1247.33H2354.34V1320.3ZM2354.34 1320.3V1241.71H2355.46V1320.3ZM2355.46 1320.3V1241.71H2356.58V1320.3ZM2356.58 1320.3V1247.33H2357.71V1320.3ZM2357.71 1320.3V1247.33H2358.83V1320.3ZM2358.83 1320.3V1247.33H2359.95V1320.3ZM2359.95 1320.3V1247.33H2361.07V1320.3ZM2361.07 1320.3V1247.33H2362.19V1320.3ZM2362.19 1320.3V1241.71H2363.32V1320.3ZM2363.32 1320.3V1247.33H2364.44V1320.3ZM2364.44 1320.3V1247.33H2365.56V1320.3ZM2365.56 1320.3V1241.71H2366.68V1320.3ZM2366.68 1320.3V1241.71H2367.80V1320.3ZM2367.80 1320.3V1247.33H2368.92V1320.3ZM2368.92 1320.3V1241.71H2370.05V1320.3ZM2370.05 1320.3V1247.33H2371.17V1320.3ZM2371.17 1320.3V1241.71H2372.29V1320.3ZM2372.29 1320.3V1247.33H2373.41V1320.3ZM2373.41 1320.3V1247.33H2374.53V1320.3ZM2374.53 1320.3V1241.71H2375.66V1320.3ZM2375.66 1320.3V1247.33H2376.78V1320.3ZM2376.78 1320.3V1247.33H2377.90V1320.3ZM2377.90 1320.3V1241.71H2379.02V1320.3ZM2379.02 1320.3V1247.33H2380.14V1320.3ZM2380.14 1320.3V1247.33H2381.26V1320.3ZM2381.26 1320.3V1247.33H2382.39V1320.3ZM2382.39 1320.3V1247.33H2383.51V1320.3ZM2383.51 1320.3V1247.33H2384.63V1320.3ZM2384.63 1320.3V1247.33H2385.75V1320.3ZM2385.75 1320.3V1241.71H2386.87V1320.3ZM2386.87 1320.3V1247.33H2387.99V1320.3ZM2387.99 1320.3V1247.33H2389.12V1320.3ZM2389.12 1320.3V1252.94H2390.24V1320.3ZM2390.24 1320.3V1247.33H2391.36V1320.3ZM2391.36 1320.3V1247.33H2392.48V1320.3ZM2392.48 1320.3V1252.94H2393.60V1320.3ZM2393.60 1320.3V1247.33H2394.73V1320.3ZM2394.73 1320.3V1247.33H2395.85V1320.3ZM2395.85 1320.3V1252.94H2396.97V1320.3ZM2396.97 1320.3V1247.33H2398.09V1320.3ZM2398.09 1320.3V1247.33H2399.21V1320.3ZM2399.21 1320.3V1252.94H2400.33V1320.3ZM2400.33 1320.3V1247.33H2401.46V1320.3ZM2401.46 1320.3V1247.33H2402.58V1320.3ZM2402.58 1320.3V1252.94H2403.70V1320.3ZM2403.70 1320.3V1247.33H2404.82V1320.3ZM2404.82 1320.3V1247.33H2405.94V1320.3ZM2405.94 1320.3V1252.94H2407.06V1320.3ZM2407.06 1320.3V1247.33H2408.19V1320.3ZM2408.19 1320.3V1247.33H2409.31V1320.3ZM2409.31 1320.3V1252.94H2410.43V1320.3ZM2410.43 1320.3V1247.33H2411.55V1320.3ZM2411.55 1320.3V1247.33H2412.67V1320.3ZM2412.67 1320.3V1252.94H2413.80V1320.3ZM2413.80 1320.3V1247.33H2414.92V1320.3Z" fill="#a0ecc1" shape-rendering="crispEdges"/>
<path d="M881.45 1320.3V1056.47H882.57V1320.3ZM882.57 1320.3V1067.70H883.69V1320.3ZM883.69 1320.3V1028.41H884.82V1320.3ZM884.82 1320.3V1056.47H885.94V1320.3ZM885.94 1320.3V1022.79H887.06V1320.3ZM887.06 1320.3V1034.02H888.18V1320.3ZM888.18 1320.3V1022.79H889.30V1320.3ZM889.30 1320.3V1028.41H890.42V1320.3ZM890.42 1320.3V1028.41H891.55V1320.3ZM891.55 1320.3V1017.18H892.67V1320.3ZM892.67 1320.3V1090.15H893.79V1320.3ZM893.79 1320.3V1056.47H894.91V1320.3ZM894.91 1320.3V1039.63H896.03V1320.3ZM896.03 1320.3V994.73H897.15V1320.3ZM897.15 1320.3V1017.18H898.28V1320.3ZM898.28 1320.3V882.46H899.40V1320.3ZM899.40 1320.3V972.27H900.52V1320.3ZM900.52 1320.3V961.05H901.64V1320.3ZM901.64 1320.3V961.05H902.76V1320.3ZM902.76 1320.3V1039.63H903.89V1320.3ZM903.89 1320.3V1011.57H905.01V1320.3ZM905.01 1320.3V1005.95H906.13V1320.3ZM906.13 1320.3V871.23H907.25V1320.3ZM907.25 1320.3V1005.95H908.37V1320.3ZM908.37 1320.3V1022.79H909.49V1320.3ZM909.49 1320.3V1022.79H910.62V1320.3ZM910.62 1320.3V1017.18H911.74V1320.3ZM911.74 1320.3V1011.57H912.86V1320.3ZM912.86 1320.3V1005.95H913.98V1320.3ZM913.98 1320.3V1112.61H915.10V1320.3ZM915.10 1320.3V1034.02H916.22V1320.3ZM916.22 1320.3V837.55H917.35V1320.3ZM917.35 1320.3V1056.47H918.47V1320.3ZM918.47 1320.3V1045.25H919.59V1320.3ZM919.59 1320.3V1022.79H920.71V1320.3ZM920.71 1320.3V1028.41H921.83V1320.3ZM921.83 1320.3V1022.79H922.96V1320.3ZM922.96 1320.3V1067.70H924.08V1320.3ZM924.08 1320.3V843.17H925.20V1320.3ZM925.20 1320.3V1056.47H926.32V1320.3ZM926.32 1320.3V1067.70H927.44V1320.3ZM927.44 1320.3V1062.09H928.56V1320.3ZM928.56 1320.3V899.30H929.69V1320.3ZM929.69 1320.3V1050.86H930.81V1320.3ZM930.81 1320.3V1039.63H931.93V1320.3ZM931.93 1320.3V1056.47H933.05V1320.3ZM933.05 1320.3V1073.31H934.17V1320.3ZM934.17 1320.3V994.73H935.30V1320.3ZM935.30 1320.3V1000.34H936.42V1320.3ZM936.42 1320.3V910.53H937.54V1320.3ZM937.54 1320.3V1028.41H938.66V1320.3ZM938.66 1320.3V1022.79H939.78V1320.3ZM939.78 1320.3V1045.25H940.90V1320.3ZM940.90 1320.3V1045.25H942.03V1320.3ZM942.03 1320.3V910.53H943.15V1320.3ZM943.15 1320.3V1151.90H944.27V1320.3ZM944.27 1320.3V1101.38H945.39V1320.3ZM945.39 1320.3V1095.77H946.51V1320.3ZM946.51 1320.3V1084.54H947.63V1320.3ZM947.63 1320.3V1017.18H948.76V1320.3ZM948.76 1320.3V1106.99H949.88V1320.3ZM949.88 1320.3V1039.63H951.00V1320.3ZM951.00 1320.3V1028.41H952.12V1320.3ZM952.12 1320.3V932.98H953.24V1320.3ZM953.24 1320.3V1095.77H954.37V1320.3ZM954.37 1320.3V1101.38H955.49V1320.3ZM955.49 1320.3V961.05H956.61V1320.3ZM956.61 1320.3V1090.15H957.73V1320.3ZM957.73 1320.3V1179.97H958.85V1320.3ZM958.85 1320.3V1174.35H959.97V1320.3ZM959.97 1320.3V1168.74H961.10V1320.3ZM961.10 1320.3V1168.74H962.22V1320.3ZM962.22 1320.3V1163.13H963.34V1320.3ZM963.34 1320.3V1174.35H964.46V1320.3ZM964.46 1320.3V1168.74H965.58V1320.3ZM965.58 1320.3V1174.35H966.70V1320.3ZM966.70 1320.3V1185.58H967.83V1320.3ZM967.83 1320.3V1157.51H968.95V1320.3ZM968.95 1320.3V1045.25H970.07V1320.3ZM970.07 1320.3V1084.54H971.19V1320.3ZM971.19 1320.3V1146.29H972.31V1320.3ZM972.31 1320.3V1146.29H973.44V1320.3ZM973.44 1320.3V1157.51H974.56V1320.3ZM974.56 1320.3V949.82H975.68V1320.3ZM975.68 1320.3V1067.70H976.80V1320.3ZM976.80 1320.3V1112.61H977.92V1320.3ZM977.92 1320.3V1106.99H979.04V1320.3ZM979.04 1320.3V1078.93H980.17V1320.3ZM980.17 1320.3V1073.31H981.29V1320.3ZM981.29 1320.3V1151.90H982.41V1320.3ZM982.41 1320.3V1146.29H983.53V1320.3ZM983.53 1320.3V1095.77H984.65V1320.3ZM984.65 1320.3V1101.38H985.77V1320.3ZM985.77 1320.3V1112.61H986.90V1320.3ZM986.90 1320.3V1095.77H988.02V1320.3ZM988.02 1320.3V1039.63H989.14V1320.3ZM989.14 1320.3V1084.54H990.26V1320.3ZM990.26 1320.3V1146.29H991.38V1320.3ZM991.38 1320.3V1135.06H992.51V1320.3ZM992.51 1320.3V1157.51H993.63V1320.3ZM993.63 1320.3V1163.13H994.75V1320.3ZM994.75 1320.3V1129.45H995.87V1320.3ZM995.87 1320.3V1163.13H996.99V1320.3ZM996.99 1320.3V1168.74H998.11V1320.3ZM998.11 1320.3V1151.90H999.24V1320.3ZM999.24 1320.3V1146.29H1000.36V1320.3ZM1000.36 1320.3V1151.90H1001.48V1320.3ZM1001.48 1320.3V983.50H1002.60V1320.3ZM1002.60 1320.3V1163.13H1003.72V1320.3ZM1003.72 1320.3V1151.90H1004.85V1320.3ZM1004.85 1320.3V1151.90H1005.97V1320.3ZM1005.97 1320.3V1146.29H1007.09V1320.3ZM1007.09 1320.3V1157.51H1008.21V1320.3ZM1008.21 1320.3V1157.51H1009.33V1320.3ZM1009.33 1320.3V1157.51H1010.45V1320.3ZM1010.45 1320.3V1151.90H1011.58V1320.3ZM1011.58 1320.3V1146.29H1012.70V1320.3ZM1012.70 1320.3V1011.57H1013.82V1320.3ZM1013.82 1320.3V1168.74H1014.94V1320.3ZM1014.94 1320.3V1151.90H1016.06V1320.3ZM1016.06 1320.3V1157.51H1017.18V1320.3ZM1017.18 1320.3V1151.90H1018.31V1320.3ZM1018.31 1320.3V1151.90H1019.43V1320.3ZM1019.43 1320.3V1140.67H1020.55V1320.3ZM1020.55 1320.3V1163.13H1021.67V1320.3ZM1021.67 1320.3V1163.13H1022.79V1320.3ZM1022.79 1320.3V1163.13H1023.92V1320.3ZM1023.92 1320.3V1174.35H1025.04V1320.3ZM1025.04 1320.3V1168.74H1026.16V1320.3ZM1026.16 1320.3V1168.74H1027.28V1320.3ZM1027.28 1320.3V1151.90H1028.40V1320.3ZM1028.40 1320.3V1163.13H1029.52V1320.3ZM1204.52 1320.3V1252.94H1205.64V1320.3ZM1205.64 1320.3V1252.94H1206.76V1320.3ZM1206.76 1320.3V1208.03H1207.89V1320.3ZM1207.89 1320.3V1196.81H1209.01V1320.3ZM1209.01 1320.3V1179.97H1210.13V1320.3ZM1210.13 1320.3V1174.35H1211.25V1320.3ZM1211.25 1320.3V1157.51H1212.37V1320.3ZM1212.37 1320.3V1151.90H1213.50V1320.3ZM1213.50 1320.3V1146.29H1214.62V1320.3ZM1214.62 1320.3V1135.06H1215.74V1320.3ZM1215.74 1320.3V1123.83H1216.86V1320.3ZM1216.86 1320.3V1112.61H1217.98V1320.3ZM1217.98 1320.3V1118.22H1219.10V1320.3ZM1219.10 1320.3V1112.61H1220.23V1320.3ZM1220.23 1320.3V1101.38H1221.35V1320.3ZM1221.35 1320.3V1011.57H1222.47V1320.3ZM1222.47 1320.3V1022.79H1223.59V1320.3ZM1223.59 1320.3V972.27H1224.71V1320.3ZM1224.71 1320.3V904.91H1225.83V1320.3ZM1225.83 1320.3V1067.70H1226.96V1320.3ZM1226.96 1320.3V1118.22H1228.08V1320.3ZM1228.08 1320.3V1017.18H1229.20V1320.3ZM1229.20 1320.3V1022.79H1230.32V1320.3ZM1230.32 1320.3V1084.54H1231.44V1320.3ZM1231.44 1320.3V1084.54H1232.57V1320.3ZM1232.57 1320.3V1050.86H1233.69V1320.3ZM1233.69 1320.3V1112.61H1234.81V1320.3ZM1234.81 1320.3V1084.54H1235.93V1320.3ZM1235.93 1320.3V1106.99H1237.05V1320.3ZM1237.05 1320.3V1005.95H1238.17V1320.3ZM1238.17 1320.3V1106.99H1239.30V1320.3ZM1239.30 1320.3V1112.61H1240.42V1320.3ZM1240.42 1320.3V1151.90H1241.54V1320.3ZM1241.54 1320.3V1028.41H1242.66V1320.3ZM1242.66 1320.3V1123.83H1243.78V1320.3ZM1243.78 1320.3V1129.45H1244.91V1320.3ZM1244.91 1320.3V1106.99H1246.03V1320.3ZM1246.03 1320.3V1112.61H1247.15V1320.3ZM1247.15 1320.3V1084.54H1248.27V1320.3ZM1248.27 1320.3V1135.06H1249.39V1320.3ZM1249.39 1320.3V1106.99H1250.51V1320.3ZM1250.51 1320.3V1084.54H1251.64V1320.3ZM1251.64 1320.3V938.59H1252.76V1320.3ZM1252.76 1320.3V1095.77H1253.88V1320.3ZM1253.88 1320.3V1084.54H1255.00V1320.3ZM1255.00 1320.3V1073.31H1256.12V1320.3ZM1256.12 1320.3V1146.29H1257.24V1320.3ZM1257.24 1320.3V1151.90H1258.37V1320.3ZM1258.37 1320.3V1123.83H1259.49V1320.3ZM1259.49 1320.3V1129.45H1260.61V1320.3ZM1260.61 1320.3V1146.29H1261.73V1320.3ZM1261.73 1320.3V1101.38H1262.85V1320.3ZM1262.85 1320.3V1157.51H1263.98V1320.3ZM1263.98 1320.3V893.69H1265.10V1320.3ZM1265.10 1320.3V1073.31H1266.22V1320.3ZM1266.22 1320.3V1073.31H1267.34V1320.3ZM1267.34 1320.3V1106.99H1268.46V1320.3ZM1268.46 1320.3V1078.93H1269.58V1320.3ZM1269.58 1320.3V1078.93H1270.71V1320.3ZM1270.71 1320.3V1146.29H1271.83V1320.3ZM1271.83 1320.3V1151.90H1272.95V1320.3ZM1272.95 1320.3V1095.77H1274.07V1320.3ZM1274.07 1320.3V1095.77H1275.19V1320.3ZM1275.19 1320.3V1146.29H1276.31V1320.3ZM1276.31 1320.3V837.55H1277.44V1320.3ZM1277.44 1320.3V1168.74H1278.56V1320.3ZM1278.56 1320.3V1157.51H1279.68V1320.3ZM1279.68 1320.3V1185.58H1280.80V1320.3ZM1280.80 1320.3V1157.51H1281.92V1320.3ZM1281.92 1320.3V1179.97H1283.05V1320.3ZM1283.05 1320.3V1191.19H1284.17V1320.3ZM1284.17 1320.3V1157.51H1285.29V1320.3ZM1285.29 1320.3V1168.74H1286.41V1320.3ZM1286.41 1320.3V1151.90H1287.53V1320.3ZM1287.53 1320.3V1163.13H1288.65V1320.3ZM1288.65 1320.3V1179.97H1289.78V1320.3ZM1289.78 1320.3V1185.58H1290.90V1320.3ZM1290.90 1320.3V1191.19H1292.02V1320.3ZM1292.02 1320.3V1202.42H1293.14V1320.3ZM1293.14 1320.3V1163.13H1294.26V1320.3ZM1294.26 1320.3V1017.18H1295.39V1320.3ZM1295.39 1320.3V1011.57H1296.51V1320.3ZM1296.51 1320.3V1005.95H1297.63V1320.3ZM1297.63 1320.3V1056.47H1298.75V1320.3ZM1298.75 1320.3V1062.09H1299.87V1320.3ZM1299.87 1320.3V1050.86H1300.99V1320.3ZM1300.99 1320.3V1056.47H1302.12V1320.3ZM1302.12 1320.3V1028.41H1303.24V1320.3ZM1303.24 1320.3V837.55H1304.36V1320.3ZM1304.36 1320.3V1017.18H1305.48V1320.3ZM1305.48 1320.3V1005.95H1306.60V1320.3ZM1306.60 1320.3V1017.18H1307.72V1320.3ZM1307.72 1320.3V1056.47H1308.85V1320.3ZM1308.85 1320.3V1011.57H1309.97V1320.3ZM1309.97 1320.3V1157.51H1311.09V1320.3ZM1311.09 1320.3V1157.51H1312.21V1320.3ZM1312.21 1320.3V1146.29H1313.33V1320.3ZM1313.33 1320.3V1185.58H1314.46V1320.3ZM1314.46 1320.3V1090.15H1315.58V1320.3ZM1315.58 1320.3V1045.25H1316.70V1320.3ZM1316.70 1320.3V1045.25H1317.82V1320.3ZM1317.82 1320.3V1034.02H1318.94V1320.3ZM1318.94 1320.3V1000.34H1320.06V1320.3ZM1320.06 1320.3V1011.57H1321.19V1320.3ZM1321.19 1320.3V1017.18H1322.31V1320.3ZM1322.31 1320.3V1056.47H1323.43V1320.3ZM1323.43 1320.3V1140.67H1324.55V1320.3ZM1324.55 1320.3V1135.06H1325.67V1320.3ZM1325.67 1320.3V1101.38H1326.79V1320.3ZM1326.79 1320.3V1112.61H1327.92V1320.3ZM1327.92 1320.3V888.07H1329.04V1320.3ZM1329.04 1320.3V1135.06H1330.16V1320.3ZM1330.16 1320.3V1106.99H1331.28V1320.3ZM1331.28 1320.3V1095.77H1332.40V1320.3ZM1332.40 1320.3V1157.51H1333.53V1320.3ZM1333.53 1320.3V1157.51H1334.65V1320.3ZM1334.65 1320.3V1168.74H1335.77V1320.3ZM1335.77 1320.3V1179.97H1336.89V1320.3ZM1336.89 1320.3V1179.97H1338.01V1320.3ZM1338.01 1320.3V1179.97H1339.13V1320.3ZM1339.13 1320.3V1163.13H1340.26V1320.3ZM1340.26 1320.3V1157.51H1341.38V1320.3ZM1341.38 1320.3V1174.35H1342.50V1320.3ZM1342.50 1320.3V1185.58H1343.62V1320.3ZM1343.62 1320.3V1174.35H1344.74V1320.3ZM1344.74 1320.3V1168.74H1345.87V1320.3ZM1345.87 1320.3V1168.74H1346.99V1320.3ZM1346.99 1320.3V1168.74H1348.11V1320.3ZM1348.11 1320.3V1174.35H1349.23V1320.3ZM1349.23 1320.3V1163.13H1350.35V1320.3ZM1350.35 1320.3V1157.51H1351.47V1320.3ZM1351.47 1320.3V1185.58H1352.60V1320.3ZM1527.59 1320.3V1258.55H1528.71V1320.3ZM1528.71 1320.3V1264.17H1529.84V1320.3ZM1529.84 1320.3V1264.17H1530.96V1320.3ZM1530.96 1320.3V1264.17H1532.08V1320.3ZM1532.08 1320.3V1264.17H1533.20V1320.3ZM1533.20 1320.3V1264.17H1534.32V1320.3ZM1534.32 1320.3V1264.17H1535.45V1320.3ZM1535.45 1320.3V1269.78H1536.57V1320.3ZM1536.57 1320.3V1258.55H1537.69V1320.3ZM1537.69 1320.3V1258.55H1538.81V1320.3ZM1538.81 1320.3V1247.33H1539.93V1320.3ZM1539.93 1320.3V1202.42H1541.05V1320.3ZM1541.05 1320.3V1247.33H1542.18V1320.3ZM1542.18 1320.3V1247.33H1543.30V1320.3ZM1543.30 1320.3V1247.33H1544.42V1320.3ZM1544.42 1320.3V1118.22H1545.54V1320.3ZM1545.54 1320.3V1135.06H1546.66V1320.3ZM1546.66 1320.3V1151.90H1547.78V1320.3ZM1547.78 1320.3V1157.51H1548.91V1320.3ZM1548.91 1320.3V1095.77H1550.03V1320.3ZM1550.03 1320.3V1174.35H1551.15V1320.3ZM1551.15 1320.3V1028.41H1552.27V1320.3ZM1552.27 1320.3V1123.83H1553.39V1320.3ZM1553.39 1320.3V1140.67H1554.52V1320.3ZM1554.52 1320.3V1174.35H1555.64V1320.3ZM1555.64 1320.3V1174.35H1556.76V1320.3ZM1556.76 1320.3V1185.58H1557.88V1320.3ZM1557.88 1320.3V1174.35H1559.00V1320.3ZM1559.00 1320.3V1174.35H1560.12V1320.3ZM1560.12 1320.3V1168.74H1561.25V1320.3ZM1561.25 1320.3V1168.74H1562.37V1320.3ZM1562.37 1320.3V1168.74H1563.49V1320.3ZM1563.49 1320.3V1179.97H1564.61V1320.3ZM1564.61 1320.3V1174.35H1565.73V1320.3ZM1565.73 1320.3V1179.97H1566.85V1320.3ZM1566.85 1320.3V1258.55H1567.98V1320.3ZM1567.98 1320.3V1258.55H1569.10V1320.3ZM1569.10 1320.3V1258.55H1570.22V1320.3ZM1570.22 1320.3V1252.94H1571.34V1320.3ZM1571.34 1320.3V1252.94H1572.46V1320.3ZM1572.46 1320.3V1252.94H1573.59V1320.3ZM1573.59 1320.3V1258.55H1574.71V1320.3ZM1574.71 1320.3V1258.55H1575.83V1320.3ZM1575.83 1320.3V1258.55H1576.95V1320.3ZM1576.95 1320.3V1258.55H1578.07V1320.3ZM1578.07 1320.3V1236.10H1579.19V1320.3ZM1579.19 1320.3V1258.55H1580.32V1320.3ZM1580.32 1320.3V1258.55H1581.44V1320.3ZM1581.44 1320.3V1241.71H1582.56V1320.3ZM1582.56 1320.3V1236.10H1583.68V1320.3ZM1583.68 1320.3V1230.49H1584.80V1320.3ZM1584.80 1320.3V1224.87H1585.93V1320.3ZM1585.93 1320.3V1208.03H1587.05V1320.3ZM1587.05 1320.3V1135.06H1588.17V1320.3ZM1588.17 1320.3V994.73H1589.29V1320.3ZM1589.29 1320.3V1129.45H1590.41V1320.3ZM1590.41 1320.3V1129.45H1591.53V1320.3ZM1591.53 1320.3V1118.22H1592.66V1320.3ZM1592.66 1320.3V1135.06H1593.78V1320.3ZM1593.78 1320.3V1123.83H1594.90V1320.3ZM1594.90 1320.3V1123.83H1596.02V1320.3ZM1596.02 1320.3V1140.67H1597.14V1320.3ZM1597.14 1320.3V1146.29H1598.26V1320.3ZM1598.26 1320.3V1140.67H1599.39V1320.3ZM1599.39 1320.3V1112.61H1600.51V1320.3ZM1600.51 1320.3V1140.67H1601.63V1320.3ZM1601.63 1320.3V1146.29H1602.75V1320.3ZM1602.75 1320.3V1045.25H1603.87V1320.3ZM1603.87 1320.3V1151.90H1605.00V1320.3ZM1605.00 1320.3V1151.90H1606.12V1320.3ZM1606.12 1320.3V1129.45H1607.24V1320.3ZM1607.24 1320.3V1163.13H1608.36V1320.3ZM1608.36 1320.3V1157.51H1609.48V1320.3ZM1609.48 1320.3V1140.67H1610.60V1320.3ZM1610.60 1320.3V1179.97H1611.73V1320.3ZM1611.73 1320.3V1174.35H1612.85V1320.3ZM1612.85 1320.3V1073.31H1613.97V1320.3ZM1613.97 1320.3V1174.35H1615.09V1320.3ZM1615.09 1320.3V1163.13H1616.21V1320.3ZM1616.21 1320.3V1179.97H1617.33V1320.3ZM1617.33 1320.3V1163.13H1618.46V1320.3ZM1618.46 1320.3V1174.35H1619.58V1320.3ZM1619.58 1320.3V1174.35H1620.70V1320.3ZM1620.70 1320.3V1163.13H1621.82V1320.3ZM1621.82 1320.3V1179.97H1622.94V1320.3ZM1622.94 1320.3V1174.35H1624.07V1320.3ZM1624.07 1320.3V1174.35H1625.19V1320.3ZM1625.19 1320.3V1179.97H1626.31V1320.3ZM1626.31 1320.3V1174.35H1627.43V1320.3ZM1627.43 1320.3V1174.35H1628.55V1320.3ZM1628.55 1320.3V1174.35H1629.67V1320.3ZM1629.67 1320.3V1174.35H1630.80V1320.3ZM1630.80 1320.3V1140.67H1631.92V1320.3ZM1631.92 1320.3V1056.47H1633.04V1320.3ZM1633.04 1320.3V1157.51H1634.16V1320.3ZM1634.16 1320.3V1157.51H1635.28V1320.3ZM1635.28 1320.3V1157.51H1636.40V1320.3ZM1636.40 1320.3V1146.29H1637.53V1320.3ZM1637.53 1320.3V1157.51H1638.65V1320.3ZM1638.65 1320.3V1163.13H1639.77V1320.3ZM1639.77 1320.3V1056.47H1640.89V1320.3ZM1640.89 1320.3V1168.74H1642.01V1320.3ZM1642.01 1320.3V1135.06H1643.14V1320.3ZM1643.14 1320.3V1146.29H1644.26V1320.3ZM1644.26 1320.3V1146.29H1645.38V1320.3ZM1645.38 1320.3V1146.29H1646.50V1320.3ZM1646.50 1320.3V1135.06H1647.62V1320.3ZM1647.62 1320.3V1135.06H1648.74V1320.3ZM1648.74 1320.3V1028.41H1649.87V1320.3ZM1649.87 1320.3V1163.13H1650.99V1320.3ZM1650.99 1320.3V1163.13H1652.11V1320.3ZM1652.11 1320.3V1101.38H1653.23V1320.3ZM1653.23 1320.3V1034.02H1654.35V1320.3ZM1654.35 1320.3V1095.77H1655.48V1320.3ZM1655.48 1320.3V1129.45H1656.60V1320.3ZM1656.60 1320.3V1123.83H1657.72V1320.3ZM1657.72 1320.3V1123.83H1658.84V1320.3ZM1658.84 1320.3V1163.13H1659.96V1320.3ZM1659.96 1320.3V1174.35H1661.08V1320.3ZM1661.08 1320.3V1191.19H1662.21V1320.3ZM1662.21 1320.3V1208.03H1663.33V1320.3ZM1663.33 1320.3V1224.87H1664.45V1320.3ZM1664.45 1320.3V1241.71H1665.57V1320.3ZM1665.57 1320.3V1258.55H1666.69V1320.3ZM1666.69 1320.3V1264.17H1667.81V1320.3ZM1667.81 1320.3V1264.17H1668.94V1320.3ZM1668.94 1320.3V1264.17H1670.06V1320.3ZM1670.06 1320.3V1264.17H1671.18V1320.3ZM1671.18 1320.3V1264.17H1672.30V1320.3ZM1672.30 1320.3V1264.17H1673.42V1320.3ZM1673.42 1320.3V1264.17H1674.55V1320.3ZM1674.55 1320.3V1264.17H1675.67V1320.3ZM1850.66 1320.3V1252.94H1851.79V1320.3ZM1851.79 1320.3V1252.94H1852.91V1320.3ZM1852.91 1320.3V1252.94H1854.03V1320.3ZM1854.03 1320.3V1252.94H1855.15V1320.3ZM1855.15 1320.3V1252.94H1856.27V1320.3ZM1856.27 1320.3V1208.03H1857.39V1320.3ZM1857.39 1320.3V1191.19H1858.52V1320.3ZM1858.52 1320.3V1191.19H1859.64V1320.3ZM1859.64 1320.3V1185.58H1860.76V1320.3ZM1860.76 1320.3V1168.74H1861.88V1320.3ZM1861.88 1320.3V1050.86H1863.00V1320.3ZM1863.00 1320.3V1050.86H1864.13V1320.3ZM1864.13 1320.3V1045.25H1865.25V1320.3ZM1865.25 1320.3V1039.63H1866.37V1320.3ZM1866.37 1320.3V1039.63H1867.49V1320.3ZM1867.49 1320.3V1034.02H1868.61V1320.3ZM1868.61 1320.3V921.75H1869.73V1320.3ZM1869.73 1320.3V865.62H1870.86V1320.3ZM1870.86 1320.3V837.55H1871.98V1320.3ZM1871.98 1320.3V1078.93H1873.10V1320.3ZM1873.10 1320.3V1062.09H1874.22V1320.3ZM1874.22 1320.3V1185.58H1875.34V1320.3ZM1875.34 1320.3V1179.97H1876.46V1320.3ZM1876.46 1320.3V1179.97H1877.59V1320.3ZM1877.59 1320.3V1179.97H1878.71V1320.3ZM1878.71 1320.3V1179.97H1879.83V1320.3ZM1879.83 1320.3V1073.31H1880.95V1320.3ZM1880.95 1320.3V1084.54H1882.07V1320.3ZM1882.07 1320.3V1028.41H1883.20V1320.3ZM1883.20 1320.3V1118.22H1884.32V1320.3ZM1884.32 1320.3V899.30H1885.44V1320.3ZM1885.44 1320.3V1017.18H1886.56V1320.3ZM1886.56 1320.3V1039.63H1887.68V1320.3ZM1887.68 1320.3V1028.41H1888.80V1320.3ZM1888.80 1320.3V1056.47H1889.93V1320.3ZM1889.93 1320.3V1045.25H1891.05V1320.3ZM1891.05 1320.3V1034.02H1892.17V1320.3ZM1892.17 1320.3V1011.57H1893.29V1320.3ZM1893.29 1320.3V1000.34H1894.41V1320.3ZM1894.41 1320.3V989.11H1895.54V1320.3ZM1895.54 1320.3V1101.38H1896.66V1320.3ZM1896.66 1320.3V837.55H1897.78V1320.3ZM1897.78 1320.3V1106.99H1898.90V1320.3ZM1898.90 1320.3V1112.61H1900.02V1320.3ZM1900.02 1320.3V1095.77H1901.14V1320.3ZM1901.14 1320.3V1034.02H1902.27V1320.3ZM1902.27 1320.3V1050.86H1903.39V1320.3ZM1903.39 1320.3V1073.31H1904.51V1320.3ZM1904.51 1320.3V1118.22H1905.63V1320.3ZM1905.63 1320.3V1118.22H1906.75V1320.3ZM1906.75 1320.3V1118.22H1907.87V1320.3ZM1907.87 1320.3V837.55H1909.00V1320.3ZM1909.00 1320.3V1084.54H1910.12V1320.3ZM1910.12 1320.3V1084.54H1911.24V1320.3ZM1911.24 1320.3V1112.61H1912.36V1320.3ZM1912.36 1320.3V1163.13H1913.48V1320.3ZM1913.48 1320.3V1174.35H1914.61V1320.3ZM1914.61 1320.3V1174.35H1915.73V1320.3ZM1915.73 1320.3V1135.06H1916.85V1320.3ZM1916.85 1320.3V1151.90H1917.97V1320.3ZM1917.97 1320.3V1168.74H1919.09V1320.3ZM1919.09 1320.3V1179.97H1920.21V1320.3ZM1920.21 1320.3V876.85H1921.34V1320.3ZM1921.34 1320.3V1163.13H1922.46V1320.3ZM1922.46 1320.3V944.21H1923.58V1320.3ZM1923.58 1320.3V1151.90H1924.70V1320.3ZM1924.70 1320.3V1174.35H1925.82V1320.3ZM1925.82 1320.3V1174.35H1926.94V1320.3ZM1926.94 1320.3V1179.97H1928.07V1320.3ZM1928.07 1320.3V1179.97H1929.19V1320.3ZM1929.19 1320.3V1174.35H1930.31V1320.3ZM1930.31 1320.3V1163.13H1931.43V1320.3ZM1931.43 1320.3V1174.35H1932.55V1320.3ZM1932.55 1320.3V1163.13H1933.68V1320.3ZM1933.68 1320.3V1050.86H1934.80V1320.3ZM1934.80 1320.3V1146.29H1935.92V1320.3ZM1935.92 1320.3V1090.15H1937.04V1320.3ZM1937.04 1320.3V1174.35H1938.16V1320.3ZM1938.16 1320.3V1179.97H1939.28V1320.3ZM1939.28 1320.3V1168.74H1940.41V1320.3ZM1940.41 1320.3V1112.61H1941.53V1320.3ZM1941.53 1320.3V1174.35H1942.65V1320.3ZM1942.65 1320.3V1174.35H1943.77V1320.3ZM1943.77 1320.3V1078.93H1944.89V1320.3ZM1944.89 1320.3V1090.15H1946.02V1320.3ZM1946.02 1320.3V1095.77H1947.14V1320.3ZM1947.14 1320.3V1067.70H1948.26V1320.3ZM1948.26 1320.3V1084.54H1949.38V1320.3ZM1949.38 1320.3V1095.77H1950.50V1320.3ZM1950.50 1320.3V1095.77H1951.62V1320.3ZM1951.62 1320.3V1045.25H1952.75V1320.3ZM1952.75 1320.3V1146.29H1953.87V1320.3ZM1953.87 1320.3V1062.09H1954.99V1320.3ZM1954.99 1320.3V1106.99H1956.11V1320.3ZM1956.11 1320.3V1095.77H1957.23V1320.3ZM1957.23 1320.3V1084.54H1958.35V1320.3ZM1958.35 1320.3V1039.63H1959.48V1320.3ZM1959.48 1320.3V1146.29H1960.60V1320.3ZM1960.60 1320.3V1135.06H1961.72V1320.3ZM1961.72 1320.3V1146.29H1962.84V1320.3ZM1962.84 1320.3V1163.13H1963.96V1320.3ZM1963.96 1320.3V1084.54H1965.09V1320.3ZM1965.09 1320.3V983.50H1966.21V1320.3ZM1966.21 1320.3V1078.93H1967.33V1320.3ZM1967.33 1320.3V1095.77H1968.45V1320.3ZM1968.45 1320.3V1151.90H1969.57V1320.3ZM1969.57 1320.3V1140.67H1970.69V1320.3ZM1970.69 1320.3V1123.83H1971.82V1320.3ZM1971.82 1320.3V1163.13H1972.94V1320.3ZM1972.94 1320.3V1135.06H1974.06V1320.3ZM1974.06 1320.3V1140.67H1975.18V1320.3ZM1975.18 1320.3V1135.06H1976.30V1320.3ZM1976.30 1320.3V1028.41H1977.42V1320.3ZM1977.42 1320.3V1157.51H1978.55V1320.3ZM1978.55 1320.3V1174.35H1979.67V1320.3ZM1979.67 1320.3V1185.58H1980.79V1320.3ZM1980.79 1320.3V1179.97H1981.91V1320.3ZM1981.91 1320.3V1179.97H1983.03V1320.3ZM1983.03 1320.3V1185.58H1984.16V1320.3ZM1984.16 1320.3V1179.97H1985.28V1320.3ZM1985.28 1320.3V1095.77H1986.40V1320.3ZM1986.40 1320.3V1191.19H1987.52V1320.3ZM1987.52 1320.3V1202.42H1988.64V1320.3ZM1988.64 1320.3V1174.35H1989.76V1320.3ZM1989.76 1320.3V1168.74H1990.89V1320.3ZM1990.89 1320.3V1157.51H1992.01V1320.3ZM1992.01 1320.3V1185.58H1993.13V1320.3ZM1993.13 1320.3V1196.81H1994.25V1320.3ZM1994.25 1320.3V1140.67H1995.37V1320.3ZM1995.37 1320.3V1191.19H1996.49V1320.3ZM1996.49 1320.3V1191.19H1997.62V1320.3ZM1997.62 1320.3V1196.81H1998.74V1320.3ZM2173.74 1320.3V1264.17H2174.86V1320.3ZM2174.86 1320.3V1264.17H2175.98V1320.3ZM2175.98 1320.3V1264.17H2177.10V1320.3ZM2177.10 1320.3V1269.78H2178.22V1320.3ZM2178.22 1320.3V1269.78H2179.34V1320.3ZM2179.34 1320.3V1269.78H2180.47V1320.3ZM2180.47 1320.3V1269.78H2181.59V1320.3ZM2181.59 1320.3V1230.49H2182.71V1320.3ZM2182.71 1320.3V1230.49H2183.83V1320.3ZM2183.83 1320.3V1157.51H2184.95V1320.3ZM2184.95 1320.3V1157.51H2186.08V1320.3ZM2186.08 1320.3V1157.51H2187.20V1320.3ZM2187.20 1320.3V1151.90H2188.32V1320.3ZM2188.32 1320.3V1196.81H2189.44V1320.3ZM2189.44 1320.3V1191.19H2190.56V1320.3ZM2190.56 1320.3V1191.19H2191.68V1320.3ZM2191.68 1320.3V1129.45H2192.81V1320.3ZM2192.81 1320.3V1084.54H2193.93V1320.3ZM2193.93 1320.3V1168.74H2195.05V1320.3ZM2195.05 1320.3V1185.58H2196.17V1320.3ZM2196.17 1320.3V1191.19H2197.29V1320.3ZM2197.29 1320.3V1179.97H2198.41V1320.3ZM2198.41 1320.3V1179.97H2199.54V1320.3ZM2199.54 1320.3V1191.19H2200.66V1320.3ZM2200.66 1320.3V1196.81H2201.78V1320.3ZM2201.78 1320.3V1191.19H2202.90V1320.3ZM2202.90 1320.3V1022.79H2204.02V1320.3ZM2204.02 1320.3V1000.34H2205.15V1320.3ZM2205.15 1320.3V1118.22H2206.27V1320.3ZM2206.27 1320.3V1191.19H2207.39V1320.3ZM2207.39 1320.3V1191.19H2208.51V1320.3ZM2208.51 1320.3V1163.13H2209.63V1320.3ZM2209.63 1320.3V1000.34H2210.75V1320.3ZM2210.75 1320.3V1022.79H2211.88V1320.3ZM2211.88 1320.3V1118.22H2213.00V1320.3ZM2213.00 1320.3V1163.13H2214.12V1320.3ZM2214.12 1320.3V1129.45H2215.24V1320.3ZM2215.24 1320.3V1163.13H2216.36V1320.3ZM2216.36 1320.3V1185.58H2217.48V1320.3ZM2217.48 1320.3V1168.74H2218.61V1320.3ZM2218.61 1320.3V983.50H2219.73V1320.3ZM2219.73 1320.3V1045.25H2220.85V1320.3ZM2220.85 1320.3V1151.90H2221.97V1320.3ZM2221.97 1320.3V1179.97H2223.09V1320.3ZM2223.09 1320.3V1185.58H2224.22V1320.3ZM2224.22 1320.3V1174.35H2225.34V1320.3ZM2225.34 1320.3V1129.45H2226.46V1320.3ZM2226.46 1320.3V1034.02H2227.58V1320.3ZM2227.58 1320.3V989.11H2228.70V1320.3ZM2228.70 1320.3V1106.99H2229.82V1320.3ZM2229.82 1320.3V1151.90H2230.95V1320.3ZM2230.95 1320.3V983.50H2232.07V1320.3ZM2232.07 1320.3V1028.41H2233.19V1320.3ZM2233.19 1320.3V1146.29H2234.31V1320.3ZM2234.31 1320.3V1179.97H2235.43V1320.3ZM2235.43 1320.3V1168.74H2236.55V1320.3ZM2236.55 1320.3V1135.06H2237.68V1320.3ZM2237.68 1320.3V966.66H2238.80V1320.3ZM2238.80 1320.3V1062.09H2239.92V1320.3ZM2239.92 1320.3V1179.97H2241.04V1320.3ZM2241.04 1320.3V1174.35H2242.16V1320.3ZM2242.16 1320.3V1168.74H2243.29V1320.3ZM2243.29 1320.3V1191.19H2244.41V1320.3ZM2244.41 1320.3V1191.19H2245.53V1320.3ZM2245.53 1320.3V1174.35H2246.65V1320.3ZM2246.65 1320.3V1168.74H2247.77V1320.3ZM2247.77 1320.3V1174.35H2248.89V1320.3ZM2248.89 1320.3V1191.19H2250.02V1320.3ZM2250.02 1320.3V1191.19H2251.14V1320.3ZM2251.14 1320.3V1179.97H2252.26V1320.3ZM2252.26 1320.3V1157.51H2253.38V1320.3ZM2253.38 1320.3V1196.81H2254.50V1320.3ZM2254.50 1320.3V1213.65H2255.63V1320.3ZM2255.63 1320.3V1241.71H2256.75V1320.3ZM2256.75 1320.3V1213.65H2257.87V1320.3ZM2257.87 1320.3V1135.06H2258.99V1320.3ZM2258.99 1320.3V1062.09H2260.11V1320.3ZM2260.11 1320.3V1191.19H2261.23V1320.3ZM2261.23 1320.3V1202.42H2262.36V1320.3ZM2262.36 1320.3V1179.97H2263.48V1320.3ZM2263.48 1320.3V1034.02H2264.60V1320.3ZM2264.60 1320.3V1078.93H2265.72V1320.3ZM2265.72 1320.3V1185.58H2266.84V1320.3ZM2266.84 1320.3V1196.81H2267.96V1320.3ZM2267.96 1320.3V1179.97H2269.09V1320.3ZM2269.09 1320.3V1185.58H2270.21V1320.3ZM2270.21 1320.3V1196.81H2271.33V1320.3ZM2271.33 1320.3V1196.81H2272.45V1320.3ZM2272.45 1320.3V1129.45H2273.57V1320.3ZM2273.57 1320.3V1028.41H2274.70V1320.3ZM2274.70 1320.3V1039.63H2275.82V1320.3ZM2275.82 1320.3V1185.58H2276.94V1320.3ZM2276.94 1320.3V1196.81H2278.06V1320.3ZM2278.06 1320.3V1174.35H2279.18V1320.3ZM2279.18 1320.3V1179.97H2280.30V1320.3ZM2280.30 1320.3V1196.81H2281.43V1320.3ZM2281.43 1320.3V1179.97H2282.55V1320.3ZM2282.55 1320.3V1000.34H2283.67V1320.3ZM2283.67 1320.3V1039.63H2284.79V1320.3ZM2284.79 1320.3V1022.79H2285.91V1320.3ZM2285.91 1320.3V1050.86H2287.03V1320.3ZM2287.03 1320.3V1129.45H2288.16V1320.3ZM2288.16 1320.3V1241.71H2289.28V1320.3ZM2289.28 1320.3V1258.55H2290.40V1320.3ZM2290.40 1320.3V1224.87H2291.52V1320.3ZM2291.52 1320.3V1191.19H2292.64V1320.3ZM2292.64 1320.3V1168.74H2293.77V1320.3ZM2293.77 1320.3V1174.35H2294.89V1320.3ZM2294.89 1320.3V1185.58H2296.01V1320.3ZM2296.01 1320.3V1174.35H2297.13V1320.3ZM2297.13 1320.3V1017.18H2298.25V1320.3ZM2298.25 1320.3V1022.79H2299.37V1320.3ZM2299.37 1320.3V1022.79H2300.50V1320.3ZM2300.50 1320.3V1034.02H2301.62V1320.3ZM2301.62 1320.3V1168.74H2302.74V1320.3ZM2302.74 1320.3V1168.74H2303.86V1320.3ZM2303.86 1320.3V1185.58H2304.98V1320.3ZM2304.98 1320.3V1168.74H2306.11V1320.3ZM2306.11 1320.3V1163.13H2307.23V1320.3ZM2307.23 1320.3V1179.97H2308.35V1320.3ZM2308.35 1320.3V1185.58H2309.47V1320.3ZM2309.47 1320.3V1185.58H2310.59V1320.3ZM2310.59 1320.3V1168.74H2311.71V1320.3ZM2311.71 1320.3V1185.58H2312.84V1320.3ZM2312.84 1320.3V1213.65H2313.96V1320.3ZM2313.96 1320.3V1236.10H2315.08V1320.3ZM2315.08 1320.3V1213.65H2316.20V1320.3ZM2316.20 1320.3V1202.42H2317.32V1320.3ZM2317.32 1320.3V1196.81H2318.44V1320.3ZM2318.44 1320.3V1174.35H2319.57V1320.3ZM2319.57 1320.3V1185.58H2320.69V1320.3ZM2320.69 1320.3V1191.19H2321.81V1320.3Z" fill="#25916f" shape-rendering="crispEdges"/>
<rect x="154" y="815.1" width="2" height="506.2" fill="#666"/>
<rect x="155.1" y="1320.3" width="2261.5" height="1.6" fill="#666"/>
<line x1="144" y1="1320.5" x2="155" y2="1320.5" stroke="#8c8c8c" stroke-width="1.2"/>
<text transform="translate(134.3 1326.8) scale(1.1 1)" font-size="21.2" fill="#333" text-anchor="end" font-family='"Liberation Sans", sans-serif'>0</text>
<line x1="144" y1="1264.5" x2="155" y2="1264.5" stroke="#8c8c8c" stroke-width="1.2"/>
<text transform="translate(134.3 1270.67) scale(1.1 1)" font-size="21.2" fill="#333" text-anchor="end" font-family='"Liberation Sans", sans-serif'>10</text>
<line x1="144" y1="1208.5" x2="155" y2="1208.5" stroke="#8c8c8c" stroke-width="1.2"/>
<text transform="translate(134.3 1214.53) scale(1.1 1)" font-size="21.2" fill="#333" text-anchor="end" font-family='"Liberation Sans", sans-serif'>20</text>
<line x1="144" y1="1151.5" x2="155" y2="1151.5" stroke="#8c8c8c" stroke-width="1.2"/>
<text transform="translate(134.3 1158.4) scale(1.1 1)" font-size="21.2" fill="#333" text-anchor="end" font-family='"Liberation Sans", sans-serif'>30</text>
<line x1="144" y1="1095.5" x2="155" y2="1095.5" stroke="#8c8c8c" stroke-width="1.2"/>
<text transform="translate(134.3 1102.27) scale(1.1 1)" font-size="21.2" fill="#333" text-anchor="end" font-family='"Liberation Sans", sans-serif'>40</text>
<line x1="144" y1="1039.5" x2="155" y2="1039.5" stroke="#8c8c8c" stroke-width="1.2"/>
<text transform="translate(134.3 1046.13) scale(1.1 1)" font-size="21.2" fill="#333" text-anchor="end" font-family='"Liberation Sans", sans-serif'>50</text>
<line x1="144" y1="983.5" x2="155" y2="983.5" stroke="#8c8c8c" stroke-width="1.2"/>
<text transform="translate(134.3 990) scale(1.1 1)" font-size="21.2" fill="#333" text-anchor="end" font-family='"Liberation Sans", sans-serif'>60</text>
<line x1="144" y1="927.5" x2="155" y2="927.5" stroke="#8c8c8c" stroke-width="1.2"/>
<text transform="translate(134.3 933.87) scale(1.1 1)" font-size="21.2" fill="#333" text-anchor="end" font-family='"Liberation Sans", sans-serif'>70</text>
<line x1="144" y1="871.5" x2="155" y2="871.5" stroke="#8c8c8c" stroke-width="1.2"/>
<text transform="translate(134.3 877.73) scale(1.1 1)" font-size="21.2" fill="#333" text-anchor="end" font-family='"Liberation Sans", sans-serif'>80</text>
<line x1="144" y1="815.5" x2="155" y2="815.5" stroke="#8c8c8c" stroke-width="1.2"/>
<text transform="translate(134.3 821.6) scale(1.1 1)" font-size="21.2" fill="#333" text-anchor="end" font-family='"Liberation Sans", sans-serif'>90</text>
<line x1="155.5" y1="1321.8" x2="155.5" y2="1332" stroke="#c0c0c0" stroke-width="1.2"/>
<line x1="478.5" y1="1321.8" x2="478.5" y2="1332" stroke="#c0c0c0" stroke-width="1.2"/>
<line x1="801.5" y1="1321.8" x2="801.5" y2="1332" stroke="#c0c0c0" stroke-width="1.2"/>
<line x1="1124.5" y1="1321.8" x2="1124.5" y2="1332" stroke="#c0c0c0" stroke-width="1.2"/>
<line x1="1447.5" y1="1321.8" x2="1447.5" y2="1332" stroke="#c0c0c0" stroke-width="1.2"/>
<line x1="1770.5" y1="1321.8" x2="1770.5" y2="1332" stroke="#c0c0c0" stroke-width="1.2"/>
<line x1="2094.5" y1="1321.8" x2="2094.5" y2="1332" stroke="#c0c0c0" stroke-width="1.2"/>
<line x1="2417.5" y1="1321.8" x2="2417.5" y2="1332" stroke="#c0c0c0" stroke-width="1.2"/>
<text transform="translate(156.1 1357.2) scale(1.08 1)" font-size="22.4" fill="#1a1a1a" text-anchor="middle" font-family='"Liberation Sans", sans-serif'>sam. 24</text>
<text transform="translate(479.17 1357.2) scale(1.08 1)" font-size="22.4" fill="#1a1a1a" text-anchor="middle" font-family='"Liberation Sans", sans-serif'>dim. 25</text>
<text transform="translate(802.24 1357.2) scale(1.08 1)" font-size="22.4" fill="#1a1a1a" text-anchor="middle" font-family='"Liberation Sans", sans-serif'>lun. 26</text>
<text transform="translate(1125.31 1357.2) scale(1.08 1)" font-size="22.4" fill="#1a1a1a" text-anchor="middle" font-family='"Liberation Sans", sans-serif'>mar. 27</text>
<text transform="translate(1448.39 1357.2) scale(1.08 1)" font-size="22.4" fill="#1a1a1a" text-anchor="middle" font-family='"Liberation Sans", sans-serif'>mer. 28</text>
<text transform="translate(1771.46 1357.2) scale(1.08 1)" font-size="22.4" fill="#1a1a1a" text-anchor="middle" font-family='"Liberation Sans", sans-serif'>jeu. 29</text>
<text transform="translate(2094.53 1357.2) scale(1.08 1)" font-size="22.4" fill="#1a1a1a" text-anchor="middle" font-family='"Liberation Sans", sans-serif'>ven. 30</text>
<text x="0" y="0" font-size="23.5" fill="#444" text-anchor="middle" font-family='"Liberation Sans", sans-serif' textLength="31.5" lengthAdjust="spacingAndGlyphs" transform="translate(87.2 1067.4) rotate(-90)">kW</text>
<rect x="561.9" y="806.3" width="411.2" height="57.4" rx="11" ry="11" fill="#fff" stroke="#808080" stroke-width="4"/>
<text x="778" y="847" font-size="29.2" fill="#0a0a0a" stroke="#0a0a0a" stroke-width="0.35" text-anchor="middle" font-family='"Liberation Sans", sans-serif' xml:space="preserve" textLength="337.5" lengthAdjust="spacingAndGlyphs">Consommation: 3 037 kWh</text>
<rect x="1100.3" y="807.3" width="410.8" height="55.2" rx="11" ry="11" fill="#fff" stroke="#808080" stroke-width="4"/>
<text x="1316" y="846.5" font-size="29.2" fill="#0a0a0a" stroke="#0a0a0a" stroke-width="0.35" text-anchor="middle" font-family='"Liberation Sans", sans-serif' xml:space="preserve" textLength="192" lengthAdjust="spacingAndGlyphs">P Max :  86 kW</text>
<rect x="1610.7" y="807.3" width="410.8" height="55.2" rx="11" ry="11" fill="#fff" stroke="#808080" stroke-width="4"/>
<text x="1826" y="846.5" font-size="29.2" fill="#0a0a0a" stroke="#0a0a0a" stroke-width="0.35" text-anchor="middle" font-family='"Liberation Sans", sans-serif' xml:space="preserve" textLength="162.7" lengthAdjust="spacingAndGlyphs">P min : 6 kW</text>
<rect x="2321.7" y="1322.2" width="116" height="56.6" fill="#fff"/>
<path d="M2360.15 1342.38 A12.4 12.4 0 1 0 2361.37 1350.57" fill="none" stroke="#0a6db7" stroke-width="5.4" stroke-linecap="round"/>
<path d="M2350.3 1350.9 H2361.6" fill="none" stroke="#0a6db7" stroke-width="5.2" stroke-linecap="round"/>
<text x="2365.2" y="1363.5" font-size="36" font-weight="bold" fill="#0a6db7" font-family='"Liberation Sans", sans-serif'>2</text>
<path d="M2392.3 1324.6 L2391.5 1336.1 L2399.9 1338.4 L2389 1363.1 L2394 1342.2 L2383.6 1338.4 Z" fill="#e85a26"/>
<path d="M2403.2 1338.8 H2424.5 L2418.5 1345.1 H2400.9 Z" fill="#f39420"/>
<path d="M2398.6 1348 H2418.3 L2412.4 1354.1 H2396.7 Z" fill="#f39420"/>
<path d="M2395.3 1357 H2417 L2411 1363.3 H2392.8 Z" fill="#f39420"/>
<text x="2393.6" y="1334.6" font-size="7.6" font-weight="bold" fill="#ee7a4e" font-family='"Liberation Sans", sans-serif' textLength="30.5" lengthAdjust="spacingAndGlyphs">FRANCE</text>
<text x="2339.2" y="1368.4" font-size="4.2" fill="#4a92cc" font-family='"Liberation Sans", sans-serif' textLength="74.5" lengthAdjust="spacingAndGlyphs">Optimisation des ressources énergétiques</text>
</svg>
</body></html>
